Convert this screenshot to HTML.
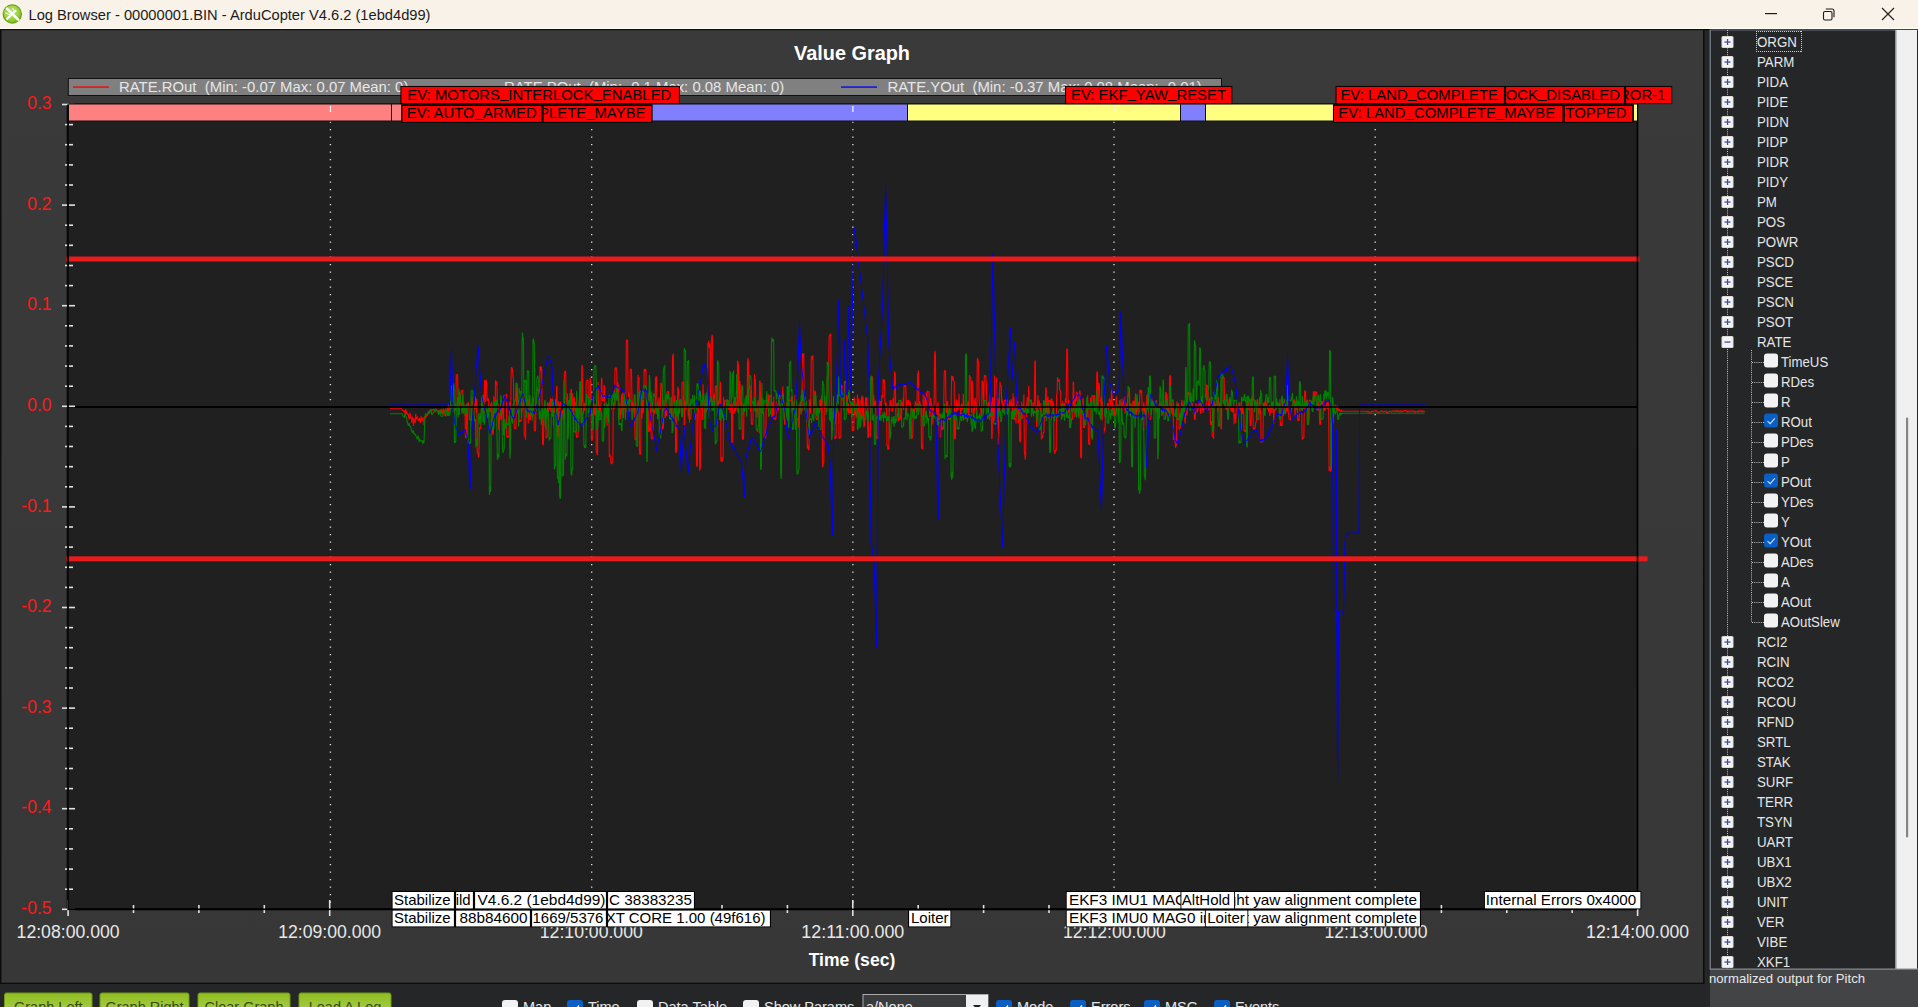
<!DOCTYPE html><html><head><meta charset="utf-8"><style>html,body{margin:0;padding:0;width:1918px;height:1007px;overflow:hidden;background:#252628}svg text{font-family:"Liberation Sans", sans-serif;white-space:pre}</style></head><body><svg width="1918" height="1007" viewBox="0 0 1918 1007" style="position:absolute;left:0;top:0;font-family:'Liberation Sans', sans-serif"><defs><linearGradient id="gbg" x1="0" y1="0" x2="0" y2="1"><stop offset="0" stop-color="#3a3a3a"/><stop offset="1" stop-color="#373737"/></linearGradient><linearGradient id="btn" x1="0" y1="0" x2="0" y2="1"><stop offset="0" stop-color="#8fbd1f"/><stop offset="1" stop-color="#b5d86a"/></linearGradient><clipPath id="plotclip"><rect x="69" y="105" width="1568" height="804"/></clipPath></defs><rect x="0" y="0" width="1918" height="1007" fill="#252628"/><rect x="0" y="0" width="1918" height="29" fill="#f9f2e9"/><rect x="0" y="27.8" width="1918" height="1.2" fill="#fffdf6"/><rect x="0" y="29" width="1918" height="1" fill="#1a1a1a"/><defs><radialGradient id="icg" cx="0.45" cy="0.4" r="0.6"><stop offset="0" stop-color="#c4e48a"/><stop offset="0.7" stop-color="#9ccf3c"/><stop offset="1" stop-color="#7cb81c"/></radialGradient></defs><circle cx="12.3" cy="14" r="9.7" fill="#5f9e0e"/><circle cx="12.3" cy="14" r="8.7" fill="url(#icg)"/><path d="M7 8.6 L18.2 19.6" stroke="#ffffff" stroke-width="2.6" stroke-linecap="round"/><path d="M7.2 18.8 L15.6 10.8" stroke="#fbfff4" stroke-width="2.2" stroke-linecap="round"/><path d="M5.5 13 L9.5 14.5 M13 8.5 L14.5 12" stroke="#eef8dc" stroke-width="1.3" stroke-linecap="round"/><text x="28.5" y="20" font-size="14.7" fill="#1c1c1c" text-anchor="start" font-weight="400" textLength="402" lengthAdjust="spacingAndGlyphs">Log Browser - 00000001.BIN - ArduCopter V4.6.2 (1ebd4d99)</text><rect x="1765" y="13" width="12" height="1.2" fill="#1c1c1c"/><rect x="1823.5" y="11.5" width="8.5" height="8.5" rx="1.5" fill="none" stroke="#1c1c1c" stroke-width="1.1"/><path d="M1825.8 9 H1832 a2 2 0 0 1 2 2 V17.2" fill="none" stroke="#1c1c1c" stroke-width="1.1"/><path d="M1882 8 L1894 20 M1894 8 L1882 20" stroke="#1c1c1c" stroke-width="1.1"/><rect x="0" y="29" width="1710" height="1.2" fill="#000"/><rect x="0" y="29" width="1704.7" height="955" fill="#0c0c0c"/><rect x="1.5" y="30.2" width="1701.5" height="952.5" fill="url(#gbg)"/><rect x="68" y="104.5" width="1569" height="804.8" fill="#202020"/><text x="852" y="60" font-size="20" fill="#ffffff" text-anchor="middle" font-weight="700" textLength="116" lengthAdjust="spacingAndGlyphs">Value Graph</text><line x1="330.45" y1="121.6" x2="330.45" y2="909.3" stroke="#e8e8e8" stroke-width="1.3" stroke-dasharray="1.1 6.4"/><line x1="591.7" y1="121.6" x2="591.7" y2="909.3" stroke="#e8e8e8" stroke-width="1.3" stroke-dasharray="1.1 6.4"/><line x1="852.9" y1="121.6" x2="852.9" y2="909.3" stroke="#e8e8e8" stroke-width="1.3" stroke-dasharray="1.1 6.4"/><line x1="1114.0" y1="121.6" x2="1114.0" y2="909.3" stroke="#e8e8e8" stroke-width="1.3" stroke-dasharray="1.1 6.4"/><line x1="1375.2" y1="121.6" x2="1375.2" y2="909.3" stroke="#e8e8e8" stroke-width="1.3" stroke-dasharray="1.1 6.4"/><rect x="68" y="406.2" width="1569" height="1.6" fill="#000"/><g clip-path="url(#plotclip)" fill="none" stroke-width="1.1" stroke-linejoin="bevel"><path d="M390.0 408.8L390.4 408.8L390.9 408.8L391.3 408.8L391.7 408.8L392.2 408.8L392.6 408.8L393.1 408.8L393.5 408.8L393.9 408.8L394.4 408.8L394.8 408.8L395.2 408.8L395.7 408.8L396.1 408.8L396.5 408.8L397.0 408.8L397.4 408.8L397.8 408.8L398.3 408.8L398.7 408.8L399.2 408.8L399.6 408.8L400.0 408.8L400.5 408.8L400.9 408.8L401.3 408.8L401.8 408.8L402.2 409.5L402.6 410.1L403.1 410.6L403.5 411.0L404.0 410.6L404.4 412.3L404.8 410.4L405.3 415.7L405.7 409.3L406.1 413.9L406.6 410.7L407.0 413.8L407.4 414.5L407.9 414.4L408.3 413.8L408.7 418.3L409.2 417.7L409.6 419.1L410.1 412.7L410.5 417.8L410.9 417.9L411.4 416.7L411.8 422.9L412.2 416.6L412.7 419.3L413.1 419.4L413.5 425.9L414.0 418.0L414.4 422.2L414.9 422.3L415.3 422.4L415.7 413.9L416.2 419.3L416.6 418.2L417.0 418.0L417.5 416.5L417.9 419.4L418.3 420.6L418.8 420.8L419.2 418.5L419.6 418.6L420.1 421.2L420.5 423.0L421.0 416.4L421.4 417.6L421.8 419.4L422.3 420.3L422.7 417.5L423.1 420.9L423.6 420.2L424.0 425.1L424.4 416.9L424.9 417.0L425.3 418.4L425.8 416.0L426.2 417.4L426.6 414.2L427.1 415.2L427.5 415.6L427.9 414.5L428.4 411.5L428.8 412.4L429.2 410.5L429.7 412.5L430.1 410.4L430.5 410.8L431.0 409.1L431.4 411.9L431.9 410.2L432.3 410.0L432.7 409.5L433.2 410.0L433.6 409.4L434.0 409.3L434.5 411.5L434.9 412.2L435.3 410.0L435.8 410.2L436.2 410.0L436.7 410.4L437.1 410.5L437.5 411.6L438.0 412.6L438.4 411.0L438.8 411.1L439.3 412.9L439.7 411.6L440.1 413.3L440.6 409.5L441.0 413.3L441.4 411.8L441.9 408.9L442.3 413.4L442.8 414.1L443.2 412.2L443.6 408.7L444.1 410.0L444.5 410.9L444.9 416.0L445.4 416.0L445.8 415.0L446.2 411.3L446.7 411.9L447.1 408.8L447.6 407.6L448.0 412.6L448.4 403.7L448.9 410.8L449.3 406.9L449.7 408.0L450.2 410.7L450.6 404.5L451.0 408.8L451.5 405.5L451.9 407.4L452.3 405.0L452.8 408.9L453.2 403.4L453.7 411.5L454.1 408.7L454.5 417.6L455.0 404.0L455.4 410.6L455.8 407.4L456.3 375.0L456.7 374.8L457.1 374.2L457.6 375.0L458.0 395.9L458.5 404.1L458.9 404.4L459.3 408.0L459.8 404.5L460.2 406.7L460.6 396.7L461.1 391.9L461.5 391.0L461.9 390.1L462.4 390.7L462.8 390.2L463.2 413.9L463.7 401.6L464.1 410.1L464.6 405.8L465.0 406.8L465.4 437.9L465.9 437.0L466.3 438.2L466.7 406.6L467.2 403.5L467.6 407.7L468.0 401.8L468.5 403.6L468.9 407.0L469.4 420.2L469.8 419.0L470.2 419.6L470.7 418.8L471.1 420.8L471.5 418.4L472.0 396.6L472.4 404.1L472.8 403.6L473.3 401.3L473.7 414.2L474.1 403.8L474.6 407.1L475.0 408.8L475.5 396.7L475.9 401.9L476.3 412.8L476.8 398.9L477.2 451.9L477.6 453.1L478.1 453.5L478.5 457.5L478.9 456.5L479.4 429.3L479.8 427.2L480.3 429.3L480.7 425.3L481.1 425.1L481.6 400.1L482.0 409.2L482.4 410.1L482.9 403.7L483.3 394.6L483.7 414.7L484.2 401.3L484.6 380.1L485.0 385.1L485.5 402.2L485.9 379.7L486.4 381.7L486.8 384.5L487.2 401.0L487.7 398.2L488.1 398.9L488.5 398.4L489.0 409.9L489.4 407.0L489.8 411.2L490.3 412.1L490.7 403.5L491.2 409.8L491.6 401.9L492.0 409.4L492.5 431.6L492.9 434.6L493.3 432.3L493.8 396.3L494.2 403.1L494.6 412.0L495.1 414.1L495.5 380.2L495.9 384.8L496.4 382.7L496.8 381.4L497.3 400.9L497.7 405.4L498.1 404.1L498.6 429.7L499.0 425.7L499.4 420.0L499.9 419.8L500.3 418.8L500.7 403.8L501.2 407.5L501.6 416.7L502.1 403.8L502.5 412.9L502.9 406.9L503.4 435.3L503.8 395.6L504.2 395.4L504.7 396.1L505.1 395.1L505.5 395.4L506.0 395.0L506.4 393.8L506.8 437.2L507.3 437.4L507.7 436.6L508.2 436.5L508.6 436.2L509.0 437.2L509.5 402.1L509.9 409.9L510.3 404.6L510.8 404.7L511.2 370.4L511.6 367.1L512.1 368.7L512.5 368.9L513.0 377.4L513.4 377.9L513.8 407.1L514.3 428.5L514.7 428.1L515.1 428.5L515.6 429.2L516.0 427.3L516.4 385.1L516.9 388.2L517.3 399.9L517.7 412.7L518.2 408.0L518.6 400.7L519.1 420.2L519.5 421.5L519.9 421.7L520.4 420.2L520.8 421.6L521.2 420.8L521.7 410.2L522.1 410.7L522.5 403.0L523.0 408.1L523.4 391.7L523.9 395.5L524.3 436.0L524.7 436.1L525.2 436.7L525.6 439.8L526.0 384.9L526.5 387.0L526.9 401.0L527.3 406.0L527.8 398.5L528.2 423.8L528.6 402.8L529.1 399.6L529.5 419.6L530.0 419.9L530.4 419.9L530.8 409.8L531.3 412.5L531.7 416.1L532.1 400.9L532.6 396.3L533.0 409.4L533.4 397.5L533.9 413.3L534.3 430.0L534.8 430.5L535.2 431.3L535.6 429.2L536.1 392.1L536.5 408.1L536.9 386.7L537.4 390.5L537.8 390.5L538.2 389.8L538.7 389.5L539.1 403.0L539.5 408.3L540.0 367.0L540.4 366.7L540.9 370.7L541.3 366.3L541.7 370.4L542.2 417.4L542.6 443.9L543.0 445.3L543.5 442.6L543.9 413.8L544.3 404.4L544.8 410.0L545.2 411.9L545.7 404.9L546.1 438.2L546.5 437.2L547.0 437.2L547.4 436.7L547.8 436.3L548.3 413.5L548.7 402.9L549.1 409.4L549.6 401.5L550.0 409.5L550.4 398.2L550.9 412.0L551.3 399.1L551.8 400.2L552.2 400.0L552.6 414.1L553.1 396.6L553.5 404.8L553.9 406.7L554.4 412.6L554.8 409.7L555.2 408.5L555.7 399.0L556.1 415.8L556.6 385.9L557.0 387.3L557.4 433.5L557.9 437.0L558.3 435.3L558.7 401.0L559.2 408.7L559.6 409.0L560.0 406.2L560.5 401.7L560.9 405.7L561.3 412.9L561.8 409.9L562.2 413.1L562.7 410.1L563.1 420.5L563.5 412.8L564.0 417.5L564.4 373.3L564.8 371.8L565.3 370.8L565.7 372.4L566.1 399.7L566.6 397.7L567.0 404.1L567.5 402.4L567.9 404.0L568.3 406.7L568.8 413.2L569.2 400.7L569.6 400.1L570.1 400.7L570.5 400.4L570.9 389.4L571.4 389.4L571.8 413.5L572.2 406.7L572.7 393.0L573.1 414.6L573.6 418.7L574.0 410.4L574.4 396.9L574.9 409.0L575.3 401.9L575.7 411.4L576.2 434.7L576.6 437.0L577.0 437.8L577.5 436.6L577.9 437.2L578.4 416.6L578.8 418.3L579.2 399.8L579.7 397.3L580.1 394.8L580.5 406.8L581.0 415.6L581.4 424.7L581.8 365.0L582.3 366.5L582.7 401.7L583.1 403.7L583.6 413.8L584.0 405.4L584.5 402.7L584.9 410.8L585.3 403.8L585.8 407.8L586.2 382.2L586.6 381.7L587.1 380.0L587.5 380.5L587.9 380.1L588.4 404.1L588.8 401.0L589.3 402.1L589.7 401.6L590.1 377.5L590.6 381.6L591.0 382.6L591.4 439.8L591.9 440.8L592.3 439.8L592.7 439.0L593.2 417.8L593.6 406.0L594.0 414.9L594.5 408.6L594.9 404.0L595.4 415.8L595.8 404.5L596.2 450.0L596.7 451.4L597.1 454.9L597.5 454.8L598.0 381.9L598.4 402.3L598.8 408.5L599.3 404.8L599.7 416.1L600.2 407.0L600.6 410.9L601.0 402.3L601.5 377.5L601.9 379.4L602.3 400.4L602.8 400.5L603.2 400.7L603.6 400.6L604.1 386.4L604.5 385.2L604.9 409.3L605.4 408.9L605.8 412.3L606.3 408.2L606.7 410.8L607.1 425.7L607.6 404.0L608.0 410.2L608.4 405.4L608.9 403.6L609.3 457.2L609.7 454.0L610.2 456.7L610.6 456.6L611.1 464.3L611.5 461.4L611.9 463.9L612.4 460.8L612.8 462.3L613.2 408.4L613.7 402.3L614.1 409.3L614.5 402.9L615.0 368.5L615.4 370.3L615.8 367.3L616.3 368.7L616.7 369.0L617.2 400.2L617.6 381.9L618.0 384.2L618.5 386.2L618.9 408.2L619.3 403.2L619.8 419.3L620.2 418.8L620.6 412.8L621.1 401.8L621.5 394.4L622.0 415.3L622.4 409.1L622.8 392.4L623.3 410.9L623.7 418.0L624.1 400.7L624.6 408.6L625.0 391.7L625.4 404.1L625.9 412.3L626.3 342.4L626.7 339.5L627.2 340.9L627.6 339.7L628.1 392.6L628.5 394.6L628.9 397.2L629.4 393.4L629.8 411.4L630.2 369.6L630.7 369.2L631.1 368.8L631.5 371.0L632.0 398.9L632.4 402.7L632.9 412.9L633.3 409.7L633.7 402.2L634.2 405.7L634.6 410.0L635.0 439.5L635.5 438.7L635.9 439.9L636.3 439.8L636.8 438.1L637.2 402.4L637.6 393.5L638.1 375.0L638.5 381.1L639.0 377.3L639.4 450.1L639.8 454.0L640.3 454.6L640.7 451.9L641.1 410.6L641.6 394.6L642.0 418.4L642.4 399.7L642.9 405.0L643.3 413.2L643.8 398.8L644.2 369.3L644.6 369.2L645.1 371.8L645.5 369.0L645.9 369.9L646.4 402.9L646.8 408.9L647.2 410.0L647.7 412.8L648.1 393.2L648.5 431.9L649.0 430.8L649.4 427.2L649.9 428.2L650.3 430.6L650.7 399.7L651.2 437.7L651.6 438.5L652.0 439.1L652.5 438.5L652.9 438.9L653.3 409.7L653.8 410.2L654.2 411.3L654.7 414.2L655.1 407.1L655.5 378.2L656.0 377.1L656.4 376.3L656.8 398.4L657.3 404.6L657.7 418.0L658.1 411.0L658.6 406.0L659.0 397.5L659.4 404.3L659.9 403.4L660.3 409.3L660.8 382.7L661.2 384.0L661.6 383.4L662.1 387.3L662.5 429.1L662.9 429.0L663.4 427.3L663.8 399.7L664.2 404.0L664.7 407.1L665.1 417.9L665.6 411.0L666.0 412.8L666.4 416.1L666.9 406.1L667.3 391.5L667.7 391.9L668.2 391.7L668.6 391.3L669.0 399.0L669.5 398.0L669.9 399.4L670.3 406.2L670.8 413.4L671.2 408.9L671.7 410.8L672.1 415.9L672.5 355.4L673.0 356.5L673.4 353.6L673.8 403.8L674.3 402.1L674.7 408.5L675.1 395.4L675.6 452.7L676.0 452.6L676.5 450.5L676.9 402.1L677.3 408.1L677.8 386.5L678.2 388.6L678.6 388.9L679.1 405.8L679.5 413.8L679.9 403.1L680.4 399.3L680.8 401.2L681.2 404.7L681.7 417.2L682.1 383.2L682.6 381.9L683.0 382.3L683.4 381.9L683.9 382.8L684.3 434.3L684.7 400.5L685.2 405.5L685.6 401.9L686.0 410.3L686.5 400.0L686.9 404.0L687.4 379.9L687.8 384.1L688.2 416.5L688.7 404.9L689.1 419.0L689.5 418.4L690.0 419.4L690.4 418.5L690.8 419.3L691.3 407.0L691.7 409.1L692.1 408.7L692.6 407.3L693.0 406.2L693.5 407.6L693.9 408.4L694.3 408.4L694.8 403.6L695.2 405.2L695.6 411.3L696.1 414.0L696.5 463.9L696.9 466.7L697.4 465.7L697.8 405.6L698.3 412.4L698.7 407.0L699.1 420.8L699.6 470.5L700.0 469.2L700.4 467.0L700.9 408.2L701.3 407.2L701.7 399.9L702.2 409.0L702.6 419.9L703.0 384.2L703.5 400.3L703.9 400.3L704.4 400.0L704.8 418.7L705.2 417.2L705.7 395.6L706.1 410.3L706.5 412.1L707.0 402.7L707.4 401.6L707.8 343.1L708.3 345.2L708.7 340.8L709.2 347.9L709.6 347.1L710.0 343.5L710.5 401.2L710.9 389.7L711.3 341.5L711.8 337.2L712.2 334.9L712.6 339.4L713.1 407.5L713.5 410.4L713.9 396.6L714.4 394.3L714.8 409.1L715.3 387.0L715.7 386.8L716.1 385.1L716.6 386.6L717.0 408.2L717.4 402.6L717.9 404.0L718.3 405.3L718.7 400.8L719.2 401.6L719.6 399.4L720.1 395.0L720.5 381.7L720.9 461.4L721.4 459.3L721.8 457.1L722.2 461.9L722.7 458.6L723.1 458.1L723.5 396.9L724.0 407.3L724.4 406.8L724.8 402.4L725.3 400.0L725.7 400.4L726.2 400.5L726.6 400.4L727.0 407.0L727.5 401.3L727.9 407.8L728.3 409.6L728.8 403.3L729.2 409.4L729.6 404.2L730.1 412.7L730.5 403.8L731.0 409.5L731.4 399.8L731.8 443.2L732.3 442.4L732.7 404.3L733.1 405.2L733.6 401.0L734.0 402.1L734.4 413.6L734.9 409.7L735.3 404.7L735.7 411.1L736.2 408.5L736.6 402.4L737.1 404.2L737.5 361.2L737.9 361.0L738.4 365.5L738.8 406.1L739.2 399.6L739.7 380.9L740.1 384.9L740.5 406.7L741.0 406.4L741.4 402.1L741.9 403.4L742.3 437.1L742.7 439.7L743.2 439.1L743.6 436.9L744.0 405.0L744.5 404.5L744.9 407.9L745.3 406.8L745.8 401.4L746.2 409.2L746.6 398.7L747.1 404.6L747.5 362.9L748.0 358.1L748.4 362.1L748.8 385.4L749.3 387.4L749.7 388.4L750.1 385.4L750.6 411.7L751.0 404.5L751.4 423.8L751.9 424.2L752.3 424.1L752.8 424.4L753.2 408.5L753.6 403.2L754.1 399.7L754.5 374.3L754.9 380.6L755.4 379.6L755.8 405.4L756.2 411.4L756.7 409.0L757.1 417.7L757.5 406.2L758.0 400.4L758.4 403.5L758.9 404.9L759.3 433.4L759.7 380.8L760.2 382.2L760.6 400.6L761.0 413.5L761.5 396.9L761.9 398.1L762.3 409.8L762.8 412.2L763.2 413.2L763.7 411.3L764.1 437.3L764.5 437.2L765.0 438.1L765.4 437.8L765.8 437.4L766.3 396.4L766.7 404.0L767.1 408.8L767.6 405.1L768.0 393.9L768.4 400.7L768.9 416.6L769.3 395.6L769.8 396.3L770.2 396.0L770.6 395.7L771.1 395.1L771.5 401.3L771.9 417.1L772.4 410.2L772.8 402.3L773.2 418.5L773.7 396.6L774.1 419.3L774.6 418.4L775.0 419.6L775.4 419.1L775.9 419.3L776.3 401.0L776.7 413.6L777.2 401.9L777.6 406.6L778.0 406.9L778.5 410.6L778.9 400.4L779.3 395.5L779.8 395.7L780.2 395.1L780.7 395.8L781.1 399.1L781.5 394.7L782.0 396.0L782.4 399.3L782.8 386.4L783.3 409.9L783.7 402.0L784.1 410.9L784.6 424.7L785.0 423.2L785.5 423.4L785.9 407.7L786.3 410.9L786.8 402.6L787.2 410.1L787.6 420.8L788.1 402.1L788.5 412.0L788.9 400.7L789.4 400.1L789.8 400.2L790.2 400.4L790.7 400.5L791.1 400.2L791.6 396.1L792.0 412.8L792.4 396.2L792.9 409.1L793.3 407.1L793.7 410.4L794.2 401.5L794.6 414.0L795.0 394.8L795.5 429.7L795.9 418.6L796.4 419.1L796.8 419.3L797.2 419.2L797.7 418.9L798.1 418.6L798.5 427.7L799.0 404.6L799.4 412.7L799.8 404.8L800.3 401.9L800.7 406.6L801.1 414.7L801.6 399.7L802.0 411.7L802.5 353.2L802.9 358.1L803.3 357.0L803.8 353.2L804.2 406.1L804.6 405.2L805.1 407.2L805.5 409.4L805.9 407.0L806.4 409.6L806.8 406.5L807.3 448.2L807.7 444.9L808.1 448.5L808.6 449.9L809.0 450.0L809.4 399.6L809.9 404.1L810.3 409.3L810.7 413.7L811.2 360.9L811.6 356.0L812.0 359.8L812.5 357.2L812.9 355.3L813.4 403.2L813.8 405.7L814.2 414.1L814.7 390.7L815.1 392.1L815.5 391.7L816.0 418.6L816.4 418.8L816.8 419.9L817.3 418.6L817.7 419.4L818.2 407.6L818.6 410.0L819.0 409.0L819.5 413.3L819.9 400.1L820.3 409.3L820.8 398.9L821.2 411.6L821.6 395.6L822.1 400.3L822.5 463.6L822.9 467.1L823.4 462.7L823.8 463.2L824.3 400.3L824.7 396.7L825.1 408.6L825.6 406.1L826.0 408.5L826.4 406.0L826.9 412.2L827.3 377.6L827.7 377.7L828.2 375.6L828.6 375.0L829.1 337.9L829.5 335.2L829.9 336.3L830.4 333.7L830.8 334.7L831.2 389.9L831.7 431.0L832.1 429.2L832.5 426.2L833.0 430.7L833.4 406.9L833.8 437.5L834.3 436.2L834.7 438.8L835.2 436.6L835.6 438.5L836.0 438.0L836.5 404.1L836.9 406.5L837.3 408.8L837.8 410.4L838.2 413.3L838.6 412.2L839.1 438.2L839.5 438.5L840.0 437.0L840.4 438.2L840.8 437.0L841.3 384.8L841.7 387.0L842.1 386.1L842.6 387.4L843.0 385.8L843.4 406.5L843.9 410.2L844.3 381.5L844.7 382.7L845.2 382.4L845.6 382.0L846.1 380.8L846.5 399.7L846.9 411.0L847.4 397.6L847.8 407.3L848.2 414.6L848.7 403.5L849.1 411.9L849.5 412.4L850.0 411.8L850.4 413.4L850.9 404.3L851.3 401.9L851.7 403.0L852.2 431.2L852.6 427.8L853.0 426.9L853.5 430.9L853.9 430.0L854.3 397.1L854.8 399.9L855.2 414.9L855.6 408.2L856.1 418.2L856.5 413.1L857.0 416.6L857.4 394.5L857.8 399.9L858.3 414.3L858.7 398.4L859.1 405.3L859.6 419.5L860.0 419.4L860.4 418.5L860.9 401.3L861.3 399.5L861.8 395.6L862.2 416.3L862.6 409.1L863.1 396.7L863.5 411.7L863.9 427.4L864.4 425.2L864.8 426.1L865.2 404.4L865.7 397.4L866.1 404.4L866.5 408.0L867.0 396.9L867.4 411.0L867.9 437.6L868.3 437.5L868.7 433.2L869.2 397.6L869.6 402.7L870.0 437.9L870.5 434.3L870.9 397.9L871.3 378.4L871.8 378.3L872.2 376.5L872.7 377.9L873.1 407.8L873.5 394.7L874.0 399.1L874.4 406.8L874.8 402.7L875.3 402.5L875.7 400.7L876.1 437.9L876.6 437.3L877.0 439.2L877.4 436.1L877.9 438.9L878.3 407.9L878.8 399.7L879.2 406.8L879.6 416.0L880.1 413.8L880.5 401.0L880.9 403.2L881.4 410.0L881.8 396.2L882.2 395.1L882.7 397.8L883.1 379.0L883.6 382.0L884.0 383.2L884.4 379.6L884.9 403.4L885.3 402.4L885.7 408.6L886.2 402.2L886.6 411.1L887.0 445.9L887.5 445.4L887.9 449.9L888.3 448.2L888.8 449.1L889.2 405.9L889.7 411.0L890.1 400.2L890.5 406.7L891.0 400.0L891.4 406.7L891.8 405.1L892.3 411.9L892.7 408.3L893.1 398.0L893.6 405.9L894.0 407.3L894.5 371.6L894.9 372.8L895.3 373.3L895.8 417.5L896.2 403.1L896.6 407.8L897.1 405.1L897.5 403.1L897.9 408.6L898.4 421.6L898.8 402.6L899.2 419.4L899.7 418.9L900.1 419.0L900.6 418.6L901.0 400.9L901.4 417.0L901.9 402.3L902.3 407.0L902.7 407.2L903.2 397.6L903.6 410.1L904.0 385.9L904.5 385.5L904.9 386.4L905.4 385.4L905.8 386.2L906.2 405.4L906.7 414.1L907.1 403.2L907.5 400.2L908.0 404.5L908.4 399.7L908.8 405.3L909.3 405.0L909.7 405.8L910.1 400.7L910.6 407.3L911.0 408.1L911.5 438.3L911.9 438.9L912.3 437.6L912.8 436.3L913.2 408.8L913.6 410.2L914.1 414.2L914.5 414.2L914.9 404.7L915.4 401.3L915.8 408.5L916.3 408.0L916.7 411.8L917.1 399.1L917.6 373.5L918.0 374.2L918.4 370.5L918.9 412.3L919.3 402.0L919.7 401.1L920.2 404.4L920.6 405.4L921.0 405.1L921.5 448.7L921.9 444.8L922.4 447.2L922.8 449.4L923.2 393.1L923.7 420.6L924.1 411.5L924.5 409.3L925.0 394.6L925.4 404.9L925.8 402.2L926.3 392.4L926.7 408.2L927.2 391.1L927.6 391.0L928.0 391.8L928.5 391.7L928.9 391.6L929.3 405.2L929.8 416.9L930.2 415.1L930.6 397.7L931.1 402.6L931.5 402.6L931.9 410.2L932.4 405.4L932.8 424.5L933.3 406.6L933.7 408.5L934.1 403.5L934.6 354.2L935.0 350.8L935.4 355.7L935.9 402.6L936.3 405.8L936.7 412.5L937.2 415.2L937.6 408.3L938.1 401.7L938.5 412.1L938.9 420.1L939.4 437.1L939.8 436.6L940.2 437.1L940.7 436.9L941.1 413.5L941.5 430.1L942.0 428.9L942.4 427.8L942.8 426.7L943.3 429.7L943.7 407.3L944.2 374.2L944.6 370.3L945.0 372.7L945.5 370.3L945.9 396.6L946.3 411.6L946.8 412.7L947.2 403.2L947.6 401.2L948.1 419.6L948.5 411.9L949.0 419.5L949.4 419.1L949.8 419.9L950.3 418.5L950.7 419.5L951.1 405.8L951.6 375.5L952.0 380.4L952.4 380.1L952.9 376.0L953.3 378.2L953.7 381.3L954.2 381.3L954.6 438.7L955.1 438.9L955.5 436.6L955.9 410.5L956.4 399.4L956.8 402.1L957.2 411.3L957.7 402.8L958.1 409.4L958.5 409.2L959.0 393.7L959.4 407.4L959.9 407.0L960.3 405.2L960.7 415.3L961.2 411.0L961.6 403.6L962.0 405.7L962.5 408.5L962.9 409.9L963.3 393.8L963.8 404.5L964.2 407.1L964.6 418.4L965.1 418.7L965.5 418.5L966.0 404.4L966.4 407.9L966.8 413.0L967.3 411.4L967.7 405.1L968.1 401.2L968.6 414.9L969.0 411.5L969.4 375.1L969.9 377.4L970.3 377.6L970.8 377.0L971.2 406.4L971.6 412.9L972.1 380.7L972.5 382.8L972.9 405.5L973.4 416.6L973.8 408.5L974.2 414.0L974.7 399.2L975.1 398.1L975.5 401.6L976.0 407.8L976.4 410.1L976.9 406.2L977.3 358.6L977.7 358.7L978.2 361.9L978.6 361.5L979.0 398.3L979.5 406.7L979.9 406.2L980.3 408.7L980.8 410.6L981.2 417.1L981.7 411.1L982.1 380.7L982.5 381.8L983.0 382.6L983.4 400.3L983.8 405.9L984.3 375.2L984.7 376.3L985.1 377.1L985.6 375.1L986.0 378.7L986.4 383.4L986.9 405.6L987.3 403.2L987.8 409.3L988.2 416.9L988.6 402.3L989.1 401.9L989.5 406.7L989.9 396.9L990.4 393.4L990.8 416.8L991.2 401.4L991.7 439.1L992.1 437.6L992.6 397.0L993.0 414.7L993.4 405.0L993.9 420.9L994.3 418.3L994.7 375.6L995.2 381.4L995.6 381.2L996.0 381.6L996.5 377.5L996.9 396.6L997.3 411.0L997.8 442.9L998.2 445.0L998.7 398.6L999.1 406.3L999.5 401.2L1000.0 381.9L1000.4 386.0L1000.8 386.0L1001.3 386.3L1001.7 403.4L1002.1 399.1L1002.6 404.3L1003.0 412.7L1003.5 403.9L1003.9 411.6L1004.3 400.5L1004.8 400.7L1005.2 400.7L1005.6 400.1L1006.1 399.7L1006.5 404.6L1006.9 399.3L1007.4 410.0L1007.8 403.8L1008.2 407.2L1008.7 414.2L1009.1 410.6L1009.6 400.4L1010.0 401.5L1010.4 407.9L1010.9 406.9L1011.3 399.0L1011.7 408.4L1012.2 403.4L1012.6 415.6L1013.0 393.2L1013.5 407.2L1013.9 397.2L1014.4 419.9L1014.8 418.4L1015.2 418.8L1015.7 418.4L1016.1 423.5L1016.5 396.5L1017.0 405.5L1017.4 406.1L1017.8 401.0L1018.3 422.9L1018.7 408.7L1019.1 405.0L1019.6 440.6L1020.0 441.5L1020.5 442.2L1020.9 407.1L1021.3 419.1L1021.8 401.8L1022.2 418.7L1022.6 405.8L1023.1 405.8L1023.5 410.5L1023.9 394.4L1024.4 453.9L1024.8 453.8L1025.3 459.8L1025.7 454.7L1026.1 421.4L1026.6 405.9L1027.0 401.2L1027.4 397.3L1027.9 407.5L1028.3 407.8L1028.7 385.7L1029.2 400.5L1029.6 400.4L1030.0 400.7L1030.5 400.5L1030.9 401.4L1031.4 399.7L1031.8 413.5L1032.2 406.3L1032.7 406.0L1033.1 402.3L1033.5 405.2L1034.0 407.5L1034.4 401.6L1034.8 362.5L1035.3 360.4L1035.7 408.3L1036.2 405.4L1036.6 426.8L1037.0 425.7L1037.5 404.9L1037.9 395.3L1038.3 407.1L1038.8 403.5L1039.2 400.3L1039.6 408.6L1040.1 406.6L1040.5 411.3L1040.9 403.1L1041.4 439.4L1041.8 436.8L1042.3 436.0L1042.7 438.1L1043.1 433.4L1043.6 432.3L1044.0 433.1L1044.4 402.3L1044.9 401.9L1045.3 409.9L1045.7 387.4L1046.2 388.5L1046.6 419.1L1047.1 415.7L1047.5 398.9L1047.9 396.4L1048.4 407.6L1048.8 418.4L1049.2 400.3L1049.7 400.5L1050.1 400.3L1050.5 400.2L1051.0 407.1L1051.4 399.1L1051.8 398.5L1052.3 407.3L1052.7 401.0L1053.2 417.7L1053.6 402.4L1054.0 451.0L1054.5 451.8L1054.9 454.0L1055.3 450.5L1055.8 449.8L1056.2 451.0L1056.6 394.6L1057.1 394.5L1057.5 377.1L1058.0 381.9L1058.4 380.2L1058.8 380.2L1059.3 379.0L1059.7 390.4L1060.1 390.4L1060.6 391.3L1061.0 408.3L1061.4 403.3L1061.9 407.1L1062.3 416.6L1062.7 400.8L1063.2 409.0L1063.6 411.4L1064.1 403.3L1064.5 407.7L1064.9 406.5L1065.4 399.6L1065.8 398.1L1066.2 403.2L1066.7 350.0L1067.1 348.7L1067.5 350.0L1068.0 401.1L1068.4 412.4L1068.9 400.0L1069.3 409.2L1069.7 425.7L1070.2 424.8L1070.6 424.3L1071.0 423.6L1071.5 419.3L1071.9 418.8L1072.3 418.5L1072.8 419.5L1073.2 382.1L1073.6 382.2L1074.1 408.0L1074.5 399.8L1075.0 417.0L1075.4 397.9L1075.8 400.6L1076.3 400.5L1076.7 391.6L1077.1 393.3L1077.6 392.9L1078.0 405.9L1078.4 402.9L1078.9 416.2L1079.3 397.4L1079.8 390.4L1080.2 393.1L1080.6 456.0L1081.1 458.1L1081.5 457.4L1081.9 407.8L1082.4 407.5L1082.8 399.8L1083.2 398.0L1083.7 428.1L1084.1 427.4L1084.5 427.7L1085.0 419.3L1085.4 419.8L1085.9 419.4L1086.3 419.6L1086.7 419.3L1087.2 404.4L1087.6 395.3L1088.0 408.1L1088.5 444.1L1088.9 443.4L1089.3 444.8L1089.8 443.7L1090.2 405.9L1090.7 397.3L1091.1 405.9L1091.5 404.2L1092.0 396.0L1092.4 395.3L1092.8 395.8L1093.3 396.2L1093.7 396.3L1094.1 403.7L1094.6 395.1L1095.0 407.8L1095.4 410.3L1095.9 404.5L1096.3 405.7L1096.8 373.2L1097.2 371.4L1097.6 373.1L1098.1 408.4L1098.5 382.9L1098.9 383.3L1099.4 386.2L1099.8 397.5L1100.2 400.9L1100.7 399.6L1101.1 406.6L1101.6 396.2L1102.0 410.4L1102.4 400.9L1102.9 419.6L1103.3 419.3L1103.7 433.4L1104.2 430.7L1104.6 428.0L1105.0 430.2L1105.5 406.4L1105.9 413.9L1106.3 411.5L1106.8 405.9L1107.2 406.5L1107.7 403.1L1108.1 407.5L1108.5 409.1L1109.0 402.4L1109.4 398.5L1109.8 400.7L1110.3 400.7L1110.7 407.0L1111.1 404.0L1111.6 387.5L1112.0 390.6L1112.5 412.4L1112.9 402.6L1113.3 415.8L1113.8 410.7L1114.2 405.2L1114.6 414.9L1115.1 414.9L1115.5 414.6L1115.9 408.2L1116.4 396.3L1116.8 406.2L1117.2 406.6L1117.7 404.6L1118.1 407.8L1118.6 413.6L1119.0 411.0L1119.4 404.4L1119.9 400.1L1120.3 403.8L1120.7 404.3L1121.2 406.7L1121.6 406.5L1122.0 408.8L1122.5 404.0L1122.9 402.1L1123.4 397.7L1123.8 405.6L1124.2 403.5L1124.7 396.2L1125.1 413.6L1125.5 408.8L1126.0 402.9L1126.4 405.3L1126.8 412.3L1127.3 410.6L1127.7 395.8L1128.1 395.9L1128.6 395.9L1129.0 387.9L1129.5 389.5L1129.9 408.2L1130.3 409.8L1130.8 405.9L1131.2 403.6L1131.6 409.3L1132.1 413.4L1132.5 409.5L1132.9 401.3L1133.4 400.9L1133.8 418.3L1134.3 408.6L1134.7 400.3L1135.1 400.1L1135.6 393.4L1136.0 401.8L1136.4 417.6L1136.9 403.2L1137.3 407.6L1137.7 405.4L1138.2 408.9L1138.6 402.0L1139.0 413.2L1139.5 402.0L1139.9 389.7L1140.4 391.7L1140.8 392.8L1141.2 390.2L1141.7 391.6L1142.1 411.1L1142.5 410.9L1143.0 409.6L1143.4 407.8L1143.8 402.4L1144.3 411.2L1144.7 407.5L1145.2 429.9L1145.6 426.4L1146.0 407.6L1146.5 402.1L1146.9 394.7L1147.3 396.2L1147.8 407.4L1148.2 406.5L1148.6 412.0L1149.1 418.5L1149.5 419.2L1149.9 418.6L1150.4 419.5L1150.8 419.1L1151.3 411.8L1151.7 409.3L1152.1 398.2L1152.6 403.6L1153.0 404.9L1153.4 407.2L1153.9 403.4L1154.3 407.3L1154.7 406.2L1155.2 412.1L1155.6 405.9L1156.1 406.7L1156.5 400.0L1156.9 412.3L1157.4 408.3L1157.8 414.1L1158.2 407.6L1158.7 406.5L1159.1 405.0L1159.5 405.1L1160.0 405.1L1160.4 405.0L1160.8 405.1L1161.3 401.9L1161.7 415.9L1162.2 412.9L1162.6 404.6L1163.0 409.4L1163.5 410.4L1163.9 411.5L1164.3 406.7L1164.8 405.4L1165.2 407.4L1165.6 392.1L1166.1 392.4L1166.5 415.4L1167.0 393.8L1167.4 408.9L1167.8 406.5L1168.3 414.4L1168.7 413.2L1169.1 407.4L1169.6 377.1L1170.0 375.9L1170.4 375.2L1170.9 409.1L1171.3 401.2L1171.7 413.4L1172.2 407.3L1172.6 415.1L1173.1 399.3L1173.5 439.9L1173.9 438.4L1174.4 436.4L1174.8 439.2L1175.2 443.3L1175.7 447.9L1176.1 443.2L1176.5 445.9L1177.0 401.5L1177.4 406.0L1177.9 406.1L1178.3 405.8L1178.7 403.1L1179.2 429.7L1179.6 428.3L1180.0 427.8L1180.5 427.9L1180.9 422.0L1181.3 409.8L1181.8 399.9L1182.2 404.1L1182.6 412.7L1183.1 411.3L1183.5 409.8L1184.0 409.7L1184.4 409.9L1184.8 420.7L1185.3 423.7L1185.7 406.6L1186.1 413.5L1186.6 411.1L1187.0 415.4L1187.4 404.1L1187.9 391.9L1188.3 393.9L1188.8 394.6L1189.2 392.3L1189.6 393.1L1190.1 406.4L1190.5 408.2L1190.9 400.4L1191.4 404.6L1191.8 407.5L1192.2 402.6L1192.7 407.8L1193.1 410.0L1193.5 407.6L1194.0 410.2L1194.4 418.9L1194.9 418.8L1195.3 420.0L1195.7 403.5L1196.2 406.3L1196.6 404.3L1197.0 412.4L1197.5 411.8L1197.9 410.5L1198.3 405.3L1198.8 401.9L1199.2 404.6L1199.7 404.4L1200.1 406.0L1200.5 413.9L1201.0 402.6L1201.4 404.5L1201.8 399.3L1202.3 410.0L1202.7 401.7L1203.1 412.9L1203.6 406.8L1204.0 409.9L1204.4 409.8L1204.9 409.7L1205.3 409.6L1205.8 409.9L1206.2 405.2L1206.6 384.6L1207.1 385.8L1207.5 385.9L1207.9 387.5L1208.4 410.2L1208.8 408.4L1209.2 408.4L1209.7 397.5L1210.1 408.2L1210.6 425.2L1211.0 421.7L1211.4 422.1L1211.9 421.6L1212.3 436.1L1212.7 436.6L1213.2 436.4L1213.6 438.9L1214.0 401.3L1214.5 405.4L1214.9 402.7L1215.3 407.4L1215.8 405.5L1216.2 405.7L1216.7 399.9L1217.1 404.2L1217.5 402.8L1218.0 412.3L1218.4 396.9L1218.8 408.3L1219.3 402.4L1219.7 405.0L1220.1 406.7L1220.6 405.1L1221.0 427.7L1221.5 429.4L1221.9 377.3L1222.3 378.7L1222.8 376.8L1223.2 376.6L1223.6 378.1L1224.1 377.3L1224.5 400.8L1224.9 406.2L1225.4 400.0L1225.8 408.4L1226.2 409.8L1226.7 405.9L1227.1 407.8L1227.6 410.5L1228.0 398.7L1228.4 409.6L1228.9 403.7L1229.3 406.6L1229.7 406.2L1230.2 405.9L1230.6 404.4L1231.0 411.8L1231.5 407.7L1231.9 408.1L1232.4 411.1L1232.8 412.3L1233.2 407.1L1233.7 404.1L1234.1 424.2L1234.5 414.0L1235.0 414.3L1235.4 414.4L1235.8 423.2L1236.3 407.5L1236.7 403.7L1237.1 408.4L1237.6 405.4L1238.0 402.8L1238.5 407.0L1238.9 403.6L1239.3 408.7L1239.8 402.1L1240.2 409.9L1240.6 410.3L1241.1 407.2L1241.5 409.2L1241.9 405.9L1242.4 413.9L1242.8 406.5L1243.3 412.0L1243.7 411.8L1244.1 431.1L1244.6 430.1L1245.0 431.9L1245.4 431.4L1245.9 431.8L1246.3 413.4L1246.7 401.1L1247.2 408.2L1247.6 395.8L1248.0 396.7L1248.5 397.4L1248.9 410.3L1249.4 407.9L1249.8 406.1L1250.2 426.0L1250.7 424.7L1251.1 423.5L1251.5 405.6L1252.0 402.7L1252.4 395.2L1252.8 409.3L1253.3 429.1L1253.7 428.7L1254.2 429.4L1254.6 428.2L1255.0 428.8L1255.5 424.9L1255.9 422.1L1256.3 421.6L1256.8 401.9L1257.2 400.8L1257.6 399.1L1258.1 409.5L1258.5 414.1L1258.9 412.3L1259.4 408.1L1259.8 402.6L1260.3 411.6L1260.7 412.8L1261.1 442.8L1261.6 441.7L1262.0 440.7L1262.4 440.8L1262.9 442.0L1263.3 411.1L1263.7 403.1L1264.2 403.1L1264.6 407.8L1265.1 401.0L1265.5 403.1L1265.9 399.7L1266.4 406.8L1266.8 403.5L1267.2 408.8L1267.7 406.7L1268.1 409.7L1268.5 409.7L1269.0 412.5L1269.4 404.9L1269.8 416.0L1270.3 412.1L1270.7 405.9L1271.2 409.7L1271.6 406.9L1272.0 412.9L1272.5 401.5L1272.9 406.8L1273.3 407.6L1273.8 424.1L1274.2 409.9L1274.6 409.9L1275.1 409.7L1275.5 410.0L1276.0 409.7L1276.4 401.1L1276.8 403.0L1277.3 401.6L1277.7 407.2L1278.1 407.9L1278.6 404.4L1279.0 406.9L1279.4 408.8L1279.9 399.4L1280.3 426.0L1280.7 422.4L1281.2 425.2L1281.6 425.9L1282.1 425.5L1282.5 402.0L1282.9 405.0L1283.4 411.9L1283.8 401.0L1284.2 406.2L1284.7 400.1L1285.1 406.8L1285.5 414.1L1286.0 411.2L1286.4 410.8L1286.9 406.1L1287.3 411.4L1287.7 399.3L1288.2 412.6L1288.6 413.5L1289.0 418.5L1289.5 419.6L1289.9 419.5L1290.3 419.9L1290.8 419.8L1291.2 409.1L1291.6 408.3L1292.1 405.2L1292.5 406.1L1293.0 404.0L1293.4 402.7L1293.8 402.8L1294.3 399.2L1294.7 407.7L1295.1 416.5L1295.6 403.8L1296.0 409.9L1296.4 403.4L1296.9 406.7L1297.3 409.3L1297.8 421.1L1298.2 419.6L1298.6 418.5L1299.1 420.9L1299.5 404.8L1299.9 401.8L1300.4 407.8L1300.8 407.2L1301.2 412.5L1301.7 406.5L1302.1 439.3L1302.5 438.9L1303.0 438.4L1303.4 436.8L1303.9 438.0L1304.3 403.3L1304.7 390.8L1305.2 391.1L1305.6 391.4L1306.0 408.4L1306.5 402.3L1306.9 405.6L1307.3 399.9L1307.8 410.8L1308.2 425.2L1308.7 423.3L1309.1 400.6L1309.5 400.0L1310.0 400.3L1310.4 400.5L1310.8 400.8L1311.3 408.0L1311.7 405.1L1312.1 407.6L1312.6 409.6L1313.0 411.7L1313.4 391.2L1313.9 392.8L1314.3 392.5L1314.8 401.9L1315.2 391.1L1315.6 392.6L1316.1 393.0L1316.5 392.0L1316.9 392.7L1317.4 406.2L1317.8 410.6L1318.2 409.5L1318.7 402.1L1319.1 402.5L1319.6 423.2L1320.0 424.2L1320.4 424.8L1320.9 403.9L1321.3 401.8L1321.7 401.6L1322.2 405.7L1322.6 401.1L1323.0 405.7L1323.5 405.2L1323.9 399.5L1324.3 410.5L1324.8 406.2L1325.2 410.7L1325.7 405.7L1326.1 405.8L1326.5 404.7L1327.0 402.2L1327.4 409.1L1327.8 407.6L1328.3 400.9L1328.7 411.7L1329.1 470.9L1329.6 469.0L1330.0 466.8L1330.5 471.5L1330.9 470.4L1331.3 424.4L1331.8 422.7L1332.2 422.8L1332.6 423.7L1333.1 422.7L1333.5 411.4L1333.9 406.5L1334.4 406.3L1334.8 408.4L1335.2 405.3L1335.7 405.1L1336.1 409.1L1336.6 408.8L1337.0 410.6L1337.4 405.4L1337.9 409.1L1338.3 410.5L1338.7 411.0L1339.2 409.0L1339.6 410.5L1340.0 410.8L1340.5 411.4L1340.9 411.0L1341.4 410.0L1341.8 411.1L1342.2 411.0L1342.7 411.1L1343.1 411.3L1343.5 411.3L1344.0 411.3L1344.4 411.3L1344.8 411.3L1345.3 411.3L1345.7 411.3L1346.1 411.3L1346.6 411.3L1347.0 411.3L1347.5 411.3L1347.9 411.3L1348.3 411.3L1348.8 411.3L1349.2 411.3L1349.6 411.3L1350.1 411.3L1350.5 411.3L1350.9 411.3L1351.4 411.3L1351.8 411.3L1352.3 411.3L1352.7 411.3L1353.1 411.3L1353.6 411.3L1354.0 411.3L1354.4 411.3L1354.9 411.3L1355.3 411.3L1355.7 411.3L1356.2 411.3L1356.6 411.3L1357.0 411.3L1357.5 411.3L1357.9 411.3L1358.4 411.3L1358.8 411.3L1359.2 411.3L1359.7 411.3L1360.1 411.3L1360.5 411.3L1361.0 411.3L1361.4 411.3L1361.8 411.3L1362.3 411.3L1362.7 411.3L1363.2 411.3L1363.6 411.3L1364.0 411.3L1364.5 411.3L1364.9 411.3L1365.3 411.2L1365.8 411.4L1366.2 411.5L1366.6 411.3L1367.1 411.0L1367.5 411.7L1367.9 411.7L1368.4 411.2L1368.8 411.3L1369.3 413.0L1369.7 413.0L1370.1 412.7L1370.6 412.8L1371.0 412.8L1371.4 411.1L1371.9 411.3L1372.3 411.9L1372.7 411.4L1373.2 411.2L1373.6 411.5L1374.1 411.1L1374.5 411.0L1374.9 410.8L1375.4 411.3L1375.8 411.1L1376.2 410.9L1376.7 411.0L1377.1 411.5L1377.5 411.2L1378.0 412.7L1378.4 412.4L1378.8 412.6L1379.3 412.4L1379.7 412.1L1380.2 411.2L1380.6 411.4L1381.0 411.6L1381.5 410.9L1381.9 411.4L1382.3 410.9L1382.8 411.4L1383.2 411.8L1383.6 412.1L1384.1 411.4L1384.5 411.8L1385.0 411.2L1385.4 411.2L1385.8 411.2L1386.3 411.0L1386.7 413.1L1387.1 412.9L1387.6 413.0L1388.0 411.9L1388.4 411.4L1388.9 411.9L1389.3 411.4L1389.7 411.3L1390.2 411.4L1390.6 411.6L1391.1 411.7L1391.5 412.0L1391.9 411.1L1392.4 411.1L1392.8 411.1L1393.2 410.9L1393.7 411.5L1394.1 410.8L1394.5 411.3L1395.0 411.4L1395.4 411.0L1395.9 411.5L1396.3 410.9L1396.7 411.8L1397.2 410.8L1397.6 410.6L1398.0 411.1L1398.5 411.1L1398.9 411.8L1399.3 411.9L1399.8 411.1L1400.2 411.2L1400.6 410.5L1401.1 412.1L1401.5 412.1L1402.0 411.5L1402.4 410.9L1402.8 411.8L1403.3 410.8L1403.7 410.9L1404.1 410.6L1404.6 410.8L1405.0 411.0L1405.4 410.6L1405.9 411.1L1406.3 410.5L1406.8 411.0L1407.2 412.3L1407.6 411.3L1408.1 412.0L1408.5 410.7L1408.9 411.1L1409.4 411.5L1409.8 412.1L1410.2 411.3L1410.7 411.0L1411.1 411.2L1411.5 411.1L1412.0 411.4L1412.4 410.7L1412.9 411.4L1413.3 411.3L1413.7 411.1L1414.2 411.2L1414.6 412.4L1415.0 412.4L1415.5 411.0L1415.9 411.6L1416.3 411.6L1416.8 411.4L1417.2 411.6L1417.7 411.8L1418.1 410.8L1418.5 410.8L1419.0 412.1L1419.4 411.3L1419.8 411.7L1420.3 411.1L1420.7 410.9L1421.1 410.8L1421.6 410.8L1422.0 412.0L1422.4 411.6L1422.9 410.9L1423.3 411.3L1423.8 411.5L1424.2 410.9L1424.6 412.1" stroke="#ff0000"/><path d="M390.0 413.8L390.4 413.8L390.9 413.8L391.3 413.8L391.7 413.8L392.2 413.8L392.6 413.8L393.1 413.8L393.5 413.8L393.9 413.8L394.4 413.8L394.8 413.8L395.2 413.8L395.7 413.8L396.1 413.8L396.5 413.8L397.0 413.8L397.4 413.8L397.8 413.8L398.3 413.8L398.7 413.8L399.2 413.8L399.6 413.8L400.0 413.8L400.5 413.8L400.9 413.8L401.3 413.8L401.8 413.8L402.2 413.9L402.6 415.1L403.1 416.2L403.5 415.9L404.0 417.7L404.4 417.5L404.8 414.2L405.3 415.8L405.7 416.0L406.1 416.9L406.6 417.3L407.0 421.2L407.4 422.6L407.9 423.7L408.3 425.5L408.7 425.5L409.2 423.0L409.6 425.9L410.1 426.1L410.5 426.9L410.9 427.1L411.4 430.6L411.8 430.2L412.2 432.9L412.7 432.5L413.1 430.5L413.5 431.6L414.0 434.3L414.4 434.2L414.9 433.8L415.3 434.6L415.7 435.5L416.2 436.0L416.6 438.2L417.0 438.6L417.5 439.0L417.9 435.8L418.3 436.5L418.8 439.9L419.2 442.2L419.6 438.6L420.1 440.0L420.5 440.6L421.0 440.6L421.4 441.6L421.8 441.0L422.3 440.6L422.7 443.8L423.1 441.0L423.6 440.7L424.0 443.2L424.4 431.1L424.9 417.0L425.3 414.2L425.8 413.5L426.2 414.7L426.6 414.1L427.1 414.0L427.5 413.9L427.9 413.4L428.4 411.8L428.8 413.6L429.2 413.1L429.7 413.8L430.1 410.1L430.5 410.1L431.0 410.1L431.4 412.1L431.9 414.9L432.3 414.4L432.7 413.5L433.2 412.9L433.6 412.2L434.0 411.7L434.5 410.3L434.9 410.8L435.3 409.1L435.8 409.4L436.2 409.3L436.7 409.6L437.1 411.5L437.5 411.4L438.0 411.7L438.4 414.5L438.8 414.1L439.3 410.0L439.7 413.6L440.1 410.5L440.6 412.2L441.0 416.5L441.4 415.8L441.9 416.5L442.3 416.1L442.8 416.2L443.2 412.9L443.6 410.3L444.1 411.2L444.5 413.1L444.9 412.2L445.4 410.6L445.8 408.6L446.2 410.6L446.7 412.9L447.1 416.3L447.6 412.6L448.0 411.9L448.4 415.9L448.9 412.0L449.3 411.6L449.7 415.6L450.2 411.0L450.6 409.6L451.0 385.5L451.5 386.3L451.9 386.9L452.3 387.6L452.8 385.9L453.2 412.3L453.7 383.5L454.1 388.4L454.5 442.9L455.0 441.2L455.4 443.0L455.8 440.7L456.3 411.5L456.7 404.5L457.1 403.6L457.6 397.0L458.0 417.6L458.5 409.2L458.9 388.4L459.3 415.1L459.8 391.8L460.2 398.6L460.6 401.6L461.1 402.3L461.5 403.4L461.9 413.8L462.4 397.9L462.8 394.4L463.2 412.2L463.7 404.8L464.1 408.7L464.6 404.9L465.0 415.3L465.4 415.9L465.9 406.8L466.3 404.0L466.7 413.2L467.2 404.6L467.6 419.0L468.0 442.7L468.5 438.5L468.9 443.7L469.4 442.3L469.8 442.9L470.2 443.5L470.7 441.3L471.1 391.4L471.5 390.4L472.0 390.6L472.4 390.3L472.8 391.3L473.3 414.5L473.7 407.0L474.1 415.8L474.6 421.3L475.0 419.0L475.5 420.0L475.9 447.4L476.3 445.8L476.8 439.2L477.2 439.2L477.6 444.9L478.1 422.2L478.5 418.9L478.9 412.8L479.4 416.7L479.8 424.5L480.3 423.0L480.7 413.2L481.1 418.1L481.6 396.2L482.0 396.1L482.4 395.5L482.9 422.2L483.3 402.8L483.7 419.5L484.2 424.8L484.6 421.9L485.0 411.1L485.5 416.1L485.9 411.9L486.4 406.2L486.8 409.9L487.2 411.1L487.7 418.2L488.1 413.1L488.5 405.0L489.0 411.9L489.4 495.0L489.8 491.1L490.3 486.9L490.7 491.8L491.2 415.4L491.6 403.0L492.0 416.2L492.5 429.8L492.9 429.7L493.3 428.6L493.8 429.0L494.2 419.6L494.6 401.8L495.1 413.5L495.5 406.7L495.9 408.8L496.4 399.4L496.8 419.7L497.3 458.7L497.7 459.8L498.1 453.7L498.6 455.9L499.0 457.4L499.4 414.6L499.9 414.0L500.3 414.9L500.7 395.4L501.2 396.3L501.6 418.3L502.1 420.5L502.5 449.8L502.9 453.0L503.4 451.0L503.8 450.3L504.2 448.3L504.7 418.6L505.1 422.8L505.5 426.1L506.0 428.8L506.4 423.1L506.8 423.2L507.3 424.7L507.7 424.3L508.2 423.5L508.6 424.9L509.0 415.9L509.5 416.4L509.9 458.6L510.3 453.7L510.8 422.3L511.2 421.1L511.6 408.1L512.1 416.0L512.5 423.8L513.0 404.3L513.4 419.5L513.8 410.6L514.3 400.1L514.7 400.3L515.1 400.5L515.6 400.5L516.0 382.5L516.4 383.9L516.9 386.4L517.3 383.2L517.7 413.8L518.2 399.8L518.6 426.5L519.1 387.8L519.5 392.5L519.9 390.9L520.4 392.4L520.8 391.2L521.2 414.6L521.7 416.7L522.1 340.2L522.5 332.5L523.0 340.9L523.4 337.6L523.9 408.8L524.3 381.9L524.7 380.1L525.2 382.4L525.6 380.1L526.0 380.3L526.5 417.8L526.9 395.7L527.3 370.5L527.8 372.4L528.2 370.7L528.6 370.9L529.1 412.9L529.5 412.8L530.0 395.2L530.4 410.7L530.8 414.7L531.3 407.0L531.7 403.9L532.1 420.6L532.6 412.4L533.0 340.5L533.4 338.5L533.9 341.0L534.3 343.7L534.8 392.9L535.2 399.6L535.6 410.8L536.1 410.8L536.5 405.0L536.9 377.8L537.4 376.9L537.8 375.8L538.2 378.1L538.7 378.7L539.1 413.2L539.5 419.5L540.0 410.7L540.4 413.1L540.9 419.3L541.3 424.6L541.7 419.9L542.2 407.3L542.6 412.8L543.0 417.7L543.5 412.5L543.9 426.2L544.3 411.2L544.8 400.3L545.2 400.5L545.7 429.2L546.1 420.1L546.5 409.4L547.0 418.7L547.4 402.1L547.8 411.2L548.3 411.5L548.7 416.2L549.1 440.4L549.6 437.8L550.0 439.7L550.4 437.0L550.9 438.2L551.3 415.0L551.8 413.1L552.2 398.9L552.6 416.7L553.1 401.7L553.5 425.5L553.9 411.1L554.4 469.1L554.8 467.0L555.2 464.4L555.7 466.0L556.1 408.4L556.6 409.2L557.0 402.0L557.4 476.9L557.9 479.1L558.3 478.4L558.7 483.2L559.2 411.1L559.6 495.2L560.0 498.7L560.5 498.1L560.9 415.9L561.3 412.2L561.8 413.7L562.2 476.5L562.7 474.0L563.1 474.7L563.5 475.5L564.0 380.5L564.4 392.3L564.8 404.3L565.3 459.6L565.7 455.4L566.1 453.6L566.6 456.5L567.0 453.9L567.5 393.6L567.9 439.1L568.3 436.4L568.8 400.0L569.2 404.3L569.6 402.7L570.1 393.1L570.5 400.8L570.9 470.7L571.4 475.5L571.8 474.8L572.2 468.2L572.7 469.2L573.1 409.5L573.6 407.3L574.0 431.8L574.4 431.1L574.9 432.3L575.3 432.4L575.7 431.4L576.2 431.3L576.6 390.7L577.0 422.1L577.5 405.8L577.9 417.2L578.4 406.8L578.8 431.7L579.2 418.0L579.7 382.0L580.1 382.7L580.5 381.2L581.0 416.7L581.4 422.6L581.8 410.2L582.3 425.8L582.7 412.4L583.1 420.8L583.6 422.3L584.0 445.5L584.5 448.0L584.9 445.3L585.3 445.3L585.8 448.1L586.2 413.5L586.6 393.7L587.1 397.1L587.5 397.4L587.9 397.2L588.4 397.4L588.8 416.8L589.3 400.1L589.7 400.3L590.1 400.2L590.6 400.7L591.0 405.0L591.4 400.8L591.9 411.5L592.3 417.3L592.7 429.3L593.2 427.4L593.6 401.3L594.0 369.5L594.5 366.9L594.9 365.4L595.4 365.5L595.8 365.5L596.2 379.9L596.7 429.9L597.1 424.2L597.5 428.4L598.0 424.7L598.4 409.6L598.8 420.0L599.3 419.5L599.7 419.7L600.2 418.6L600.6 419.9L601.0 411.3L601.5 411.8L601.9 415.4L602.3 441.3L602.8 441.0L603.2 441.3L603.6 440.4L604.1 403.5L604.5 413.0L604.9 427.8L605.4 417.2L605.8 410.2L606.3 402.6L606.7 413.6L607.1 417.9L607.6 411.9L608.0 405.7L608.4 422.7L608.9 395.8L609.3 395.3L609.7 395.7L610.2 396.0L610.6 395.4L611.1 396.3L611.5 409.4L611.9 405.0L612.4 403.3L612.8 394.2L613.2 398.6L613.7 394.5L614.1 391.4L614.5 396.0L615.0 406.3L615.4 393.4L615.8 399.3L616.3 388.0L616.7 400.6L617.2 395.9L617.6 393.8L618.0 391.0L618.5 416.9L618.9 425.0L619.3 423.4L619.8 424.9L620.2 422.9L620.6 424.7L621.1 423.4L621.5 430.6L622.0 430.9L622.4 409.5L622.8 412.1L623.3 400.1L623.7 400.7L624.1 393.0L624.6 403.6L625.0 394.0L625.4 420.1L625.9 406.9L626.3 399.1L626.7 404.5L627.2 408.2L627.6 404.9L628.1 399.6L628.5 416.4L628.9 400.4L629.4 400.1L629.8 400.7L630.2 400.7L630.7 400.1L631.1 400.3L631.5 402.7L632.0 419.4L632.4 419.2L632.9 412.1L633.3 407.3L633.7 410.7L634.2 394.4L634.6 395.5L635.0 394.5L635.5 407.0L635.9 408.9L636.3 444.9L636.8 445.7L637.2 446.7L637.6 445.0L638.1 398.4L638.5 412.9L639.0 391.6L639.4 398.9L639.8 408.7L640.3 391.0L640.7 395.4L641.1 391.8L641.6 401.5L642.0 400.1L642.4 389.6L642.9 391.9L643.3 398.1L643.8 385.6L644.2 385.1L644.6 385.8L645.1 386.7L645.5 387.4L645.9 385.7L646.4 388.0L646.8 461.8L647.2 461.2L647.7 401.3L648.1 401.7L648.5 402.8L649.0 399.2L649.4 375.1L649.9 379.8L650.3 402.8L650.7 394.0L651.2 391.7L651.6 396.5L652.0 411.7L652.5 401.8L652.9 412.1L653.3 394.9L653.8 393.2L654.2 396.3L654.7 396.3L655.1 395.7L655.5 396.3L656.0 413.1L656.4 407.2L656.8 414.2L657.3 401.9L657.7 419.2L658.1 415.4L658.6 413.5L659.0 406.5L659.4 436.6L659.9 437.1L660.3 436.6L660.8 438.3L661.2 424.6L661.6 423.0L662.1 422.7L662.5 400.8L662.9 388.2L663.4 368.9L663.8 368.9L664.2 367.2L664.7 365.4L665.1 405.9L665.6 395.3L666.0 403.3L666.4 397.1L666.9 393.4L667.3 398.6L667.7 398.5L668.2 395.9L668.6 393.8L669.0 400.1L669.5 418.6L669.9 418.9L670.3 418.8L670.8 419.3L671.2 396.7L671.7 400.6L672.1 432.9L672.5 432.2L673.0 429.4L673.4 415.1L673.8 410.2L674.3 401.5L674.7 413.3L675.1 408.3L675.6 420.2L676.0 414.4L676.5 400.1L676.9 415.9L677.3 412.2L677.8 414.0L678.2 421.0L678.6 408.7L679.1 400.3L679.5 400.6L679.9 400.5L680.4 400.5L680.8 400.4L681.2 407.0L681.7 416.4L682.1 406.9L682.6 416.7L683.0 404.4L683.4 399.3L683.9 395.7L684.3 348.0L684.7 351.1L685.2 350.4L685.6 350.0L686.0 407.3L686.5 404.2L686.9 405.2L687.4 361.1L687.8 363.5L688.2 361.9L688.7 360.2L689.1 406.3L689.5 422.8L690.0 404.5L690.4 410.3L690.8 399.3L691.3 400.0L691.7 403.0L692.1 405.2L692.6 394.9L693.0 401.1L693.5 401.3L693.9 408.4L694.3 394.9L694.8 419.4L695.2 419.0L695.6 405.1L696.1 407.6L696.5 410.3L696.9 383.6L697.4 386.7L697.8 383.3L698.3 387.1L698.7 394.9L699.1 400.6L699.6 391.9L700.0 390.5L700.4 391.7L700.9 405.3L701.3 408.5L701.7 405.7L702.2 402.4L702.6 396.4L703.0 399.5L703.5 404.4L703.9 393.9L704.4 427.4L704.8 428.2L705.2 427.2L705.7 428.7L706.1 392.6L706.5 400.2L707.0 407.7L707.4 409.6L707.8 399.1L708.3 406.0L708.7 409.7L709.2 419.1L709.6 401.1L710.0 401.8L710.5 397.0L710.9 398.7L711.3 396.2L711.8 407.4L712.2 411.0L712.6 400.6L713.1 403.8L713.5 396.4L713.9 399.0L714.4 403.4L714.8 416.4L715.3 444.4L715.7 441.1L716.1 443.4L716.6 440.9L717.0 440.9L717.4 362.4L717.9 360.4L718.3 363.9L718.7 362.9L719.2 401.6L719.6 419.9L720.1 408.9L720.5 408.0L720.9 420.9L721.4 405.7L721.8 410.6L722.2 414.7L722.7 418.3L723.1 408.9L723.5 419.6L724.0 418.4L724.4 419.9L724.8 419.6L725.3 419.5L725.7 419.6L726.2 419.4L726.6 406.4L727.0 399.1L727.5 402.0L727.9 402.9L728.3 400.0L728.8 407.3L729.2 406.0L729.6 404.3L730.1 371.1L730.5 373.5L731.0 394.5L731.4 401.2L731.8 396.5L732.3 396.5L732.7 372.4L733.1 373.5L733.6 370.6L734.0 405.7L734.4 404.1L734.9 396.9L735.3 407.0L735.7 398.4L736.2 397.5L736.6 374.2L737.1 376.7L737.5 398.0L737.9 412.6L738.4 405.3L738.8 404.9L739.2 429.4L739.7 427.8L740.1 428.8L740.5 427.9L741.0 429.4L741.4 395.6L741.9 384.8L742.3 386.4L742.7 387.1L743.2 414.9L743.6 404.5L744.0 407.7L744.5 411.6L744.9 400.3L745.3 397.8L745.8 398.1L746.2 395.1L746.6 416.5L747.1 400.7L747.5 395.0L748.0 387.4L748.4 393.8L748.8 409.2L749.3 375.0L749.7 376.1L750.1 376.2L750.6 375.8L751.0 378.4L751.4 390.6L751.9 405.6L752.3 401.5L752.8 403.1L753.2 401.3L753.6 402.1L754.1 406.3L754.5 397.1L754.9 411.5L755.4 399.7L755.8 404.1L756.2 429.0L756.7 430.0L757.1 429.3L757.5 431.8L758.0 428.3L758.4 425.4L758.9 425.1L759.3 396.4L759.7 395.6L760.2 407.8L760.6 469.4L761.0 469.6L761.5 465.7L761.9 383.1L762.3 414.0L762.8 398.5L763.2 400.3L763.7 410.4L764.1 400.7L764.5 400.7L765.0 400.7L765.4 400.7L765.8 400.8L766.3 404.0L766.7 391.3L767.1 403.8L767.6 403.5L768.0 401.4L768.4 407.6L768.9 416.6L769.3 415.2L769.8 414.3L770.2 414.5L770.6 413.7L771.1 395.7L771.5 341.9L771.9 337.6L772.4 340.3L772.8 341.5L773.2 339.0L773.7 341.1L774.1 391.2L774.6 390.8L775.0 390.9L775.4 390.7L775.9 391.0L776.3 399.2L776.7 392.8L777.2 396.5L777.6 408.1L778.0 405.8L778.5 394.2L778.9 399.9L779.3 401.1L779.8 405.9L780.2 403.5L780.7 472.4L781.1 479.0L781.5 472.9L782.0 397.3L782.4 394.9L782.8 404.9L783.3 393.2L783.7 407.8L784.1 419.7L784.6 419.3L785.0 419.9L785.5 419.7L785.9 408.0L786.3 416.4L786.8 417.7L787.2 386.5L787.6 386.5L788.1 386.8L788.5 427.6L788.9 423.7L789.4 364.9L789.8 362.3L790.2 362.9L790.7 360.8L791.1 390.6L791.6 391.4L792.0 389.1L792.4 429.1L792.9 429.5L793.3 428.5L793.7 429.6L794.2 413.8L794.6 412.8L795.0 400.3L795.5 410.9L795.9 405.4L796.4 399.5L796.8 468.0L797.2 474.3L797.7 473.9L798.1 473.8L798.5 469.5L799.0 468.8L799.4 409.4L799.8 414.0L800.3 408.5L800.7 407.5L801.1 395.3L801.6 400.7L802.0 389.2L802.5 400.5L802.9 400.1L803.3 400.5L803.8 390.0L804.2 410.2L804.6 405.8L805.1 405.8L805.5 396.5L805.9 413.4L806.4 401.1L806.8 414.5L807.3 423.9L807.7 420.0L808.1 424.4L808.6 434.6L809.0 435.0L809.4 420.6L809.9 418.9L810.3 418.5L810.7 419.5L811.2 418.9L811.6 422.9L812.0 418.8L812.5 413.9L812.9 418.1L813.4 418.8L813.8 420.8L814.2 395.3L814.7 395.1L815.1 396.2L815.5 395.8L816.0 396.2L816.4 413.6L816.8 416.0L817.3 406.3L817.7 412.5L818.2 407.2L818.6 411.1L819.0 429.5L819.5 428.6L819.9 429.9L820.3 428.6L820.8 429.4L821.2 428.5L821.6 396.5L822.1 403.0L822.5 380.6L822.9 381.9L823.4 383.7L823.8 385.4L824.3 400.1L824.7 395.6L825.1 405.0L825.6 402.1L826.0 415.0L826.4 397.6L826.9 394.4L827.3 362.0L827.7 362.8L828.2 364.2L828.6 362.7L829.1 404.3L829.5 420.2L829.9 406.9L830.4 411.9L830.8 422.0L831.2 410.1L831.7 440.1L832.1 437.9L832.5 414.3L833.0 411.1L833.4 396.1L833.8 435.7L834.3 424.5L834.7 422.9L835.2 423.1L835.6 423.0L836.0 405.7L836.5 412.4L836.9 395.1L837.3 394.7L837.8 402.4L838.2 404.4L838.6 376.4L839.1 395.4L839.5 396.1L840.0 395.7L840.4 396.2L840.8 395.4L841.3 398.9L841.7 395.1L842.1 394.2L842.6 392.2L843.0 399.3L843.4 401.5L843.9 381.8L844.3 418.5L844.7 420.0L845.2 419.4L845.6 418.6L846.1 418.9L846.5 401.7L846.9 405.2L847.4 398.9L847.8 397.8L848.2 392.0L848.7 398.8L849.1 390.0L849.5 398.6L850.0 402.7L850.4 402.1L850.9 401.7L851.3 407.1L851.7 417.6L852.2 415.8L852.6 401.8L853.0 406.7L853.5 401.0L853.9 407.1L854.3 408.1L854.8 409.0L855.2 410.2L855.6 412.7L856.1 403.2L856.5 409.1L857.0 406.3L857.4 429.2L857.8 429.8L858.3 427.7L858.7 412.1L859.1 414.5L859.6 411.1L860.0 427.9L860.4 426.0L860.9 426.1L861.3 414.2L861.8 419.6L862.2 416.5L862.6 416.0L863.1 416.9L863.5 422.3L863.9 419.8L864.4 419.4L864.8 419.8L865.2 419.6L865.7 419.2L866.1 414.0L866.5 410.6L867.0 412.1L867.4 419.2L867.9 417.8L868.3 420.8L868.7 411.8L869.2 413.0L869.6 412.4L870.0 422.5L870.5 378.3L870.9 376.4L871.3 377.0L871.8 375.7L872.2 419.8L872.7 419.6L873.1 415.6L873.5 420.6L874.0 414.0L874.4 443.8L874.8 444.9L875.3 443.3L875.7 444.6L876.1 419.6L876.6 416.6L877.0 418.0L877.4 418.6L877.9 415.5L878.3 419.3L878.8 414.8L879.2 420.4L879.6 417.9L880.1 415.8L880.5 415.5L880.9 421.0L881.4 416.7L881.8 418.4L882.2 413.3L882.7 417.4L883.1 414.9L883.6 422.1L884.0 411.6L884.4 417.4L884.9 412.9L885.3 417.8L885.7 417.6L886.2 415.6L886.6 421.1L887.0 416.8L887.5 420.9L887.9 416.4L888.3 420.4L888.8 416.3L889.2 419.1L889.7 436.0L890.1 439.5L890.5 436.1L891.0 425.6L891.4 420.0L891.8 416.6L892.3 421.1L892.7 419.3L893.1 423.8L893.6 416.3L894.0 426.6L894.5 421.2L894.9 416.3L895.3 422.8L895.8 421.8L896.2 419.1L896.6 421.2L897.1 416.3L897.5 413.5L897.9 415.6L898.4 417.1L898.8 400.4L899.2 400.7L899.7 400.5L900.1 400.2L900.6 400.5L901.0 400.3L901.4 413.3L901.9 428.1L902.3 425.9L902.7 427.3L903.2 425.8L903.6 425.6L904.0 418.2L904.5 418.3L904.9 417.7L905.4 419.4L905.8 407.1L906.2 414.6L906.7 413.1L907.1 420.1L907.5 415.2L908.0 413.4L908.4 415.2L908.8 416.1L909.3 417.8L909.7 439.3L910.1 437.5L910.6 416.5L911.0 411.4L911.5 408.6L911.9 410.1L912.3 408.5L912.8 416.8L913.2 418.1L913.6 412.6L914.1 411.3L914.5 417.2L914.9 419.5L915.4 415.7L915.8 419.0L916.3 416.0L916.7 418.1L917.1 403.0L917.6 403.3L918.0 405.1L918.4 415.2L918.9 405.1L919.3 405.1L919.7 405.1L920.2 405.1L920.6 405.2L921.0 405.1L921.5 415.4L921.9 417.0L922.4 415.9L922.8 417.5L923.2 426.2L923.7 426.1L924.1 425.8L924.5 425.8L925.0 416.9L925.4 411.3L925.8 417.2L926.3 410.5L926.7 423.4L927.2 415.6L927.6 417.3L928.0 420.0L928.5 418.3L928.9 436.4L929.3 437.8L929.8 436.0L930.2 440.0L930.6 439.9L931.1 438.7L931.5 418.3L931.9 414.3L932.4 418.1L932.8 416.1L933.3 418.8L933.7 412.2L934.1 417.0L934.6 416.2L935.0 417.0L935.4 419.0L935.9 417.5L936.3 421.9L936.7 417.8L937.2 416.8L937.6 425.2L938.1 421.3L938.5 423.7L938.9 425.4L939.4 414.0L939.8 414.1L940.2 414.7L940.7 414.8L941.1 418.5L941.5 415.3L942.0 416.4L942.4 418.0L942.8 412.4L943.3 414.6L943.7 418.6L944.2 414.4L944.6 404.1L945.0 459.1L945.5 456.4L945.9 455.2L946.3 457.0L946.8 455.8L947.2 457.1L947.6 412.9L948.1 409.8L948.5 411.9L949.0 417.2L949.4 405.5L949.8 408.4L950.3 412.0L950.7 416.8L951.1 475.2L951.6 479.8L952.0 477.5L952.4 471.6L952.9 477.8L953.3 414.8L953.7 415.4L954.2 413.3L954.6 419.0L955.1 419.6L955.5 420.1L955.9 420.1L956.4 416.3L956.8 417.6L957.2 428.9L957.7 427.2L958.1 429.7L958.5 428.6L959.0 428.7L959.4 423.2L959.9 421.0L960.3 415.1L960.7 418.6L961.2 418.6L961.6 421.2L962.0 413.0L962.5 414.8L962.9 414.6L963.3 420.7L963.8 419.2L964.2 405.8L964.6 407.3L965.1 415.3L965.5 354.7L966.0 354.9L966.4 353.5L966.8 416.8L967.3 422.2L967.7 418.6L968.1 417.3L968.6 417.4L969.0 416.6L969.4 416.8L969.9 414.1L970.3 416.0L970.8 415.4L971.2 425.2L971.6 414.1L972.1 432.1L972.5 429.3L972.9 429.8L973.4 414.7L973.8 413.6L974.2 417.4L974.7 427.6L975.1 427.3L975.5 429.2L976.0 420.3L976.4 415.4L976.9 410.1L977.3 418.7L977.7 416.4L978.2 419.7L978.6 415.8L979.0 422.3L979.5 413.6L979.9 417.4L980.3 415.6L980.8 420.1L981.2 431.4L981.7 430.8L982.1 430.5L982.5 430.2L983.0 407.5L983.4 413.9L983.8 409.6L984.3 400.1L984.7 400.6L985.1 400.2L985.6 400.3L986.0 400.7L986.4 415.0L986.9 413.6L987.3 414.7L987.8 419.0L988.2 411.8L988.6 407.7L989.1 413.3L989.5 420.2L989.9 413.6L990.4 412.2L990.8 415.9L991.2 414.0L991.7 413.6L992.1 413.9L992.6 414.5L993.0 411.7L993.4 411.0L993.9 423.6L994.3 423.2L994.7 423.2L995.2 424.8L995.6 423.3L996.0 423.6L996.5 423.8L996.9 422.2L997.3 413.9L997.8 409.9L998.2 414.9L998.7 416.2L999.1 416.3L999.5 407.3L1000.0 413.4L1000.4 411.3L1000.8 421.9L1001.3 421.5L1001.7 418.7L1002.1 409.8L1002.6 408.9L1003.0 409.9L1003.5 413.0L1003.9 408.6L1004.3 411.5L1004.8 414.7L1005.2 412.3L1005.6 414.2L1006.1 408.2L1006.5 413.6L1006.9 411.7L1007.4 414.6L1007.8 410.8L1008.2 407.2L1008.7 415.0L1009.1 465.1L1009.6 467.4L1010.0 463.0L1010.4 465.6L1010.9 466.8L1011.3 410.9L1011.7 419.0L1012.2 411.6L1012.6 419.4L1013.0 408.9L1013.5 419.3L1013.9 415.9L1014.4 410.0L1014.8 410.2L1015.2 416.8L1015.7 407.1L1016.1 410.5L1016.5 409.4L1017.0 411.7L1017.4 411.4L1017.8 413.8L1018.3 413.1L1018.7 412.7L1019.1 419.4L1019.6 418.8L1020.0 419.4L1020.5 420.0L1020.9 419.1L1021.3 408.4L1021.8 413.7L1022.2 407.3L1022.6 414.3L1023.1 410.9L1023.5 411.3L1023.9 409.9L1024.4 410.9L1024.8 411.7L1025.3 412.5L1025.7 408.3L1026.1 406.3L1026.6 413.5L1027.0 413.2L1027.4 409.0L1027.9 410.6L1028.3 412.2L1028.7 413.3L1029.2 400.1L1029.6 400.6L1030.0 400.6L1030.5 400.0L1030.9 400.5L1031.4 416.8L1031.8 408.3L1032.2 413.6L1032.7 411.6L1033.1 407.6L1033.5 416.3L1034.0 412.7L1034.4 411.9L1034.8 411.1L1035.3 411.8L1035.7 413.3L1036.2 411.6L1036.6 410.6L1037.0 420.7L1037.5 411.0L1037.9 411.7L1038.3 410.1L1038.8 410.2L1039.2 428.2L1039.6 430.0L1040.1 428.7L1040.5 429.7L1040.9 410.4L1041.4 417.1L1041.8 414.1L1042.3 414.5L1042.7 417.1L1043.1 417.8L1043.6 400.0L1044.0 400.7L1044.4 401.4L1044.9 415.5L1045.3 417.6L1045.7 409.7L1046.2 421.1L1046.6 416.2L1047.1 414.5L1047.5 401.0L1047.9 404.0L1048.4 402.6L1048.8 402.6L1049.2 418.8L1049.7 450.8L1050.1 453.0L1050.5 451.0L1051.0 419.0L1051.4 420.0L1051.8 413.1L1052.3 412.3L1052.7 410.7L1053.2 414.3L1053.6 409.2L1054.0 414.5L1054.5 421.0L1054.9 414.3L1055.3 415.7L1055.8 414.6L1056.2 417.0L1056.6 415.1L1057.1 414.3L1057.5 417.6L1058.0 416.8L1058.4 415.0L1058.8 411.9L1059.3 409.8L1059.7 409.6L1060.1 409.6L1060.6 409.8L1061.0 409.8L1061.4 420.0L1061.9 417.6L1062.3 404.3L1062.7 405.1L1063.2 405.6L1063.6 416.1L1064.1 416.6L1064.5 420.8L1064.9 407.7L1065.4 409.1L1065.8 408.0L1066.2 408.5L1066.7 418.0L1067.1 413.5L1067.5 411.4L1068.0 418.5L1068.4 415.7L1068.9 416.0L1069.3 415.2L1069.7 427.9L1070.2 427.2L1070.6 427.9L1071.0 411.6L1071.5 406.2L1071.9 409.6L1072.3 411.6L1072.8 411.8L1073.2 411.2L1073.6 407.4L1074.1 408.8L1074.5 409.6L1075.0 410.9L1075.4 413.4L1075.8 411.4L1076.3 403.7L1076.7 417.8L1077.1 408.7L1077.6 412.2L1078.0 400.1L1078.4 405.3L1078.9 418.3L1079.3 400.5L1079.8 400.3L1080.2 400.1L1080.6 400.2L1081.1 413.8L1081.5 409.5L1081.9 409.8L1082.4 409.7L1082.8 414.9L1083.2 411.9L1083.7 413.7L1084.1 423.4L1084.5 423.9L1085.0 424.4L1085.4 424.8L1085.9 423.3L1086.3 405.3L1086.7 397.5L1087.2 399.2L1087.6 400.5L1088.0 409.0L1088.5 403.8L1088.9 409.2L1089.3 405.6L1089.8 408.1L1090.2 404.8L1090.7 402.0L1091.1 407.6L1091.5 436.2L1092.0 438.0L1092.4 439.5L1092.8 406.6L1093.3 400.0L1093.7 397.5L1094.1 404.6L1094.6 411.3L1095.0 405.6L1095.4 411.8L1095.9 404.5L1096.3 414.2L1096.8 390.4L1097.2 390.7L1097.6 403.5L1098.1 410.8L1098.5 413.2L1098.9 414.8L1099.4 414.0L1099.8 411.4L1100.2 418.6L1100.7 407.0L1101.1 420.4L1101.6 412.4L1102.0 375.4L1102.4 378.4L1102.9 375.8L1103.3 378.2L1103.7 378.3L1104.2 377.3L1104.6 416.1L1105.0 415.5L1105.5 418.1L1105.9 408.3L1106.3 409.2L1106.8 408.7L1107.2 422.9L1107.7 423.4L1108.1 423.1L1108.5 423.1L1109.0 408.7L1109.4 415.2L1109.8 413.2L1110.3 416.4L1110.7 419.8L1111.1 408.6L1111.6 415.6L1112.0 408.9L1112.5 410.1L1112.9 414.5L1113.3 416.0L1113.8 415.9L1114.2 416.1L1114.6 427.2L1115.1 427.8L1115.5 428.1L1115.9 415.4L1116.4 411.0L1116.8 405.9L1117.2 409.4L1117.7 409.9L1118.1 416.4L1118.6 422.6L1119.0 404.3L1119.4 462.8L1119.9 462.3L1120.3 461.4L1120.7 460.2L1121.2 398.8L1121.6 421.6L1122.0 409.0L1122.5 424.7L1122.9 422.1L1123.4 423.7L1123.8 423.1L1124.2 436.7L1124.7 436.7L1125.1 436.4L1125.5 438.7L1126.0 436.5L1126.4 416.9L1126.8 411.1L1127.3 407.6L1127.7 415.5L1128.1 386.0L1128.6 387.4L1129.0 387.1L1129.5 389.9L1129.9 416.2L1130.3 407.5L1130.8 417.0L1131.2 415.4L1131.6 465.0L1132.1 466.7L1132.5 467.3L1132.9 413.1L1133.4 403.8L1133.8 406.4L1134.3 415.4L1134.7 412.9L1135.1 427.8L1135.6 398.6L1136.0 406.2L1136.4 410.1L1136.9 394.3L1137.3 395.4L1137.7 411.8L1138.2 411.8L1138.6 490.2L1139.0 486.0L1139.5 493.6L1139.9 491.7L1140.4 488.2L1140.8 429.2L1141.2 419.3L1141.7 418.6L1142.1 419.4L1142.5 419.8L1143.0 409.8L1143.4 430.9L1143.8 428.1L1144.3 476.5L1144.7 474.3L1145.2 480.2L1145.6 475.4L1146.0 412.5L1146.5 410.8L1146.9 407.4L1147.3 408.3L1147.8 408.9L1148.2 386.9L1148.6 408.5L1149.1 411.5L1149.5 376.1L1149.9 377.4L1150.4 375.4L1150.8 415.0L1151.3 400.4L1151.7 410.6L1152.1 406.1L1152.6 403.6L1153.0 400.1L1153.4 408.7L1153.9 401.2L1154.3 438.3L1154.7 437.2L1155.2 438.3L1155.6 437.9L1156.1 400.6L1156.5 409.6L1156.9 409.4L1157.4 412.8L1157.8 459.3L1158.2 454.6L1158.7 405.7L1159.1 409.1L1159.5 418.4L1160.0 386.4L1160.4 387.9L1160.8 389.9L1161.3 405.2L1161.7 410.4L1162.2 410.6L1162.6 414.1L1163.0 379.6L1163.5 382.6L1163.9 413.0L1164.3 419.5L1164.8 419.1L1165.2 418.9L1165.6 419.1L1166.1 408.7L1166.5 400.9L1167.0 400.8L1167.4 398.6L1167.8 421.3L1168.3 416.4L1168.7 420.9L1169.1 410.1L1169.6 419.2L1170.0 414.5L1170.4 385.5L1170.9 400.7L1171.3 400.1L1171.7 400.3L1172.2 400.4L1172.6 400.3L1173.1 400.3L1173.5 408.0L1173.9 414.1L1174.4 414.9L1174.8 413.8L1175.2 416.6L1175.7 409.3L1176.1 416.8L1176.5 404.3L1177.0 420.0L1177.4 419.2L1177.9 418.9L1178.3 419.0L1178.7 419.9L1179.2 419.1L1179.6 414.7L1180.0 412.5L1180.5 425.0L1180.9 416.8L1181.3 410.3L1181.8 409.7L1182.2 420.7L1182.6 405.3L1183.1 415.7L1183.5 406.6L1184.0 400.3L1184.4 411.0L1184.8 410.2L1185.3 396.6L1185.7 367.0L1186.1 369.4L1186.6 406.2L1187.0 395.3L1187.4 408.6L1187.9 390.2L1188.3 324.6L1188.8 325.0L1189.2 325.7L1189.6 322.7L1190.1 410.2L1190.5 410.7L1190.9 392.8L1191.4 400.0L1191.8 400.1L1192.2 400.6L1192.7 400.2L1193.1 388.5L1193.5 402.3L1194.0 399.1L1194.4 340.4L1194.9 343.0L1195.3 344.6L1195.7 346.6L1196.2 395.2L1196.6 400.3L1197.0 382.0L1197.5 383.1L1197.9 380.6L1198.3 383.1L1198.8 383.0L1199.2 385.8L1199.7 347.6L1200.1 348.2L1200.5 348.8L1201.0 401.5L1201.4 406.7L1201.8 396.0L1202.3 400.5L1202.7 403.8L1203.1 367.6L1203.6 368.9L1204.0 365.0L1204.4 369.4L1204.9 369.7L1205.3 398.1L1205.8 394.3L1206.2 398.3L1206.6 400.0L1207.1 400.4L1207.5 400.5L1207.9 392.4L1208.4 388.1L1208.8 386.6L1209.2 363.5L1209.7 361.4L1210.1 362.0L1210.6 364.0L1211.0 401.4L1211.4 396.3L1211.9 409.4L1212.3 397.1L1212.7 431.4L1213.2 430.6L1213.6 430.5L1214.0 391.7L1214.5 396.2L1214.9 399.2L1215.3 394.6L1215.8 397.8L1216.2 406.1L1216.7 380.1L1217.1 381.5L1217.5 380.3L1218.0 414.0L1218.4 426.3L1218.8 424.3L1219.3 426.5L1219.7 426.0L1220.1 405.8L1220.6 407.0L1221.0 373.5L1221.5 376.0L1221.9 372.4L1222.3 372.6L1222.8 375.8L1223.2 403.0L1223.6 404.1L1224.1 401.0L1224.5 399.5L1224.9 405.9L1225.4 405.5L1225.8 401.6L1226.2 394.3L1226.7 401.2L1227.1 394.1L1227.6 419.5L1228.0 419.5L1228.4 418.7L1228.9 402.8L1229.3 408.1L1229.7 396.7L1230.2 405.9L1230.6 399.4L1231.0 407.9L1231.5 389.7L1231.9 391.8L1232.4 392.0L1232.8 398.3L1233.2 403.1L1233.7 405.9L1234.1 400.7L1234.5 400.3L1235.0 400.4L1235.4 400.5L1235.8 400.3L1236.3 400.4L1236.7 404.2L1237.1 402.8L1237.6 400.0L1238.0 407.8L1238.5 408.4L1238.9 443.9L1239.3 440.4L1239.8 441.9L1240.2 442.9L1240.6 441.7L1241.1 443.1L1241.5 397.6L1241.9 396.9L1242.4 401.4L1242.8 398.9L1243.3 399.3L1243.7 400.8L1244.1 395.3L1244.6 394.0L1245.0 400.1L1245.4 401.2L1245.9 402.3L1246.3 396.7L1246.7 445.3L1247.2 447.4L1247.6 404.9L1248.0 401.3L1248.5 395.8L1248.9 400.8L1249.4 398.6L1249.8 400.3L1250.2 407.2L1250.7 401.3L1251.1 398.4L1251.5 405.9L1252.0 408.5L1252.4 378.0L1252.8 377.2L1253.3 376.5L1253.7 401.2L1254.2 398.7L1254.6 412.3L1255.0 407.7L1255.5 400.1L1255.9 402.0L1256.3 402.7L1256.8 409.2L1257.2 419.3L1257.6 419.2L1258.1 419.1L1258.5 419.8L1258.9 419.8L1259.4 401.4L1259.8 396.7L1260.3 404.0L1260.7 389.7L1261.1 393.5L1261.6 393.5L1262.0 405.0L1262.4 405.1L1262.9 405.1L1263.3 405.0L1263.7 405.1L1264.2 405.1L1264.6 414.4L1265.1 416.0L1265.5 398.2L1265.9 395.2L1266.4 394.6L1266.8 394.5L1267.2 402.3L1267.7 403.4L1268.1 397.1L1268.5 402.5L1269.0 402.2L1269.4 378.6L1269.8 377.1L1270.3 378.0L1270.7 377.9L1271.2 408.3L1271.6 402.3L1272.0 404.7L1272.5 408.4L1272.9 402.0L1273.3 407.4L1273.8 403.9L1274.2 375.9L1274.6 376.3L1275.1 377.6L1275.5 376.0L1276.0 409.7L1276.4 397.7L1276.8 401.3L1277.3 405.7L1277.7 406.2L1278.1 402.8L1278.6 406.4L1279.0 402.6L1279.4 418.9L1279.9 419.0L1280.3 418.8L1280.7 418.6L1281.2 400.3L1281.6 398.2L1282.1 395.6L1282.5 404.0L1282.9 397.7L1283.4 415.7L1283.8 414.5L1284.2 412.7L1284.7 413.6L1285.1 399.0L1285.5 406.3L1286.0 407.3L1286.4 400.2L1286.9 402.0L1287.3 384.8L1287.7 402.0L1288.2 393.1L1288.6 395.7L1289.0 400.3L1289.5 400.3L1289.9 400.3L1290.3 400.4L1290.8 400.3L1291.2 400.8L1291.6 398.2L1292.1 395.5L1292.5 392.8L1293.0 407.1L1293.4 400.4L1293.8 403.9L1294.3 402.8L1294.7 407.7L1295.1 408.5L1295.6 401.2L1296.0 405.0L1296.4 396.2L1296.9 403.4L1297.3 410.8L1297.8 400.5L1298.2 404.2L1298.6 406.0L1299.1 400.0L1299.5 381.5L1299.9 381.7L1300.4 383.1L1300.8 409.1L1301.2 405.0L1301.7 405.9L1302.1 411.7L1302.5 396.1L1303.0 410.4L1303.4 408.0L1303.9 406.8L1304.3 402.4L1304.7 406.3L1305.2 400.4L1305.6 408.4L1306.0 400.3L1306.5 402.3L1306.9 404.9L1307.3 423.4L1307.8 424.9L1308.2 424.6L1308.7 422.8L1309.1 403.6L1309.5 403.9L1310.0 404.4L1310.4 400.6L1310.8 401.4L1311.3 403.3L1311.7 400.8L1312.1 411.2L1312.6 411.1L1313.0 397.5L1313.4 395.7L1313.9 406.4L1314.3 395.9L1314.8 396.2L1315.2 396.0L1315.6 395.0L1316.1 396.4L1316.5 409.7L1316.9 408.8L1317.4 405.6L1317.8 398.9L1318.2 397.5L1318.7 395.2L1319.1 402.1L1319.6 400.6L1320.0 400.5L1320.4 394.1L1320.9 418.8L1321.3 419.6L1321.7 418.6L1322.2 419.4L1322.6 418.5L1323.0 419.4L1323.5 404.2L1323.9 393.5L1324.3 399.5L1324.8 390.3L1325.2 393.1L1325.7 396.6L1326.1 390.5L1326.5 400.9L1327.0 395.6L1327.4 393.2L1327.8 392.0L1328.3 395.4L1328.7 394.6L1329.1 399.3L1329.6 350.0L1330.0 352.8L1330.5 350.6L1330.9 462.9L1331.3 469.9L1331.8 462.6L1332.2 407.6L1332.6 396.9L1333.1 400.8L1333.5 416.5L1333.9 411.7L1334.4 406.7L1334.8 411.9L1335.2 414.3L1335.7 412.3L1336.1 411.5L1336.6 410.7L1337.0 410.6L1337.4 413.8L1337.9 419.8L1338.3 419.2L1338.7 419.4L1339.2 413.8L1339.6 413.3L1340.0 414.1L1340.5 415.5L1340.9 412.4L1341.4 413.6L1341.8 414.0L1342.2 413.4L1342.7 413.5L1343.1 413.3L1343.5 413.3L1344.0 413.3L1344.4 413.3L1344.8 413.3L1345.3 413.3L1345.7 413.3L1346.1 413.3L1346.6 413.3L1347.0 413.3L1347.5 413.3L1347.9 413.3L1348.3 413.3L1348.8 413.3L1349.2 413.3L1349.6 413.3L1350.1 413.3L1350.5 413.3L1350.9 413.3L1351.4 413.3L1351.8 413.3L1352.3 413.3L1352.7 413.3L1353.1 413.3L1353.6 413.3L1354.0 413.3L1354.4 413.3L1354.9 413.3L1355.3 413.3L1355.7 413.3L1356.2 413.3L1356.6 413.3L1357.0 413.3L1357.5 413.3L1357.9 413.3L1358.4 413.3L1358.8 413.3L1359.2 413.3L1359.7 413.3L1360.1 413.3L1360.5 413.3L1361.0 413.3L1361.4 413.3L1361.8 413.3L1362.3 413.3L1362.7 413.3L1363.2 413.3L1363.6 413.3L1364.0 413.3L1364.5 413.3L1364.9 413.3L1365.3 413.3L1365.8 413.3L1366.2 413.3L1366.6 413.3L1367.1 413.3L1367.5 413.3L1367.9 413.3L1368.4 413.3L1368.8 413.3L1369.3 413.3L1369.7 413.3L1370.1 413.3L1370.6 413.3L1371.0 413.3L1371.4 413.3L1371.9 413.3L1372.3 413.3L1372.7 413.3L1373.2 413.3L1373.6 413.3L1374.1 413.3L1374.5 413.3L1374.9 413.3L1375.4 413.3L1375.8 413.3L1376.2 413.3L1376.7 413.3L1377.1 413.3L1377.5 413.3L1378.0 413.3L1378.4 413.3L1378.8 413.3L1379.3 413.3L1379.7 413.3L1380.2 413.3L1380.6 413.3L1381.0 413.3L1381.5 413.3L1381.9 413.3L1382.3 413.3L1382.8 413.3L1383.2 413.3L1383.6 413.3L1384.1 413.3L1384.5 413.3L1385.0 413.3L1385.4 413.3L1385.8 413.3L1386.3 413.3L1386.7 413.3L1387.1 413.3L1387.6 413.3L1388.0 413.3L1388.4 413.3L1388.9 413.3L1389.3 413.3L1389.7 413.3L1390.2 413.3L1390.6 413.3L1391.1 413.3L1391.5 413.3L1391.9 413.3L1392.4 413.3L1392.8 413.3L1393.2 413.3L1393.7 413.3L1394.1 413.3L1394.5 413.3L1395.0 413.3L1395.4 413.3L1395.9 413.3L1396.3 413.3L1396.7 413.3L1397.2 413.3L1397.6 413.3L1398.0 413.3L1398.5 413.3L1398.9 413.3L1399.3 413.3L1399.8 413.3L1400.2 413.3L1400.6 413.3L1401.1 413.3L1401.5 413.3L1402.0 413.3L1402.4 413.3L1402.8 413.3L1403.3 413.3L1403.7 413.3L1404.1 413.3L1404.6 413.3L1405.0 413.3L1405.4 413.3L1405.9 413.3L1406.3 413.3L1406.8 413.3L1407.2 413.3L1407.6 413.3L1408.1 413.3L1408.5 413.3L1408.9 413.3L1409.4 413.3L1409.8 413.3L1410.2 413.3L1410.7 413.3L1411.1 413.3L1411.5 413.3L1412.0 413.3L1412.4 413.3L1412.9 413.3L1413.3 413.3L1413.7 413.3L1414.2 413.3L1414.6 413.3L1415.0 413.3L1415.5 413.3L1415.9 413.3L1416.3 413.3L1416.8 413.3L1417.2 413.3L1417.7 413.3L1418.1 413.3L1418.5 413.3L1419.0 413.3L1419.4 413.3L1419.8 413.3L1420.3 413.3L1420.7 413.3L1421.1 413.3L1421.6 413.3L1422.0 413.3L1422.4 413.3L1422.9 413.3L1423.3 413.3L1423.8 413.3L1424.2 413.3L1424.6 413.3" stroke="#008000"/><path d="M390.0 405.0L390.0 405.0L390.4 405.0L390.9 405.0L391.3 405.0L391.7 405.0L392.2 405.0L392.6 405.0L393.1 405.0L393.5 405.0L393.9 405.0L394.4 405.0L394.8 405.0L395.2 405.0L395.7 405.0L396.1 405.0L396.5 405.0L397.0 405.0L397.4 405.0L397.8 405.0L398.3 405.0L398.7 405.0L399.2 405.0L399.6 405.0L400.0 405.0L400.5 405.0L400.9 405.0L401.3 405.0L401.8 405.0L402.2 405.0L402.6 405.0L403.1 405.0L403.5 405.0L404.0 405.0L404.4 405.0L404.8 405.0L405.3 405.0L405.7 405.0L406.1 405.0L406.6 405.0L407.0 405.0L407.4 405.0L407.9 405.0L408.3 405.0L408.7 405.0L409.2 405.0L409.6 405.0L410.1 405.0L410.5 405.0L410.9 405.0L411.4 405.0L411.8 405.0L412.2 405.0L412.7 405.0L413.1 405.0L413.5 405.0L414.0 405.0L414.4 405.0L414.9 405.0L415.3 405.0L415.7 405.0L416.2 405.0L416.6 405.0L417.0 405.0L417.5 405.0L417.9 405.0L418.3 405.0L418.8 405.0L419.2 405.0L419.6 405.0L420.1 405.0L420.5 405.0L421.0 405.0L421.4 405.0L421.8 405.0L422.3 405.0L422.7 405.0L423.1 405.0L423.6 405.0L424.0 405.0L424.4 405.0L424.9 405.0L425.3 405.0L425.8 405.0L426.2 405.0L426.6 405.0L427.1 405.0L427.5 405.0L427.9 405.0L428.4 405.0L428.8 405.0L429.2 405.0L429.7 405.0L430.1 405.0L430.5 405.0L431.0 405.0L431.4 405.0L431.9 405.0L432.3 405.0L432.7 405.0L433.2 405.0L433.6 405.0L434.0 405.0L434.5 405.0L434.9 405.0L435.3 405.0L435.8 405.0L436.2 405.0L436.7 405.0L437.1 405.0L437.5 405.0L438.0 405.0L438.4 405.0L438.8 405.0L439.3 405.0L439.7 405.0L440.1 405.0L440.6 405.0L441.0 405.0L441.4 405.0L441.9 405.0L442.3 405.0L442.8 405.0L443.2 405.0L443.6 405.0L444.1 405.0L444.5 405.0L444.9 405.0L445.4 405.0L445.8 405.0L446.2 405.0L446.7 405.0L447.1 405.0L447.6 405.0L448.0 405.0L448.0 405.0L448.4 403.9L448.9 402.9L449.3 401.8L449.7 400.7L450.0 400.0L450.2 393.6L450.6 379.0L451.0 363.5L451.5 348.5L451.5 347.0L451.9 364.3L452.3 381.9L452.8 399.9L453.0 410.0L453.2 412.6L453.7 412.9L454.1 417.7L454.5 420.5L455.0 424.8L455.0 425.0L455.4 425.5L455.8 426.7L456.3 428.9L456.7 428.8L457.1 429.3L457.6 432.3L458.0 433.3L458.5 434.7L458.6 434.0L458.9 434.3L459.3 433.0L459.8 434.5L460.2 432.9L460.6 433.2L461.1 431.8L461.5 432.1L461.9 432.8L462.4 432.8L462.8 432.1L463.2 432.9L463.7 431.5L464.1 429.5L464.6 431.7L465.0 429.1L465.0 431.0L465.4 430.8L465.9 433.2L466.3 435.4L466.7 436.7L467.2 437.3L467.6 439.1L468.0 440.0L468.0 439.9L468.5 453.9L468.9 462.2L469.4 473.0L469.8 483.6L470.0 489.0L470.2 483.4L470.7 469.7L471.1 456.8L471.5 443.5L472.0 430.6L472.0 430.0L472.4 424.1L472.8 417.4L473.3 410.9L473.7 403.8L474.0 400.0L474.1 399.0L474.6 392.6L475.0 387.7L475.5 380.9L475.9 374.7L476.3 368.5L476.8 363.6L477.2 356.9L477.6 350.1L478.0 346.0L478.1 346.3L478.5 351.3L478.9 360.5L479.4 366.8L479.8 370.4L480.3 376.9L480.7 383.2L481.1 389.5L481.4 394.0L481.6 395.1L482.0 396.9L482.4 398.8L482.9 401.0L483.3 402.8L483.7 404.9L484.2 404.9L484.6 407.7L485.0 410.0L485.0 410.7L485.5 410.7L485.9 415.6L486.4 417.6L486.8 418.7L487.2 421.0L487.7 422.5L488.1 426.0L488.5 427.5L489.0 429.2L489.4 429.8L489.8 433.0L489.8 433.8L490.3 430.6L490.7 430.4L491.2 428.0L491.6 427.1L492.0 426.8L492.5 422.4L492.9 422.1L493.3 419.9L493.8 418.5L494.2 418.0L494.6 415.5L495.0 415.0L495.1 413.8L495.5 413.7L495.9 415.6L496.4 413.2L496.8 412.2L497.3 412.8L497.7 410.5L498.1 411.2L498.6 411.5L499.0 410.2L499.4 409.3L499.9 407.0L500.0 409.0L500.3 409.1L500.7 407.0L501.2 407.0L501.6 406.3L502.1 402.7L502.5 402.8L502.9 400.3L503.4 400.9L503.8 398.8L504.2 398.7L504.7 396.2L505.0 396.0L505.1 395.6L505.5 396.5L506.0 398.5L506.4 401.3L506.8 399.1L507.3 400.8L507.7 403.1L508.2 404.0L508.6 404.7L509.0 408.6L509.5 407.7L509.9 410.8L510.0 410.0L510.3 410.1L510.8 409.9L511.2 413.7L511.6 415.7L512.1 416.3L512.5 418.0L513.0 417.2L513.4 418.0L513.5 419.5L513.8 419.0L514.3 416.9L514.7 416.8L515.1 414.4L515.6 413.5L516.0 412.9L516.4 411.4L516.9 410.2L517.3 408.5L517.7 409.1L518.2 406.6L518.6 404.9L519.1 404.5L519.5 402.1L519.9 402.3L520.4 402.1L520.8 399.4L521.2 397.3L521.7 395.9L522.1 395.7L522.5 393.7L522.8 394.0L523.0 393.6L523.4 396.4L523.9 397.4L524.3 400.1L524.7 401.4L525.2 402.6L525.6 405.8L526.0 407.2L526.5 407.7L526.9 408.9L527.0 410.0L527.3 411.0L527.8 411.4L528.2 410.1L528.6 410.2L529.1 412.3L529.5 412.6L530.0 411.1L530.4 410.9L530.8 411.8L531.3 411.2L531.7 412.0L532.1 412.7L532.6 412.9L533.0 413.2L533.4 411.4L533.9 410.8L534.3 414.0L534.6 413.0L534.8 412.8L535.2 411.5L535.6 409.2L536.1 409.0L536.5 407.0L536.9 404.2L537.4 404.2L537.8 399.8L538.2 398.3L538.7 398.9L539.1 397.9L539.5 394.9L539.7 395.0L540.0 393.8L540.4 391.9L540.9 389.6L541.3 388.5L541.7 386.3L542.2 383.5L542.6 380.6L543.0 379.4L543.5 377.2L543.9 374.1L544.3 371.9L544.8 370.9L545.2 368.3L545.7 366.6L546.1 365.6L546.5 364.0L547.0 361.1L547.4 358.9L547.8 356.4L548.0 356.0L548.3 357.1L548.7 357.6L549.1 358.0L549.6 358.3L550.0 361.0L550.4 360.1L550.9 363.3L551.3 363.9L551.8 364.8L552.0 365.0L552.2 370.6L552.6 384.7L553.0 395.0L553.1 394.8L553.5 397.8L553.9 399.3L554.4 402.7L554.8 404.9L555.2 407.1L555.7 412.3L556.1 414.4L556.6 416.0L557.0 417.3L557.4 421.8L557.9 424.5L558.0 425.0L558.3 423.8L558.7 420.5L559.2 420.8L559.6 419.5L560.0 415.8L560.5 412.9L560.9 412.3L561.3 409.0L561.8 408.2L562.2 406.7L562.7 403.8L563.0 403.0L563.1 404.1L563.5 403.7L564.0 404.4L564.4 405.0L564.8 405.3L565.3 406.4L565.7 405.0L566.1 406.6L566.6 406.1L567.0 406.3L567.5 406.4L567.9 407.4L568.3 406.9L568.8 406.4L569.2 408.9L569.6 408.9L570.0 409.0L570.1 408.9L570.5 410.7L570.9 409.0L571.4 412.3L571.8 410.9L572.2 412.5L572.7 414.4L573.1 415.5L573.6 415.7L574.0 416.0L574.4 417.5L574.9 419.5L575.0 418.0L575.3 417.8L575.7 419.3L576.2 418.9L576.6 420.8L577.0 421.4L577.5 422.1L577.9 422.3L578.4 421.9L578.8 422.6L579.2 423.2L579.7 424.9L580.1 424.9L580.5 425.2L581.0 426.4L581.0 426.0L581.4 424.3L581.8 423.5L582.3 423.7L582.7 425.3L583.1 423.1L583.6 422.0L584.0 422.5L584.5 419.1L584.9 420.2L585.3 419.9L585.8 420.2L586.2 419.1L586.6 417.8L587.1 416.9L587.5 416.2L587.9 415.1L588.4 414.9L588.8 414.5L589.3 414.0L589.7 414.0L590.0 413.0L590.1 414.1L590.6 410.0L591.0 407.7L591.4 405.1L591.9 401.7L592.3 398.3L592.7 396.1L593.0 395.0L593.2 395.9L593.6 393.8L594.0 390.8L594.5 392.0L594.9 391.5L595.4 390.2L595.8 388.7L596.2 388.1L596.7 389.0L597.1 388.3L597.5 386.8L598.0 385.6L598.0 385.0L598.4 386.1L598.8 388.2L599.3 388.5L599.7 390.8L600.2 389.6L600.6 391.4L601.0 392.4L601.5 392.8L601.9 394.3L602.3 394.7L602.8 396.8L603.0 397.0L603.2 396.4L603.6 396.2L604.1 395.9L604.5 395.2L604.9 396.9L605.4 396.4L605.8 396.8L606.3 395.6L606.7 396.8L607.1 396.0L607.6 397.5L608.0 397.6L608.4 397.3L608.9 397.1L609.3 396.2L609.7 397.6L610.0 397.0L610.2 398.1L610.6 395.8L611.1 394.5L611.5 394.0L611.9 392.6L612.4 392.0L612.8 390.5L613.2 389.0L613.7 390.2L614.1 387.1L614.5 387.3L615.0 384.7L615.0 385.0L615.4 386.7L615.8 386.2L616.3 386.5L616.7 386.7L617.2 387.2L617.6 386.8L618.0 388.2L618.5 387.7L618.9 387.7L619.3 388.3L619.8 389.7L620.2 389.2L620.6 388.3L621.1 388.9L621.5 390.3L622.0 389.2L622.4 391.1L622.8 390.7L623.3 390.8L623.7 391.6L624.1 392.2L624.6 390.8L624.7 392.0L625.0 392.6L625.4 396.1L625.9 398.4L626.3 401.5L626.7 403.8L627.2 404.7L627.6 405.7L628.0 410.0L628.1 409.9L628.5 415.1L628.9 419.4L629.4 421.2L629.8 426.8L630.0 428.0L630.2 427.1L630.7 426.3L631.1 424.2L631.5 424.8L632.0 424.7L632.4 423.7L632.9 422.0L633.3 421.2L633.7 420.9L634.2 420.6L634.6 417.9L635.0 418.0L635.5 418.0L635.9 416.0L636.3 415.4L636.8 414.4L637.2 413.2L637.6 411.6L638.0 412.0L638.1 412.5L638.5 408.6L639.0 407.8L639.4 404.9L639.8 400.3L640.3 396.7L640.7 396.9L641.1 392.1L641.6 393.5L641.7 390.0L642.0 389.1L642.4 389.3L642.9 390.3L643.3 389.7L643.8 389.6L644.2 391.5L644.6 391.9L645.1 390.9L645.5 389.0L645.9 390.3L646.0 390.0L646.4 392.6L646.8 394.8L647.2 398.6L647.7 400.2L648.1 401.5L648.5 403.9L649.0 408.6L649.4 412.3L649.9 412.5L650.3 414.8L650.7 420.0L651.0 420.0L651.2 421.0L651.6 423.4L652.0 426.7L652.5 427.8L652.9 429.9L653.3 430.2L653.8 435.3L654.2 436.2L654.7 440.6L655.1 441.7L655.5 442.1L656.0 447.1L656.4 447.9L656.8 450.0L656.8 451.2L657.3 448.6L657.7 445.3L658.1 442.1L658.6 441.2L659.0 438.8L659.4 435.4L659.9 433.7L660.3 432.0L660.8 429.1L661.2 426.8L661.6 425.0L662.1 422.3L662.5 420.0L662.5 418.3L662.9 418.0L663.4 416.8L663.8 414.9L664.2 411.1L664.7 410.5L665.1 410.8L665.3 407.0L665.6 407.5L666.0 407.4L666.4 407.9L666.9 409.9L667.3 409.7L667.7 410.3L668.2 412.3L668.6 413.2L669.0 414.0L669.5 414.7L669.9 413.8L670.3 414.6L670.8 417.2L671.2 417.4L671.7 417.8L671.9 418.0L672.1 417.1L672.5 418.1L673.0 420.9L673.4 418.9L673.8 421.8L674.3 421.9L674.7 422.1L675.1 422.4L675.6 423.5L676.0 424.7L676.5 426.6L676.9 425.4L677.3 425.2L677.8 427.7L678.2 428.2L678.6 427.7L679.1 428.0L679.4 429.0L679.5 430.1L679.9 440.5L680.4 450.9L680.8 460.4L681.2 471.5L681.3 471.0L681.7 464.7L682.1 456.8L682.6 450.4L683.0 443.4L683.4 435.1L683.9 427.3L684.0 425.0L684.3 429.7L684.7 433.3L685.2 439.7L685.6 445.1L686.0 449.7L686.5 456.6L686.9 458.9L687.4 466.7L687.8 469.6L688.0 473.0L688.2 471.2L688.7 465.2L689.1 460.9L689.5 456.8L690.0 454.5L690.4 448.7L690.8 443.2L691.3 439.7L691.7 436.5L692.1 430.6L692.6 428.4L692.6 427.0L693.0 424.6L693.5 421.5L693.9 419.5L694.3 417.5L694.8 414.0L695.2 412.2L695.6 408.0L696.1 406.0L696.5 402.5L696.9 399.3L697.0 400.0L697.4 399.9L697.8 395.1L698.3 392.0L698.7 390.6L699.1 390.0L699.6 386.0L700.0 384.5L700.0 384.0L700.4 381.9L700.9 379.7L701.3 377.5L701.7 374.9L702.2 372.7L702.6 368.7L703.0 366.3L703.5 365.7L703.8 363.0L703.9 363.9L704.4 363.9L704.8 367.4L705.2 364.9L705.7 366.9L706.1 368.3L706.5 368.1L707.0 368.1L707.0 370.0L707.4 378.0L707.8 388.2L708.3 396.7L708.7 406.2L709.2 414.5L709.4 420.0L709.6 420.0L710.0 423.0L710.5 423.3L710.9 426.1L711.3 427.6L711.8 428.6L712.2 429.6L712.3 430.0L712.6 430.8L713.1 428.7L713.5 428.6L713.9 425.6L714.4 426.1L714.8 426.3L715.3 426.6L715.7 426.1L716.0 425.0L716.1 423.6L716.6 421.7L717.0 418.7L717.4 417.4L717.9 415.1L718.3 411.5L718.7 410.4L719.2 407.0L719.6 404.4L719.8 404.0L720.1 403.7L720.5 405.0L720.9 407.9L721.4 407.8L721.8 408.2L722.2 409.3L722.7 409.8L723.1 409.6L723.5 413.7L724.0 414.9L724.4 413.4L724.5 414.0L724.8 415.0L725.3 419.5L725.7 421.1L726.2 423.2L726.6 426.3L727.0 426.8L727.5 431.4L727.9 432.5L728.3 434.4L728.8 436.5L729.0 439.0L729.2 438.0L729.6 440.3L730.1 441.2L730.5 442.2L731.0 443.3L731.4 446.2L731.8 442.8L732.3 446.2L732.7 448.2L733.1 446.7L733.6 447.2L734.0 448.6L734.4 448.4L734.9 449.5L735.3 451.3L735.7 452.0L736.2 453.3L736.6 454.0L737.1 454.7L737.5 456.5L737.7 456.0L737.9 455.2L738.4 458.0L738.8 457.5L739.2 457.3L739.7 457.5L740.1 460.7L740.5 459.7L741.0 460.1L741.4 460.1L741.5 461.0L741.9 467.1L742.3 470.8L742.7 477.0L743.2 481.8L743.6 489.4L744.0 494.8L744.3 498.0L744.5 494.5L744.9 483.6L745.3 471.6L745.8 459.2L746.0 456.0L746.2 456.7L746.6 454.7L747.1 452.3L747.5 451.7L748.0 449.7L748.4 449.7L748.8 446.7L749.3 445.7L749.7 446.0L750.1 443.7L750.6 440.3L751.0 441.0L751.4 438.6L751.9 437.2L751.9 437.0L752.3 438.4L752.8 437.8L753.2 439.8L753.6 440.7L754.1 440.2L754.5 441.8L754.9 442.8L755.4 442.4L755.8 444.1L756.2 445.3L756.7 444.4L757.1 446.1L757.5 446.4L758.0 446.5L758.4 447.9L758.9 450.1L759.3 450.3L759.7 450.6L760.2 451.1L760.4 452.0L760.6 451.9L761.0 449.7L761.5 449.3L761.9 447.8L762.3 446.9L762.8 443.7L763.2 441.6L763.7 440.7L764.1 439.5L764.5 438.2L765.0 436.6L765.4 436.2L765.8 433.5L766.3 434.6L766.7 430.8L767.1 429.5L767.6 425.6L768.0 426.0L768.0 427.2L768.4 425.0L768.9 425.2L769.3 424.0L769.8 423.0L770.2 422.2L770.6 422.3L771.1 422.5L771.5 420.7L771.9 418.0L772.4 419.5L772.8 417.3L773.2 416.0L773.7 416.0L774.1 417.8L774.6 415.7L775.0 416.0L775.4 416.3L775.5 415.0L775.9 412.3L776.3 410.3L776.7 407.6L777.2 403.6L777.6 400.3L778.0 396.9L778.5 395.0L778.9 392.5L779.2 390.0L779.3 391.8L779.8 390.8L780.2 393.6L780.7 393.8L781.1 396.2L781.5 398.2L782.0 398.5L782.4 402.9L782.8 402.1L783.3 403.6L783.7 405.7L784.1 406.2L784.6 408.6L785.0 410.0L785.0 410.8L785.5 414.5L785.9 420.4L786.3 424.9L786.8 429.9L787.2 434.1L787.6 440.0L787.7 440.0L788.1 438.0L788.5 435.2L788.9 434.5L789.4 433.4L789.8 431.0L790.2 429.0L790.7 427.4L791.1 427.4L791.6 423.7L792.0 422.3L792.4 421.4L792.9 421.0L793.3 416.6L793.7 415.2L794.2 413.2L794.6 411.8L795.0 410.0L795.0 410.6L795.5 403.7L795.9 398.5L796.4 392.5L796.8 385.6L797.2 377.9L797.7 373.9L798.0 369.0L798.1 364.8L798.5 353.6L799.0 338.0L799.4 324.2L799.5 321.0L799.8 329.3L800.3 341.3L800.7 354.1L801.0 360.0L801.1 361.0L801.6 366.3L802.0 369.8L802.5 375.7L802.9 377.2L803.3 382.6L803.8 388.8L804.2 391.1L804.6 396.2L805.1 399.7L805.5 403.7L805.9 408.3L806.4 414.2L806.8 417.2L807.3 421.4L807.5 424.0L807.7 426.4L808.1 428.5L808.6 431.6L809.0 434.5L809.4 437.0L809.4 439.0L809.9 435.1L810.3 434.6L810.7 432.2L811.2 432.5L811.6 430.4L812.0 432.3L812.5 430.5L812.9 429.0L813.4 429.2L813.8 427.6L814.2 427.5L814.7 425.7L815.1 422.7L815.5 424.8L816.0 422.6L816.0 423.0L816.4 423.3L816.8 424.4L817.3 425.0L817.7 428.5L818.2 427.2L818.6 428.4L819.0 427.8L819.5 430.5L819.9 431.0L820.3 431.7L820.8 432.4L821.2 434.5L821.6 435.0L822.1 436.5L822.5 437.3L822.9 436.7L823.4 438.8L823.6 439.0L823.8 438.4L824.3 440.0L824.7 440.4L825.1 440.8L825.6 442.2L826.0 442.1L826.4 444.3L826.9 444.3L827.3 445.7L827.7 443.0L828.0 445.0L828.2 445.5L828.6 449.9L829.1 452.9L829.5 458.8L829.9 460.0L830.0 460.0L830.4 471.6L830.8 486.4L831.2 500.5L831.7 515.9L832.1 529.5L832.3 536.0L832.5 520.4L833.0 489.9L833.4 460.8L833.8 430.0L834.0 420.0L834.3 417.3L834.7 411.5L835.2 407.5L835.6 404.7L836.0 400.0L836.0 400.2L836.5 384.2L836.9 369.3L837.3 355.1L837.8 341.3L838.2 324.5L838.6 310.2L839.0 300.0L839.1 305.2L839.5 332.1L840.0 359.3L840.4 388.4L840.5 395.0L840.8 394.7L841.3 397.6L841.7 396.2L842.1 395.0L842.6 396.0L843.0 396.0L843.0 397.4L843.4 382.3L843.9 371.3L844.3 361.0L844.7 345.4L845.0 340.0L845.2 345.2L845.6 356.5L846.1 367.7L846.5 380.6L846.9 394.3L847.0 395.0L847.4 381.0L847.8 358.8L848.2 341.1L848.7 320.1L849.0 305.0L849.1 309.7L849.5 329.0L850.0 347.7L850.4 366.9L850.9 385.7L851.0 392.0L851.3 374.0L851.7 345.6L852.2 321.3L852.5 300.0L852.6 293.8L853.0 274.6L853.5 253.0L853.9 232.4L854.0 228.0L854.3 230.2L854.8 232.9L855.2 235.8L855.6 235.9L856.0 240.0L856.1 241.2L856.5 243.6L857.0 249.2L857.4 251.4L857.8 254.8L858.3 259.8L858.7 263.0L859.1 266.9L859.6 271.3L860.0 273.4L860.4 278.8L860.9 281.0L861.3 284.7L861.8 289.3L862.2 291.6L862.6 296.1L863.1 300.0L863.5 303.0L863.9 307.2L864.4 310.8L864.8 313.9L865.2 318.6L865.7 322.7L866.1 327.3L866.5 330.2L867.0 333.2L867.4 336.3L867.7 339.0L867.9 344.0L868.3 359.4L868.7 371.5L869.0 380.0L869.2 392.3L869.6 428.5L870.0 463.6L870.5 499.0L870.9 534.7L871.0 543.0L871.3 544.9L871.8 545.0L872.2 549.4L872.7 552.3L873.1 555.1L873.5 554.9L874.0 557.7L874.0 560.0L874.4 573.3L874.8 589.0L875.3 602.6L875.7 619.6L876.1 633.3L876.5 647.0L876.6 637.2L877.0 579.0L877.4 521.3L877.9 461.3L878.3 404.3L878.5 380.0L878.8 376.0L879.2 367.8L879.6 359.3L880.1 350.5L880.5 343.1L880.9 336.0L881.4 328.3L881.8 319.3L882.2 313.3L882.6 306.0L882.7 303.7L883.1 284.3L883.6 268.1L884.0 250.3L884.4 231.7L884.9 214.8L885.3 197.6L885.6 185.0L885.7 191.5L886.2 211.5L886.6 230.8L887.0 250.0L887.0 253.4L887.5 273.0L887.9 296.9L888.3 321.5L888.8 343.3L888.8 344.0L889.2 349.7L889.7 354.4L890.1 360.4L890.5 365.9L891.0 370.7L891.4 374.8L891.8 379.7L892.3 385.2L892.5 388.0L892.7 388.6L893.1 389.6L893.6 386.9L894.0 387.7L894.5 388.4L894.9 387.1L895.3 385.8L895.8 386.4L896.2 388.2L896.6 388.5L897.1 386.4L897.5 386.0L897.9 384.6L898.4 385.6L898.8 385.9L899.2 384.5L899.7 385.8L900.0 385.0L900.1 384.5L900.6 384.6L901.0 384.4L901.4 385.1L901.9 385.7L902.3 384.7L902.7 383.2L903.2 384.5L903.6 383.1L904.0 384.7L904.5 385.0L904.9 383.7L905.4 383.0L905.8 383.3L906.2 383.7L906.7 383.7L907.1 384.6L907.5 384.1L908.0 382.7L908.4 382.9L908.8 383.0L909.3 383.5L909.7 382.5L910.0 383.0L910.1 382.0L910.6 383.9L911.0 384.2L911.5 384.2L911.9 385.2L912.3 383.4L912.8 384.6L913.2 384.1L913.6 385.3L914.1 385.9L914.5 387.4L914.9 386.1L915.4 385.8L915.8 388.9L916.3 387.3L916.7 388.9L917.1 389.8L917.6 389.5L918.0 389.7L918.4 388.6L918.9 390.6L919.3 390.7L919.7 391.7L920.2 391.0L920.6 391.9L921.0 393.1L921.5 391.1L921.9 392.6L922.4 392.4L922.8 394.2L923.2 391.8L923.7 394.5L924.1 394.6L924.5 394.5L925.0 395.6L925.0 395.0L925.4 394.9L925.8 397.0L926.3 397.2L926.7 399.2L927.2 400.3L927.6 401.9L928.0 402.7L928.5 405.9L928.9 407.3L929.3 408.8L929.8 409.3L930.0 410.0L930.2 411.0L930.6 410.3L931.1 411.1L931.5 410.6L931.9 411.6L932.4 410.9L932.8 412.2L933.3 411.0L933.7 413.7L934.1 412.1L934.6 413.5L935.0 415.1L935.4 414.1L935.9 415.5L936.0 415.0L936.3 430.5L936.7 454.7L937.2 477.0L937.6 499.9L938.0 520.0L938.1 518.7L938.5 496.2L938.9 474.9L939.4 451.5L939.8 431.4L940.0 420.0L940.2 421.1L940.7 419.3L941.1 419.6L941.5 418.9L942.0 419.1L942.4 419.5L942.8 420.0L943.3 419.1L943.7 418.7L944.2 420.9L944.6 420.0L945.0 420.0L945.0 419.9L945.5 419.4L945.9 420.1L946.3 419.0L946.8 419.2L947.2 417.5L947.6 418.3L948.1 417.2L948.5 416.9L949.0 417.6L949.4 415.5L949.8 416.8L950.3 416.2L950.7 417.1L951.1 413.6L951.6 414.3L952.0 415.0L952.4 415.4L952.9 414.1L953.3 414.6L953.7 413.0L954.2 414.5L954.6 412.1L955.0 413.0L955.1 412.5L955.5 413.2L955.9 412.9L956.4 414.6L956.8 413.1L957.2 414.0L957.7 413.5L958.1 414.7L958.5 412.5L959.0 413.2L959.4 415.2L959.9 414.4L960.3 415.2L960.7 414.9L961.2 414.7L961.6 415.9L962.0 414.2L962.5 414.8L962.9 413.8L963.3 414.9L963.8 414.6L964.2 413.3L964.6 417.6L965.1 415.3L965.5 416.5L966.0 415.9L966.4 414.3L966.8 416.8L967.3 415.8L967.7 417.9L968.0 416.0L968.1 416.4L968.6 416.6L969.0 416.4L969.4 417.4L969.9 417.1L970.3 416.1L970.8 415.5L971.2 416.6L971.6 418.4L972.1 418.3L972.5 416.9L972.9 417.0L973.4 419.1L973.8 418.7L974.2 418.3L974.7 418.4L975.1 420.6L975.5 419.3L976.0 420.1L976.4 420.3L976.9 419.2L977.3 420.7L977.7 420.9L978.2 418.9L978.6 420.1L979.0 418.9L979.5 421.8L979.9 419.8L980.0 421.0L980.3 421.8L980.8 420.8L981.2 420.9L981.7 421.2L982.1 419.2L982.5 417.1L983.0 417.5L983.4 417.7L983.8 416.6L984.3 419.0L984.7 417.2L985.1 416.0L985.6 417.1L986.0 416.2L986.4 414.9L986.9 415.9L987.3 413.7L987.8 413.4L988.2 414.5L988.6 413.9L989.1 413.7L989.5 411.9L989.9 412.3L990.0 412.0L990.4 392.7L990.8 370.5L991.2 345.8L991.7 322.5L992.1 300.8L992.6 277.5L993.0 253.0L993.0 253.0L993.4 274.2L993.9 296.8L994.3 315.6L994.7 337.3L995.2 359.7L995.6 381.8L996.0 400.0L996.0 400.2L996.5 410.6L996.9 421.7L997.3 430.5L997.8 439.5L998.2 449.3L998.7 460.2L999.1 470.1L999.5 480.4L1000.0 489.1L1000.4 498.9L1000.8 509.6L1001.3 518.0L1001.7 528.3L1002.1 538.2L1002.5 547.0L1002.6 544.5L1003.0 527.2L1003.5 510.9L1003.9 492.1L1004.3 477.1L1004.8 458.6L1005.2 441.4L1005.6 423.7L1006.0 410.0L1006.1 408.3L1006.5 400.7L1006.9 393.3L1007.4 384.5L1007.8 376.9L1008.2 368.7L1008.7 360.7L1009.1 351.5L1009.6 346.2L1010.0 335.4L1010.4 329.8L1010.5 327.0L1010.9 340.5L1011.3 356.6L1011.7 371.3L1012.0 380.0L1012.2 377.3L1012.6 369.9L1013.0 364.0L1013.5 358.6L1013.9 352.0L1014.4 345.0L1014.6 342.0L1014.8 347.2L1015.2 357.6L1015.7 370.6L1016.1 381.4L1016.5 392.0L1017.0 404.5L1017.0 405.0L1017.4 404.9L1017.8 405.1L1018.3 405.0L1018.7 408.9L1019.1 409.1L1019.6 408.6L1020.0 408.8L1020.5 408.4L1020.9 409.1L1021.3 411.6L1021.8 410.3L1022.2 412.0L1022.6 413.1L1023.1 414.2L1023.5 412.8L1023.9 413.5L1024.4 413.6L1024.8 413.7L1025.0 415.0L1025.3 416.0L1025.7 417.1L1026.1 418.1L1026.6 417.5L1027.0 419.6L1027.4 420.4L1027.9 420.5L1028.3 420.0L1028.7 423.2L1029.2 423.2L1029.6 424.3L1030.0 425.8L1030.5 425.5L1030.9 427.0L1031.0 428.0L1031.4 427.9L1031.8 426.7L1032.2 427.8L1032.7 427.9L1033.1 429.9L1033.5 429.5L1034.0 430.9L1034.4 429.9L1034.8 431.1L1035.3 430.8L1035.7 431.4L1036.2 431.4L1036.6 431.6L1037.0 433.0L1037.5 431.6L1037.5 432.0L1037.9 431.3L1038.3 430.7L1038.8 428.8L1039.2 427.0L1039.6 426.4L1040.1 425.4L1040.5 422.9L1040.9 422.9L1041.4 422.6L1041.8 420.7L1042.3 418.0L1042.7 417.3L1043.1 416.6L1043.6 415.5L1043.8 415.0L1044.0 416.0L1044.4 415.4L1044.9 415.1L1045.3 415.8L1045.7 414.4L1046.2 413.7L1046.6 414.2L1047.1 416.5L1047.5 415.3L1047.9 415.3L1048.4 415.9L1048.8 416.7L1049.2 413.8L1049.7 414.6L1050.1 416.1L1050.5 415.0L1051.0 415.7L1051.4 414.2L1051.8 414.8L1052.3 414.2L1052.7 414.5L1053.2 416.6L1053.6 415.0L1054.0 414.8L1054.5 414.8L1054.9 415.4L1055.0 415.0L1055.3 415.2L1055.8 415.6L1056.2 414.1L1056.6 416.4L1057.1 415.3L1057.5 413.4L1058.0 413.7L1058.4 414.8L1058.8 414.1L1059.3 413.5L1059.7 413.3L1060.1 413.7L1060.6 412.5L1061.0 412.5L1061.4 412.7L1061.9 412.8L1062.3 412.5L1062.7 413.1L1063.2 413.5L1063.6 412.0L1064.1 412.8L1064.5 412.4L1064.9 411.2L1065.0 412.0L1065.4 411.6L1065.8 409.2L1066.2 408.8L1066.7 408.4L1067.1 409.3L1067.5 408.0L1068.0 409.3L1068.4 404.5L1068.9 404.8L1069.3 403.5L1069.7 405.0L1070.2 405.1L1070.6 405.2L1071.0 402.5L1071.5 402.1L1071.9 400.9L1072.3 400.5L1072.8 400.6L1073.2 399.6L1073.6 399.9L1074.1 398.3L1074.5 398.2L1075.0 395.9L1075.4 396.1L1075.6 396.0L1075.8 395.6L1076.3 395.2L1076.7 395.0L1077.1 396.4L1077.6 396.2L1078.0 396.1L1078.4 394.2L1078.9 395.3L1079.3 395.1L1079.8 394.8L1080.0 395.0L1080.2 399.1L1080.6 398.4L1081.1 400.0L1081.5 401.6L1081.9 404.1L1082.4 406.3L1082.8 409.8L1083.2 409.1L1083.7 410.9L1084.1 413.9L1084.5 414.1L1085.0 418.4L1085.0 418.0L1085.4 418.8L1085.9 419.4L1086.3 418.9L1086.7 418.7L1087.2 418.7L1087.6 417.2L1088.0 420.0L1088.0 418.1L1088.5 419.6L1088.9 421.9L1089.3 421.2L1089.8 422.6L1090.2 424.3L1090.7 424.9L1091.1 425.6L1091.5 424.4L1092.0 427.9L1092.4 425.9L1092.8 428.4L1093.3 427.9L1093.5 429.0L1093.7 429.9L1094.1 429.1L1094.6 429.0L1095.0 429.8L1095.4 429.5L1095.9 430.9L1096.3 429.7L1096.8 429.5L1097.2 430.4L1097.6 428.0L1097.8 430.0L1098.1 435.3L1098.5 445.0L1098.9 453.8L1099.4 463.8L1099.8 473.3L1100.2 482.8L1100.7 493.1L1101.1 501.9L1101.5 510.0L1101.6 507.4L1102.0 490.0L1102.4 469.8L1102.9 450.4L1103.3 430.2L1103.7 410.6L1104.0 400.0L1104.2 397.8L1104.6 387.0L1105.0 378.6L1105.5 370.0L1105.9 360.2L1106.3 350.2L1106.6 346.0L1106.8 349.3L1107.2 353.3L1107.7 357.0L1108.1 364.0L1108.5 369.4L1109.0 373.5L1109.4 379.3L1109.8 383.0L1109.8 382.6L1110.3 384.0L1110.7 386.2L1111.1 387.8L1111.6 389.2L1112.0 388.9L1112.5 391.8L1112.9 393.2L1113.3 394.4L1113.8 395.5L1114.0 396.0L1114.2 395.4L1114.6 395.5L1115.1 396.4L1115.5 394.3L1115.9 394.6L1116.4 391.6L1116.8 391.3L1117.2 392.9L1117.7 391.1L1118.1 390.0L1118.6 390.5L1119.0 389.5L1119.0 390.0L1119.4 374.6L1119.9 357.6L1120.3 339.6L1120.7 323.1L1121.0 312.0L1121.2 317.2L1121.6 329.2L1122.0 344.0L1122.5 355.7L1122.9 369.1L1123.4 380.7L1123.8 393.9L1124.0 400.0L1124.2 400.4L1124.7 401.7L1125.1 405.6L1125.5 406.4L1126.0 407.5L1126.4 407.6L1126.8 409.5L1127.0 410.0L1127.3 411.2L1127.7 409.0L1128.1 411.0L1128.6 411.4L1129.0 412.2L1129.5 413.6L1129.9 411.4L1130.3 413.2L1130.8 411.9L1131.2 412.0L1131.6 414.0L1131.7 414.0L1132.1 415.4L1132.5 412.9L1132.9 414.9L1133.4 414.8L1133.8 414.5L1134.3 416.0L1134.7 416.5L1135.1 415.2L1135.6 415.5L1136.0 414.7L1136.4 415.3L1136.9 417.1L1137.3 415.0L1137.7 415.8L1138.2 415.3L1138.6 416.0L1139.0 416.0L1139.0 415.7L1139.5 414.8L1139.9 413.9L1140.4 416.5L1140.8 416.0L1141.2 415.1L1141.7 414.9L1142.1 416.2L1142.5 415.9L1143.0 415.6L1143.4 414.6L1143.8 416.5L1144.3 414.5L1144.7 415.3L1145.0 415.0L1145.2 419.3L1145.6 432.8L1146.0 448.1L1146.5 463.7L1146.6 468.0L1146.9 461.9L1147.3 454.5L1147.8 444.9L1148.2 436.2L1148.6 427.0L1149.1 418.0L1149.5 409.4L1149.9 399.9L1150.3 394.0L1150.4 394.2L1150.8 394.2L1151.3 396.2L1151.7 396.7L1152.1 398.7L1152.6 399.1L1153.0 399.5L1153.4 400.6L1153.9 399.4L1154.3 402.4L1154.7 402.3L1155.2 404.4L1155.6 405.5L1155.7 405.0L1156.1 403.5L1156.5 405.9L1156.9 407.0L1157.4 405.5L1157.8 405.5L1158.2 407.8L1158.7 407.4L1159.1 407.1L1159.5 408.0L1160.0 406.0L1160.4 408.1L1160.8 406.5L1161.3 407.4L1161.7 409.5L1162.2 408.2L1162.6 411.3L1163.0 409.3L1163.5 408.6L1163.9 410.1L1164.3 409.1L1164.8 411.6L1165.2 410.0L1165.6 410.6L1166.1 410.1L1166.5 411.2L1166.7 411.0L1167.0 411.5L1167.4 412.9L1167.8 414.6L1168.3 413.3L1168.7 415.6L1169.1 416.8L1169.6 419.0L1170.0 420.2L1170.4 420.7L1170.9 421.8L1171.3 421.4L1171.7 425.1L1172.0 425.0L1172.2 427.5L1172.6 427.6L1173.1 428.9L1173.5 431.4L1173.9 432.1L1174.4 435.7L1174.8 438.6L1175.2 440.9L1175.4 440.0L1175.7 440.5L1176.1 440.5L1176.5 442.5L1177.0 442.4L1177.4 444.3L1177.6 444.0L1177.9 443.5L1178.3 441.1L1178.7 439.9L1179.2 439.0L1179.6 434.7L1180.0 435.3L1180.5 432.9L1180.9 430.5L1181.3 428.9L1181.8 426.7L1182.0 427.0L1182.2 426.5L1182.6 424.2L1183.1 421.6L1183.5 418.5L1184.0 417.9L1184.4 415.7L1184.8 412.4L1185.3 413.4L1185.7 410.9L1186.1 409.1L1186.3 408.0L1186.6 408.1L1187.0 405.6L1187.4 406.0L1187.9 403.2L1188.3 403.1L1188.8 402.8L1189.2 401.9L1189.6 402.0L1189.6 403.8L1190.1 403.5L1190.5 403.2L1190.9 405.5L1191.4 406.0L1191.8 407.3L1192.2 407.2L1192.7 409.0L1193.1 408.8L1193.5 408.1L1194.0 410.0L1194.4 412.6L1194.9 411.9L1195.0 412.0L1195.3 411.1L1195.7 410.4L1196.2 407.2L1196.6 407.7L1197.0 405.1L1197.5 405.4L1197.9 404.3L1198.3 401.8L1198.8 399.8L1199.2 400.0L1199.5 399.0L1199.7 399.4L1200.1 401.2L1200.5 401.8L1201.0 401.8L1201.4 402.3L1201.8 403.2L1202.3 403.8L1202.7 405.7L1203.1 406.1L1203.6 407.5L1204.0 406.5L1204.4 407.5L1204.9 408.9L1205.3 409.9L1205.8 411.1L1206.0 410.0L1206.2 409.7L1206.6 410.1L1207.1 409.7L1207.5 410.0L1207.9 406.8L1208.4 406.3L1208.8 408.3L1209.2 406.5L1209.7 406.8L1210.1 406.4L1210.6 406.4L1211.0 405.4L1211.4 406.0L1211.9 404.1L1212.0 405.0L1212.3 404.8L1212.7 400.6L1213.2 399.0L1213.6 398.3L1214.0 395.3L1214.5 392.9L1214.9 393.7L1215.3 389.4L1215.8 388.8L1216.2 386.2L1216.7 383.7L1217.1 382.2L1217.5 378.7L1218.0 376.4L1218.0 377.0L1218.4 376.2L1218.8 377.2L1219.3 375.5L1219.7 375.0L1220.1 374.8L1220.6 375.4L1221.0 372.4L1221.5 372.3L1221.9 372.8L1222.3 374.2L1222.4 372.0L1222.8 371.3L1223.2 371.0L1223.6 371.5L1224.1 372.1L1224.5 369.0L1224.9 369.8L1225.4 368.7L1225.6 369.0L1225.8 369.8L1226.2 368.5L1226.7 371.1L1227.1 366.9L1227.6 367.5L1228.0 367.7L1228.4 368.1L1228.9 367.7L1229.3 366.5L1229.7 366.0L1230.2 365.9L1230.6 365.3L1231.0 366.0L1231.0 366.2L1231.5 367.9L1231.9 369.4L1232.4 371.6L1232.8 373.2L1233.2 373.1L1233.7 375.6L1234.1 377.0L1234.5 379.3L1235.0 382.4L1235.4 381.5L1235.5 383.0L1235.8 388.2L1236.3 389.7L1236.7 395.3L1237.1 397.4L1237.6 403.1L1238.0 406.5L1238.5 411.8L1238.8 414.0L1238.9 416.0L1239.3 419.1L1239.8 421.1L1240.2 423.6L1240.6 427.8L1241.0 431.0L1241.1 430.9L1241.5 432.1L1241.9 435.2L1242.4 437.0L1242.8 438.0L1243.3 440.3L1243.7 443.1L1244.1 444.1L1244.2 444.0L1244.6 444.4L1245.0 442.6L1245.4 442.6L1245.9 440.6L1246.3 440.0L1246.7 441.0L1247.2 440.4L1247.6 439.3L1248.0 438.1L1248.5 437.9L1248.6 438.0L1248.9 436.4L1249.4 436.3L1249.8 436.3L1250.2 436.7L1250.7 435.4L1251.1 435.2L1251.5 434.2L1252.0 433.5L1252.4 433.9L1252.8 433.5L1253.3 430.8L1253.7 431.1L1254.2 432.0L1254.6 430.3L1255.0 429.4L1255.5 431.9L1255.9 429.8L1256.2 429.0L1256.3 429.0L1256.8 431.2L1257.2 432.4L1257.6 433.2L1258.1 433.2L1258.5 435.3L1258.9 436.5L1259.4 437.5L1259.8 439.2L1260.3 440.0L1260.6 441.0L1260.7 441.1L1261.1 441.2L1261.6 441.4L1262.0 438.9L1262.4 441.4L1262.9 439.2L1263.3 439.5L1263.7 439.6L1264.2 439.8L1264.6 439.0L1265.1 438.0L1265.5 439.2L1265.9 437.6L1266.0 438.0L1266.4 437.9L1266.8 437.3L1267.2 435.4L1267.7 437.0L1268.1 433.5L1268.5 434.8L1269.0 430.5L1269.4 430.9L1269.8 431.4L1270.3 429.3L1270.7 429.3L1271.2 427.6L1271.6 427.9L1272.0 427.3L1272.5 424.9L1272.6 425.0L1272.9 424.1L1273.3 422.5L1273.8 422.0L1274.2 420.3L1274.6 422.0L1275.1 420.2L1275.5 417.5L1276.0 416.9L1276.4 416.1L1276.8 414.4L1277.0 414.0L1277.3 413.0L1277.7 413.4L1278.1 414.4L1278.6 415.0L1279.0 414.2L1279.4 414.2L1279.9 414.9L1280.3 415.9L1280.7 414.1L1281.2 415.8L1281.4 415.0L1281.6 415.6L1282.1 413.8L1282.5 411.1L1282.9 409.6L1283.4 407.5L1283.8 407.7L1284.2 403.8L1284.7 404.9L1285.1 403.0L1285.5 401.9L1286.0 400.3L1286.0 400.0L1286.4 387.9L1286.9 374.1L1287.3 361.1L1287.5 353.0L1287.7 362.3L1288.2 375.5L1288.6 392.2L1289.0 405.0L1289.0 406.2L1289.5 407.5L1289.9 408.0L1290.3 413.2L1290.8 412.3L1291.2 414.0L1291.6 417.4L1292.1 419.5L1292.3 420.0L1292.5 420.1L1293.0 418.2L1293.4 418.9L1293.8 418.0L1294.3 417.3L1294.7 416.4L1295.1 417.3L1295.6 415.2L1296.0 416.1L1296.4 416.4L1296.9 413.1L1297.3 414.4L1297.8 413.6L1298.2 413.5L1298.6 413.6L1298.9 413.0L1299.1 412.9L1299.5 412.3L1299.9 411.3L1300.4 413.2L1300.8 412.5L1301.2 413.1L1301.7 410.7L1302.1 412.5L1302.5 411.0L1303.0 412.3L1303.4 413.3L1303.9 409.1L1304.3 412.2L1304.7 411.6L1305.2 411.2L1305.4 411.0L1305.6 409.0L1306.0 410.4L1306.5 408.4L1306.9 408.1L1307.3 406.7L1307.8 406.7L1308.2 406.7L1308.7 404.8L1309.1 404.3L1309.5 404.7L1309.8 403.0L1310.0 401.5L1310.4 404.1L1310.8 405.6L1311.3 404.8L1311.7 404.3L1312.1 405.7L1312.6 405.3L1313.0 405.1L1313.4 404.6L1313.9 406.4L1314.3 406.0L1314.8 406.7L1315.0 407.0L1315.2 406.8L1315.6 406.0L1316.1 407.1L1316.5 406.9L1316.9 408.7L1317.4 407.2L1317.8 406.4L1318.2 407.3L1318.7 407.2L1319.1 408.5L1319.6 406.3L1320.0 408.1L1320.4 408.0L1320.7 408.0L1320.9 407.9L1321.3 407.9L1321.7 405.1L1322.2 407.1L1322.6 406.0L1323.0 404.2L1323.5 404.8L1323.9 403.3L1324.3 402.0L1324.8 401.7L1325.2 404.9L1325.7 400.9L1326.1 400.1L1326.5 399.9L1327.0 399.2L1327.3 399.0L1327.4 398.7L1327.8 400.2L1328.3 401.7L1328.7 401.8L1329.1 402.3L1329.6 402.2L1330.0 403.4L1330.5 403.2L1330.9 404.6L1331.0 405.0L1331.3 408.2L1331.8 412.6L1332.2 417.0L1332.5 420.0L1332.6 445.2L1333.1 528.5L1333.5 611.0L1333.5 611.0L1333.9 611.0L1334.4 611.0L1334.8 611.0L1335.2 611.0L1335.5 611.0L1335.7 563.4L1336.1 450.7L1336.2 430.0L1336.6 537.4L1336.8 611.0L1337.0 652.0L1337.4 745.2L1337.6 782.0L1337.9 736.9L1338.3 662.3L1338.6 611.0L1338.7 611.0L1339.2 611.0L1339.6 611.0L1340.0 611.0L1340.5 611.0L1340.9 611.0L1341.4 611.0L1341.8 611.0L1342.2 611.0L1342.5 611.0L1342.7 612.0L1343.1 614.6L1343.5 617.0L1343.5 615.4L1344.0 593.0L1344.4 570.6L1344.8 548.2L1345.0 540.0L1345.3 539.2L1345.7 538.0L1346.1 536.8L1346.6 535.6L1347.0 534.3L1347.5 533.1L1347.5 533.0L1347.9 533.0L1348.3 533.0L1348.8 533.0L1349.2 533.0L1349.6 533.0L1350.1 533.0L1350.5 533.0L1350.9 533.0L1351.4 533.0L1351.8 533.0L1352.3 533.0L1352.7 533.0L1353.1 533.0L1353.6 533.0L1354.0 533.0L1354.4 533.0L1354.9 533.0L1355.3 533.0L1355.7 533.0L1356.2 533.0L1356.6 533.0L1357.0 533.0L1357.5 533.0L1357.9 533.0L1358.4 533.0L1358.8 533.0L1359.0 533.0L1359.2 484.4L1359.6 405.0L1359.7 405.0L1360.1 405.0L1360.5 405.0L1361.0 405.0L1361.4 405.0L1361.8 405.0L1362.3 405.0L1362.7 405.0L1363.2 405.0L1363.6 405.0L1364.0 405.0L1364.5 405.0L1364.9 405.0L1365.3 405.0L1365.8 405.0L1366.2 405.0L1366.6 405.0L1367.1 405.0L1367.5 405.0L1367.9 405.0L1368.4 405.0L1368.8 405.0L1369.3 405.0L1369.7 405.0L1370.1 405.0L1370.6 405.0L1371.0 405.0L1371.4 405.0L1371.9 405.0L1372.3 405.0L1372.7 405.0L1373.2 405.0L1373.6 405.0L1374.1 405.0L1374.5 405.0L1374.9 405.0L1375.4 405.0L1375.8 405.0L1376.2 405.0L1376.7 405.0L1377.1 405.0L1377.5 405.0L1378.0 405.0L1378.4 405.0L1378.8 405.0L1379.3 405.0L1379.7 405.0L1380.2 405.0L1380.6 405.0L1381.0 405.0L1381.5 405.0L1381.9 405.0L1382.3 405.0L1382.8 405.0L1383.2 405.0L1383.6 405.0L1384.1 405.0L1384.5 405.0L1385.0 405.0L1385.4 405.0L1385.8 405.0L1386.3 405.0L1386.7 405.0L1387.1 405.0L1387.6 405.0L1388.0 405.0L1388.4 405.0L1388.9 405.0L1389.3 405.0L1389.7 405.0L1390.2 405.0L1390.6 405.0L1391.1 405.0L1391.5 405.0L1391.9 405.0L1392.4 405.0L1392.8 405.0L1393.2 405.0L1393.7 405.0L1394.1 405.0L1394.5 405.0L1395.0 405.0L1395.4 405.0L1395.9 405.0L1396.3 405.0L1396.7 405.0L1397.2 405.0L1397.6 405.0L1398.0 405.0L1398.5 405.0L1398.9 405.0L1399.3 405.0L1399.8 405.0L1400.2 405.0L1400.6 405.0L1401.1 405.0L1401.5 405.0L1402.0 405.0L1402.4 405.0L1402.8 405.0L1403.3 405.0L1403.7 405.0L1404.1 405.0L1404.6 405.0L1405.0 405.0L1405.4 405.0L1405.9 405.0L1406.3 405.0L1406.8 405.0L1407.2 405.0L1407.6 405.0L1408.1 405.0L1408.5 405.0L1408.9 405.0L1409.4 405.0L1409.8 405.0L1410.2 405.0L1410.7 405.0L1411.1 405.0L1411.5 405.0L1412.0 405.0L1412.4 405.0L1412.9 405.0L1413.3 405.0L1413.7 405.0L1414.2 405.0L1414.6 405.0L1415.0 405.0L1415.5 405.0L1415.9 405.0L1416.3 405.0L1416.8 405.0L1417.2 405.0L1417.7 405.0L1418.1 405.0L1418.5 405.0L1419.0 405.0L1419.4 405.0L1419.8 405.0L1420.3 405.0L1420.7 405.0L1421.1 405.0L1421.6 405.0L1422.0 405.0L1422.4 405.0L1422.9 405.0L1423.3 405.0L1423.8 405.0L1424.2 405.0L1424.6 405.0L1425.0 405.0" stroke="#0000ff" stroke-width="1.0"/></g><rect x="68" y="406.2" width="1569" height="1.6" fill="#000"/><rect x="66" y="256.5" width="1573.5" height="5" fill="#e81c1c"/><rect x="66" y="556.3" width="1581.5" height="5" fill="#e81c1c"/><rect x="67.5" y="104.5" width="1570" height="804.8" fill="none" stroke="#000" stroke-width="1.6"/><rect x="62" y="103.7" width="13" height="1.6" fill="#e0e0e0"/><rect x="65" y="123.8" width="8" height="1.6" fill="#e0e0e0"/><rect x="65" y="143.9" width="8" height="1.6" fill="#e0e0e0"/><rect x="65" y="164.1" width="8" height="1.6" fill="#e0e0e0"/><rect x="65" y="184.2" width="8" height="1.6" fill="#e0e0e0"/><rect x="62" y="204.3" width="13" height="1.6" fill="#e0e0e0"/><rect x="65" y="224.4" width="8" height="1.6" fill="#e0e0e0"/><rect x="65" y="244.5" width="8" height="1.6" fill="#e0e0e0"/><rect x="65" y="264.7" width="8" height="1.6" fill="#e0e0e0"/><rect x="65" y="284.8" width="8" height="1.6" fill="#e0e0e0"/><rect x="62" y="304.9" width="13" height="1.6" fill="#e0e0e0"/><rect x="65" y="325.0" width="8" height="1.6" fill="#e0e0e0"/><rect x="65" y="345.1" width="8" height="1.6" fill="#e0e0e0"/><rect x="65" y="365.3" width="8" height="1.6" fill="#e0e0e0"/><rect x="65" y="385.4" width="8" height="1.6" fill="#e0e0e0"/><rect x="62" y="405.5" width="13" height="1.6" fill="#e0e0e0"/><rect x="65" y="425.6" width="8" height="1.6" fill="#e0e0e0"/><rect x="65" y="445.7" width="8" height="1.6" fill="#e0e0e0"/><rect x="65" y="465.9" width="8" height="1.6" fill="#e0e0e0"/><rect x="65" y="486.0" width="8" height="1.6" fill="#e0e0e0"/><rect x="62" y="506.1" width="13" height="1.6" fill="#e0e0e0"/><rect x="65" y="526.2" width="8" height="1.6" fill="#e0e0e0"/><rect x="65" y="546.3" width="8" height="1.6" fill="#e0e0e0"/><rect x="65" y="566.5" width="8" height="1.6" fill="#e0e0e0"/><rect x="65" y="586.6" width="8" height="1.6" fill="#e0e0e0"/><rect x="62" y="606.7" width="13" height="1.6" fill="#e0e0e0"/><rect x="65" y="626.8" width="8" height="1.6" fill="#e0e0e0"/><rect x="65" y="646.9" width="8" height="1.6" fill="#e0e0e0"/><rect x="65" y="667.1" width="8" height="1.6" fill="#e0e0e0"/><rect x="65" y="687.2" width="8" height="1.6" fill="#e0e0e0"/><rect x="62" y="707.3" width="13" height="1.6" fill="#e0e0e0"/><rect x="65" y="727.4" width="8" height="1.6" fill="#e0e0e0"/><rect x="65" y="747.5" width="8" height="1.6" fill="#e0e0e0"/><rect x="65" y="767.7" width="8" height="1.6" fill="#e0e0e0"/><rect x="65" y="787.8" width="8" height="1.6" fill="#e0e0e0"/><rect x="62" y="807.9" width="13" height="1.6" fill="#e0e0e0"/><rect x="65" y="828.0" width="8" height="1.6" fill="#e0e0e0"/><rect x="65" y="848.1" width="8" height="1.6" fill="#e0e0e0"/><rect x="65" y="868.3" width="8" height="1.6" fill="#e0e0e0"/><rect x="65" y="888.4" width="8" height="1.6" fill="#e0e0e0"/><rect x="62" y="908.5" width="13" height="1.6" fill="#e0e0e0"/><rect x="67.3" y="104.5" width="1.7" height="805.8" fill="#0a0a0a"/><rect x="68" y="908.5" width="1569" height="1.6" fill="#000"/><text x="51.5" y="109.1" font-size="17.5" fill="#ff1a1a" text-anchor="end" font-weight="400">0.3</text><text x="51.5" y="209.7" font-size="17.5" fill="#ff1a1a" text-anchor="end" font-weight="400">0.2</text><text x="51.5" y="310.3" font-size="17.5" fill="#ff1a1a" text-anchor="end" font-weight="400">0.1</text><text x="51.5" y="410.9" font-size="17.5" fill="#ff1a1a" text-anchor="end" font-weight="400">0.0</text><text x="51.5" y="511.5" font-size="17.5" fill="#ff1a1a" text-anchor="end" font-weight="400">-0.1</text><text x="51.5" y="612.1" font-size="17.5" fill="#ff1a1a" text-anchor="end" font-weight="400">-0.2</text><text x="51.5" y="712.7" font-size="17.5" fill="#ff1a1a" text-anchor="end" font-weight="400">-0.3</text><text x="51.5" y="813.3" font-size="17.5" fill="#ff1a1a" text-anchor="end" font-weight="400">-0.4</text><text x="51.5" y="913.9" font-size="17.5" fill="#ff1a1a" text-anchor="end" font-weight="400">-0.5</text><rect x="67.3" y="900" width="1.6" height="16" fill="#e0e0e0"/><rect x="132.7" y="905" width="1.6" height="8" fill="#e0e0e0"/><rect x="198.1" y="905" width="1.6" height="8" fill="#e0e0e0"/><rect x="263.5" y="905" width="1.6" height="8" fill="#e0e0e0"/><rect x="328.9" y="900" width="1.6" height="16" fill="#e0e0e0"/><rect x="394.3" y="905" width="1.6" height="8" fill="#e0e0e0"/><rect x="459.7" y="905" width="1.6" height="8" fill="#e0e0e0"/><rect x="525.1" y="905" width="1.6" height="8" fill="#e0e0e0"/><rect x="590.5" y="900" width="1.6" height="16" fill="#e0e0e0"/><rect x="655.9" y="905" width="1.6" height="8" fill="#e0e0e0"/><rect x="721.2" y="905" width="1.6" height="8" fill="#e0e0e0"/><rect x="786.6" y="905" width="1.6" height="8" fill="#e0e0e0"/><rect x="852.0" y="900" width="1.6" height="16" fill="#e0e0e0"/><rect x="917.4" y="905" width="1.6" height="8" fill="#e0e0e0"/><rect x="982.8" y="905" width="1.6" height="8" fill="#e0e0e0"/><rect x="1048.2" y="905" width="1.6" height="8" fill="#e0e0e0"/><rect x="1113.6" y="900" width="1.6" height="16" fill="#e0e0e0"/><rect x="1179.0" y="905" width="1.6" height="8" fill="#e0e0e0"/><rect x="1244.4" y="905" width="1.6" height="8" fill="#e0e0e0"/><rect x="1309.8" y="905" width="1.6" height="8" fill="#e0e0e0"/><rect x="1375.2" y="900" width="1.6" height="16" fill="#e0e0e0"/><rect x="1440.6" y="905" width="1.6" height="8" fill="#e0e0e0"/><rect x="1506.0" y="905" width="1.6" height="8" fill="#e0e0e0"/><rect x="1571.4" y="905" width="1.6" height="8" fill="#e0e0e0"/><rect x="1636.8" y="900" width="1.6" height="16" fill="#e0e0e0"/><rect x="68" y="908.5" width="1569" height="1.6" fill="#000"/><rect x="67.3" y="104.5" width="1.7" height="805.5999999999999" fill="#0a0a0a"/><text x="68.1" y="937.5" font-size="17.5" fill="#e8e8e8" text-anchor="middle" font-weight="400" textLength="103" lengthAdjust="spacingAndGlyphs">12:08:00.000</text><text x="329.7" y="937.5" font-size="17.5" fill="#e8e8e8" text-anchor="middle" font-weight="400" textLength="103" lengthAdjust="spacingAndGlyphs">12:09:00.000</text><text x="591.3" y="937.5" font-size="17.5" fill="#e8e8e8" text-anchor="middle" font-weight="400" textLength="103" lengthAdjust="spacingAndGlyphs">12:10:00.000</text><text x="852.8" y="937.5" font-size="17.5" fill="#e8e8e8" text-anchor="middle" font-weight="400" textLength="103" lengthAdjust="spacingAndGlyphs">12:11:00.000</text><text x="1114.4" y="937.5" font-size="17.5" fill="#e8e8e8" text-anchor="middle" font-weight="400" textLength="103" lengthAdjust="spacingAndGlyphs">12:12:00.000</text><text x="1376.0" y="937.5" font-size="17.5" fill="#e8e8e8" text-anchor="middle" font-weight="400" textLength="103" lengthAdjust="spacingAndGlyphs">12:13:00.000</text><text x="1637.6" y="937.5" font-size="17.5" fill="#e8e8e8" text-anchor="middle" font-weight="400" textLength="103" lengthAdjust="spacingAndGlyphs">12:14:00.000</text><text x="852" y="966.3" font-size="17.5" fill="#ffffff" text-anchor="middle" font-weight="700" textLength="86.6" lengthAdjust="spacingAndGlyphs">Time (sec)</text><rect x="68.3" y="78.5" width="1153.2" height="17" fill="#808080" stroke="#111" stroke-width="1"/><rect x="73" y="86.2" width="36" height="1.8" fill="#e02020"/><text x="119" y="92.3" font-size="14.9" fill="#e6e6e6" text-anchor="start" font-weight="400">RATE.ROut  (Min: -0.07 Max: 0.07 Mean: 0)</text><rect x="457" y="86.2" width="36" height="1.8" fill="#108010"/><text x="504" y="92.3" font-size="14.9" fill="#e6e6e6" text-anchor="start" font-weight="400">RATE.POut  (Min: -0.1 Max: 0.08 Mean: 0)</text><rect x="841" y="86.2" width="36" height="1.8" fill="#2020e0"/><text x="887.5" y="92.3" font-size="14.9" fill="#e6e6e6" text-anchor="start" font-weight="400">RATE.YOut  (Min: -0.37 Max: 0.08 Mean: -0.01)</text><rect x="69" y="103.3" width="1568" height="18.2" fill="#111"/><rect x="69" y="104.5" width="322" height="16" fill="#ff8080"/><rect x="392" y="104.5" width="9" height="16" fill="#ff8080"/><rect x="652.5" y="104.5" width="254.5" height="16" fill="#8080ff"/><rect x="908" y="104.5" width="272" height="16" fill="#ffff80"/><rect x="1181" y="104.5" width="24" height="16" fill="#8080ff"/><rect x="1206" y="104.5" width="127" height="16" fill="#ffff80"/><rect x="1634" y="104.5" width="3" height="16" fill="#ffff80"/><rect x="329.80" y="106" width="1.3" height="6" fill="#f0f0f0"/><rect x="591.05" y="106" width="1.3" height="6" fill="#f0f0f0"/><rect x="852.25" y="106" width="1.3" height="6" fill="#f0f0f0"/><rect x="1113.35" y="106" width="1.3" height="6" fill="#f0f0f0"/><rect x="1374.55" y="106" width="1.3" height="6" fill="#f0f0f0"/><svg x="400.3" y="85.8" width="279.7" height="18.400000000000006" overflow="hidden"><rect x="0.5" y="0.5" width="278.7" height="17.400000000000006" fill="#ff0000" stroke="#000" stroke-width="1.2"/><text x="7" y="13.8" font-size="14.9" fill="#000" text-anchor="start" font-weight="400">EV: MOTORS<tspan dy="-1.8">_</tspan><tspan dy="1.8">INTERLOCK</tspan><tspan dy="-1.8">_</tspan><tspan dy="1.8">ENABLED</tspan></text></svg><svg x="1065" y="85.8" width="167.5" height="18.400000000000006" overflow="hidden"><rect x="0.5" y="0.5" width="166.5" height="17.400000000000006" fill="#ff0000" stroke="#000" stroke-width="1.2"/><text x="6" y="13.8" font-size="14.9" fill="#000" text-anchor="start" font-weight="400">EV: EKF<tspan dy="-1.8">_</tspan><tspan dy="1.8">YAW</tspan><tspan dy="-1.8">_</tspan><tspan dy="1.8">RESET</tspan></text></svg><svg x="1335.4" y="85.8" width="169.5999999999999" height="18.400000000000006" overflow="hidden"><rect x="0.5" y="0.5" width="168.5999999999999" height="17.400000000000006" fill="#ff0000" stroke="#000" stroke-width="1.2"/><text x="5" y="13.8" font-size="14.9" fill="#000" text-anchor="start" font-weight="400">EV: LAND<tspan dy="-1.8">_</tspan><tspan dy="1.8">COMPLETE</tspan></text></svg><svg x="1505" y="85.8" width="120" height="18.400000000000006" overflow="hidden"><rect x="0.5" y="0.5" width="119" height="17.400000000000006" fill="#ff0000" stroke="#000" stroke-width="1.2"/><text x="115" y="13.8" font-size="14.9" fill="#000" text-anchor="end" font-weight="400">EV: MOTORS<tspan dy="-1.8">_</tspan><tspan dy="1.8">INTERLOCK</tspan><tspan dy="-1.8">_</tspan><tspan dy="1.8">DISABLED</tspan></text></svg><svg x="1625" y="85.8" width="47.40000000000009" height="18.400000000000006" overflow="hidden"><rect x="0.5" y="0.5" width="46.40000000000009" height="17.400000000000006" fill="#ff0000" stroke="#000" stroke-width="1.2"/><text x="40.40000000000009" y="13.8" font-size="14.9" fill="#000" text-anchor="end" font-weight="400">EV: ERROR-1</text></svg><svg x="401.3" y="104.8" width="141.2" height="18.200000000000003" overflow="hidden"><rect x="0.5" y="0.5" width="140.2" height="17.200000000000003" fill="#ff0000" stroke="#000" stroke-width="1.2"/><text x="5.5" y="13.7" font-size="14.9" fill="#000" text-anchor="start" font-weight="400">EV: AUTO<tspan dy="-1.8">_</tspan><tspan dy="1.8">ARMED</tspan></text></svg><svg x="542.5" y="104.8" width="110.0" height="18.200000000000003" overflow="hidden"><rect x="0.5" y="0.5" width="109.0" height="17.200000000000003" fill="#ff0000" stroke="#000" stroke-width="1.2"/><text x="103.0" y="13.7" font-size="14.9" fill="#000" text-anchor="end" font-weight="400">EV: NOT<tspan dy="-1.8">_</tspan><tspan dy="1.8">LAND</tspan><tspan dy="-1.8">_</tspan><tspan dy="1.8">COMPLETE</tspan><tspan dy="-1.8">_</tspan><tspan dy="1.8">MAYBE</tspan></text></svg><svg x="1332.8" y="104.8" width="230.79999999999995" height="18.200000000000003" overflow="hidden"><rect x="0.5" y="0.5" width="229.79999999999995" height="17.200000000000003" fill="#ff0000" stroke="#000" stroke-width="1.2"/><text x="5.5" y="13.7" font-size="14.9" fill="#000" text-anchor="start" font-weight="400">EV: LAND<tspan dy="-1.8">_</tspan><tspan dy="1.8">COMPLETE</tspan><tspan dy="-1.8">_</tspan><tspan dy="1.8">MAYBE</tspan></text></svg><svg x="1563.6" y="104.8" width="69.80000000000018" height="18.200000000000003" overflow="hidden"><rect x="0.5" y="0.5" width="68.80000000000018" height="17.200000000000003" fill="#ff0000" stroke="#000" stroke-width="1.2"/><text x="62.80000000000018" y="13.7" font-size="14.9" fill="#000" text-anchor="end" font-weight="400">EV: MOTORS<tspan dy="-1.8">_</tspan><tspan dy="1.8">STOPPED</tspan></text></svg><svg x="391.5" y="890.9" width="63.5" height="18.600000000000023" overflow="hidden"><rect x="0.5" y="0.5" width="62.5" height="17.600000000000023" fill="#ffffff" stroke="#000" stroke-width="1.2"/><text x="2.5" y="13.9" font-size="15" fill="#000" text-anchor="start" font-weight="400">Stabilize</text></svg><svg x="455" y="890.9" width="19" height="18.600000000000023" overflow="hidden"><rect x="0.5" y="0.5" width="18" height="17.600000000000023" fill="#ffffff" stroke="#000" stroke-width="1.2"/><text x="15.7" y="13.9" font-size="15" fill="#000" text-anchor="end" font-weight="400">Build</text></svg><svg x="474" y="890.9" width="133" height="18.600000000000023" overflow="hidden"><rect x="0.5" y="0.5" width="132" height="17.600000000000023" fill="#ffffff" stroke="#000" stroke-width="1.2"/><text x="3.5" y="13.9" font-size="15" fill="#000" text-anchor="start" font-weight="400" textLength="128" lengthAdjust="spacingAndGlyphs">V4.6.2 (1ebd4d99)</text></svg><svg x="607" y="890.9" width="88" height="18.600000000000023" overflow="hidden"><rect x="0.5" y="0.5" width="87" height="17.600000000000023" fill="#ffffff" stroke="#000" stroke-width="1.2"/><text x="2" y="13.9" font-size="15" fill="#000" text-anchor="start" font-weight="400" textLength="83" lengthAdjust="spacingAndGlyphs">C 38383235</text></svg><svg x="391.5" y="909.5" width="63.5" height="18.0" overflow="hidden"><rect x="0.5" y="0.5" width="62.5" height="17.0" fill="#ffffff" stroke="#000" stroke-width="1.2"/><text x="2.5" y="13.9" font-size="15" fill="#000" text-anchor="start" font-weight="400">Stabilize</text></svg><svg x="455" y="909.5" width="76" height="18.0" overflow="hidden"><rect x="0.5" y="0.5" width="75" height="17.0" fill="#ffffff" stroke="#000" stroke-width="1.2"/><text x="4.6" y="13.9" font-size="15" fill="#000" text-anchor="start" font-weight="400" textLength="68" lengthAdjust="spacingAndGlyphs">88b84600</text></svg><svg x="531" y="909.5" width="76" height="18.0" overflow="hidden"><rect x="0.5" y="0.5" width="75" height="17.0" fill="#ffffff" stroke="#000" stroke-width="1.2"/><text x="1.5" y="13.9" font-size="15" fill="#000" text-anchor="start" font-weight="400">1669/5376</text></svg><svg x="607" y="909.5" width="164" height="18.0" overflow="hidden"><rect x="0.5" y="0.5" width="163" height="17.0" fill="#ffffff" stroke="#000" stroke-width="1.2"/><text x="158.5" y="13.9" font-size="15" fill="#000" text-anchor="end" font-weight="400">NEXT CORE 1.00 (49f616)</text></svg><svg x="908" y="909.5" width="43.5" height="18.0" overflow="hidden"><rect x="0.5" y="0.5" width="42.5" height="17.0" fill="#ffffff" stroke="#000" stroke-width="1.2"/><text x="3" y="13.9" font-size="15" fill="#000" text-anchor="start" font-weight="400">Loiter</text></svg><svg x="1065.6" y="890.9" width="355.4000000000001" height="18.600000000000023" overflow="hidden"><rect x="0.5" y="0.5" width="354.4000000000001" height="17.600000000000023" fill="#ffffff" stroke="#000" stroke-width="1.2"/><text x="351.4000000000001" y="13.9" font-size="15" fill="#000" text-anchor="end" font-weight="400" textLength="348" lengthAdjust="spacingAndGlyphs">EKF3 IMU1 MAG0 in-flight yaw alignment complete</text></svg><svg x="1065.6" y="909.5" width="355.4000000000001" height="18.0" overflow="hidden"><rect x="0.5" y="0.5" width="354.4000000000001" height="17.0" fill="#ffffff" stroke="#000" stroke-width="1.2"/><text x="351.4000000000001" y="13.9" font-size="15" fill="#000" text-anchor="end" font-weight="400" textLength="348" lengthAdjust="spacingAndGlyphs">EKF3 IMU0 MAG0 in-flight yaw alignment complete</text></svg><svg x="1180.3" y="890.9" width="54.90000000000009" height="18.600000000000023" overflow="hidden"><rect x="0.5" y="0.5" width="53.90000000000009" height="17.600000000000023" fill="#ffffff" stroke="#000" stroke-width="1.2"/><text x="1.5" y="13.9" font-size="15" fill="#000" text-anchor="start" font-weight="400">AltHold</text></svg><svg x="1204.7" y="909.5" width="43.799999999999955" height="18.0" overflow="hidden"><rect x="0.5" y="0.5" width="42.799999999999955" height="17.0" fill="#ffffff" stroke="#000" stroke-width="1.2"/><text x="2.5" y="13.9" font-size="15" fill="#000" text-anchor="start" font-weight="400">Loiter</text></svg><svg x="1483.8" y="890.9" width="157.70000000000005" height="18.600000000000023" overflow="hidden"><rect x="0.5" y="0.5" width="156.70000000000005" height="17.600000000000023" fill="#ffffff" stroke="#000" stroke-width="1.2"/><text x="2" y="13.9" font-size="15" fill="#000" text-anchor="start" font-weight="400" textLength="150.5" lengthAdjust="spacingAndGlyphs">Internal Errors 0x4000</text></svg><rect x="1704.7" y="30.2" width="214" height="978" fill="#252628"/><rect x="1709.5" y="29.5" width="209" height="940" fill="#6c7178"/><rect x="1711" y="30.5" width="207" height="938.5" fill="#252628"/><rect x="1895.5" y="30" width="1" height="939" fill="#ffffff"/><rect x="1896.5" y="30" width="20.5" height="939" fill="#f0f0f0"/><rect x="1906" y="417.5" width="2.2" height="420" rx="1" fill="#858585"/><rect x="1710" y="969" width="208" height="38" fill="#434446"/><rect x="1710" y="968.5" width="208" height="1.2" fill="#8a8d92"/><text x="1709" y="983.4" font-size="13.2" fill="#e8e8e8" text-anchor="start" font-weight="400" textLength="156" lengthAdjust="spacingAndGlyphs">normalized output for Pitch</text><svg x="1711" y="30" width="184.5" height="939" overflow="hidden"><line x1="16.5" y1="0" x2="16.5" y2="950" stroke="#c8c8c8" stroke-width="1" stroke-dasharray="1 1.2"/><line x1="40.5" y1="320" x2="40.5" y2="592" stroke="#c8c8c8" stroke-width="1" stroke-dasharray="1 1.2"/><rect x="10.5" y="6" width="12" height="12" rx="1.5" fill="#dcdcdc"/><rect x="11.5" y="7" width="10" height="10" fill="#f4f4f4"/><rect x="13.5" y="11.4" width="6" height="1.3" fill="#3a4fa0"/><rect x="15.9" y="9" width="1.3" height="6" fill="#3a4fa0"/><text transform="translate(46,17.299999999999997) scale(0.875,1)" font-size="15.2" fill="#e6e6e6">ORGN</text><rect x="10.5" y="26" width="12" height="12" rx="1.5" fill="#dcdcdc"/><rect x="11.5" y="27" width="10" height="10" fill="#f4f4f4"/><rect x="13.5" y="31.4" width="6" height="1.3" fill="#3a4fa0"/><rect x="15.9" y="29" width="1.3" height="6" fill="#3a4fa0"/><text transform="translate(46,37.3) scale(0.875,1)" font-size="15.2" fill="#e6e6e6">PARM</text><rect x="10.5" y="46" width="12" height="12" rx="1.5" fill="#dcdcdc"/><rect x="11.5" y="47" width="10" height="10" fill="#f4f4f4"/><rect x="13.5" y="51.4" width="6" height="1.3" fill="#3a4fa0"/><rect x="15.9" y="49" width="1.3" height="6" fill="#3a4fa0"/><text transform="translate(46,57.3) scale(0.875,1)" font-size="15.2" fill="#e6e6e6">PIDA</text><rect x="10.5" y="66" width="12" height="12" rx="1.5" fill="#dcdcdc"/><rect x="11.5" y="67" width="10" height="10" fill="#f4f4f4"/><rect x="13.5" y="71.4" width="6" height="1.3" fill="#3a4fa0"/><rect x="15.9" y="69" width="1.3" height="6" fill="#3a4fa0"/><text transform="translate(46,77.3) scale(0.875,1)" font-size="15.2" fill="#e6e6e6">PIDE</text><rect x="10.5" y="86" width="12" height="12" rx="1.5" fill="#dcdcdc"/><rect x="11.5" y="87" width="10" height="10" fill="#f4f4f4"/><rect x="13.5" y="91.4" width="6" height="1.3" fill="#3a4fa0"/><rect x="15.9" y="89" width="1.3" height="6" fill="#3a4fa0"/><text transform="translate(46,97.3) scale(0.875,1)" font-size="15.2" fill="#e6e6e6">PIDN</text><rect x="10.5" y="106" width="12" height="12" rx="1.5" fill="#dcdcdc"/><rect x="11.5" y="107" width="10" height="10" fill="#f4f4f4"/><rect x="13.5" y="111.4" width="6" height="1.3" fill="#3a4fa0"/><rect x="15.9" y="109" width="1.3" height="6" fill="#3a4fa0"/><text transform="translate(46,117.30000000000001) scale(0.875,1)" font-size="15.2" fill="#e6e6e6">PIDP</text><rect x="10.5" y="126" width="12" height="12" rx="1.5" fill="#dcdcdc"/><rect x="11.5" y="127" width="10" height="10" fill="#f4f4f4"/><rect x="13.5" y="131.4" width="6" height="1.3" fill="#3a4fa0"/><rect x="15.9" y="129" width="1.3" height="6" fill="#3a4fa0"/><text transform="translate(46,137.3) scale(0.875,1)" font-size="15.2" fill="#e6e6e6">PIDR</text><rect x="10.5" y="146" width="12" height="12" rx="1.5" fill="#dcdcdc"/><rect x="11.5" y="147" width="10" height="10" fill="#f4f4f4"/><rect x="13.5" y="151.4" width="6" height="1.3" fill="#3a4fa0"/><rect x="15.9" y="149" width="1.3" height="6" fill="#3a4fa0"/><text transform="translate(46,157.3) scale(0.875,1)" font-size="15.2" fill="#e6e6e6">PIDY</text><rect x="10.5" y="166" width="12" height="12" rx="1.5" fill="#dcdcdc"/><rect x="11.5" y="167" width="10" height="10" fill="#f4f4f4"/><rect x="13.5" y="171.4" width="6" height="1.3" fill="#3a4fa0"/><rect x="15.9" y="169" width="1.3" height="6" fill="#3a4fa0"/><text transform="translate(46,177.3) scale(0.875,1)" font-size="15.2" fill="#e6e6e6">PM</text><rect x="10.5" y="186" width="12" height="12" rx="1.5" fill="#dcdcdc"/><rect x="11.5" y="187" width="10" height="10" fill="#f4f4f4"/><rect x="13.5" y="191.4" width="6" height="1.3" fill="#3a4fa0"/><rect x="15.9" y="189" width="1.3" height="6" fill="#3a4fa0"/><text transform="translate(46,197.3) scale(0.875,1)" font-size="15.2" fill="#e6e6e6">POS</text><rect x="10.5" y="206" width="12" height="12" rx="1.5" fill="#dcdcdc"/><rect x="11.5" y="207" width="10" height="10" fill="#f4f4f4"/><rect x="13.5" y="211.4" width="6" height="1.3" fill="#3a4fa0"/><rect x="15.9" y="209" width="1.3" height="6" fill="#3a4fa0"/><text transform="translate(46,217.3) scale(0.875,1)" font-size="15.2" fill="#e6e6e6">POWR</text><rect x="10.5" y="226" width="12" height="12" rx="1.5" fill="#dcdcdc"/><rect x="11.5" y="227" width="10" height="10" fill="#f4f4f4"/><rect x="13.5" y="231.4" width="6" height="1.3" fill="#3a4fa0"/><rect x="15.9" y="229" width="1.3" height="6" fill="#3a4fa0"/><text transform="translate(46,237.3) scale(0.875,1)" font-size="15.2" fill="#e6e6e6">PSCD</text><rect x="10.5" y="246" width="12" height="12" rx="1.5" fill="#dcdcdc"/><rect x="11.5" y="247" width="10" height="10" fill="#f4f4f4"/><rect x="13.5" y="251.4" width="6" height="1.3" fill="#3a4fa0"/><rect x="15.9" y="249" width="1.3" height="6" fill="#3a4fa0"/><text transform="translate(46,257.3) scale(0.875,1)" font-size="15.2" fill="#e6e6e6">PSCE</text><rect x="10.5" y="266" width="12" height="12" rx="1.5" fill="#dcdcdc"/><rect x="11.5" y="267" width="10" height="10" fill="#f4f4f4"/><rect x="13.5" y="271.4" width="6" height="1.3" fill="#3a4fa0"/><rect x="15.9" y="269" width="1.3" height="6" fill="#3a4fa0"/><text transform="translate(46,277.3) scale(0.875,1)" font-size="15.2" fill="#e6e6e6">PSCN</text><rect x="10.5" y="286" width="12" height="12" rx="1.5" fill="#dcdcdc"/><rect x="11.5" y="287" width="10" height="10" fill="#f4f4f4"/><rect x="13.5" y="291.4" width="6" height="1.3" fill="#3a4fa0"/><rect x="15.9" y="289" width="1.3" height="6" fill="#3a4fa0"/><text transform="translate(46,297.3) scale(0.875,1)" font-size="15.2" fill="#e6e6e6">PSOT</text><rect x="10.5" y="306" width="12" height="12" rx="1.5" fill="#dcdcdc"/><rect x="11.5" y="307" width="10" height="10" fill="#f4f4f4"/><rect x="13.5" y="311.4" width="6" height="1.3" fill="#3a4fa0"/><text transform="translate(46,317.3) scale(0.875,1)" font-size="15.2" fill="#e6e6e6">RATE</text><line x1="41" y1="332.5" x2="53" y2="332.5" stroke="#c8c8c8" stroke-width="1" stroke-dasharray="1 1.2"/><rect x="53" y="323.6" width="14" height="14" rx="3" fill="#f2f2f2"/><text transform="translate(70,337.1) scale(0.87,1)" font-size="15.2" fill="#e6e6e6">TimeUS</text><line x1="41" y1="352.5" x2="53" y2="352.5" stroke="#c8c8c8" stroke-width="1" stroke-dasharray="1 1.2"/><rect x="53" y="343.6" width="14" height="14" rx="3" fill="#f2f2f2"/><text transform="translate(70,357.1) scale(0.87,1)" font-size="15.2" fill="#e6e6e6">RDes</text><line x1="41" y1="372.5" x2="53" y2="372.5" stroke="#c8c8c8" stroke-width="1" stroke-dasharray="1 1.2"/><rect x="53" y="363.6" width="14" height="14" rx="3" fill="#f2f2f2"/><text transform="translate(70,377.1) scale(0.87,1)" font-size="15.2" fill="#e6e6e6">R</text><line x1="41" y1="392.5" x2="53" y2="392.5" stroke="#c8c8c8" stroke-width="1" stroke-dasharray="1 1.2"/><rect x="53" y="383.6" width="14" height="14" rx="3" fill="#0a5fc4"/><path d="M56.5 391.1 L59.2 393.6 L63.8 388.40000000000003" fill="none" stroke="#cfe0f5" stroke-width="1.1"/><text transform="translate(70,397.1) scale(0.87,1)" font-size="15.2" fill="#e6e6e6">ROut</text><line x1="41" y1="412.5" x2="53" y2="412.5" stroke="#c8c8c8" stroke-width="1" stroke-dasharray="1 1.2"/><rect x="53" y="403.6" width="14" height="14" rx="3" fill="#f2f2f2"/><text transform="translate(70,417.1) scale(0.87,1)" font-size="15.2" fill="#e6e6e6">PDes</text><line x1="41" y1="432.5" x2="53" y2="432.5" stroke="#c8c8c8" stroke-width="1" stroke-dasharray="1 1.2"/><rect x="53" y="423.6" width="14" height="14" rx="3" fill="#f2f2f2"/><text transform="translate(70,437.1) scale(0.87,1)" font-size="15.2" fill="#e6e6e6">P</text><line x1="41" y1="452.5" x2="53" y2="452.5" stroke="#c8c8c8" stroke-width="1" stroke-dasharray="1 1.2"/><rect x="53" y="443.6" width="14" height="14" rx="3" fill="#0a5fc4"/><path d="M56.5 451.1 L59.2 453.6 L63.8 448.40000000000003" fill="none" stroke="#cfe0f5" stroke-width="1.1"/><text transform="translate(70,457.1) scale(0.87,1)" font-size="15.2" fill="#e6e6e6">POut</text><line x1="41" y1="472.5" x2="53" y2="472.5" stroke="#c8c8c8" stroke-width="1" stroke-dasharray="1 1.2"/><rect x="53" y="463.6" width="14" height="14" rx="3" fill="#f2f2f2"/><text transform="translate(70,477.1) scale(0.87,1)" font-size="15.2" fill="#e6e6e6">YDes</text><line x1="41" y1="492.5" x2="53" y2="492.5" stroke="#c8c8c8" stroke-width="1" stroke-dasharray="1 1.2"/><rect x="53" y="483.6" width="14" height="14" rx="3" fill="#f2f2f2"/><text transform="translate(70,497.1) scale(0.87,1)" font-size="15.2" fill="#e6e6e6">Y</text><line x1="41" y1="512.5" x2="53" y2="512.5" stroke="#c8c8c8" stroke-width="1" stroke-dasharray="1 1.2"/><rect x="53" y="503.6" width="14" height="14" rx="3" fill="#0a5fc4"/><path d="M56.5 511.1 L59.2 513.6 L63.8 508.40000000000003" fill="none" stroke="#cfe0f5" stroke-width="1.1"/><text transform="translate(70,517.1) scale(0.87,1)" font-size="15.2" fill="#e6e6e6">YOut</text><line x1="41" y1="532.5" x2="53" y2="532.5" stroke="#c8c8c8" stroke-width="1" stroke-dasharray="1 1.2"/><rect x="53" y="523.6" width="14" height="14" rx="3" fill="#f2f2f2"/><text transform="translate(70,537.1) scale(0.87,1)" font-size="15.2" fill="#e6e6e6">ADes</text><line x1="41" y1="552.5" x2="53" y2="552.5" stroke="#c8c8c8" stroke-width="1" stroke-dasharray="1 1.2"/><rect x="53" y="543.6" width="14" height="14" rx="3" fill="#f2f2f2"/><text transform="translate(70,557.1) scale(0.87,1)" font-size="15.2" fill="#e6e6e6">A</text><line x1="41" y1="572.5" x2="53" y2="572.5" stroke="#c8c8c8" stroke-width="1" stroke-dasharray="1 1.2"/><rect x="53" y="563.6" width="14" height="14" rx="3" fill="#f2f2f2"/><text transform="translate(70,577.1) scale(0.87,1)" font-size="15.2" fill="#e6e6e6">AOut</text><line x1="41" y1="592.5" x2="53" y2="592.5" stroke="#c8c8c8" stroke-width="1" stroke-dasharray="1 1.2"/><rect x="53" y="583.6" width="14" height="14" rx="3" fill="#f2f2f2"/><text transform="translate(70,597.1) scale(0.87,1)" font-size="15.2" fill="#e6e6e6">AOutSlew</text><rect x="10.5" y="606" width="12" height="12" rx="1.5" fill="#dcdcdc"/><rect x="11.5" y="607" width="10" height="10" fill="#f4f4f4"/><rect x="13.5" y="611.4" width="6" height="1.3" fill="#3a4fa0"/><rect x="15.9" y="609" width="1.3" height="6" fill="#3a4fa0"/><text transform="translate(46,617.3) scale(0.875,1)" font-size="15.2" fill="#e6e6e6">RCI2</text><rect x="10.5" y="626" width="12" height="12" rx="1.5" fill="#dcdcdc"/><rect x="11.5" y="627" width="10" height="10" fill="#f4f4f4"/><rect x="13.5" y="631.4" width="6" height="1.3" fill="#3a4fa0"/><rect x="15.9" y="629" width="1.3" height="6" fill="#3a4fa0"/><text transform="translate(46,637.3) scale(0.875,1)" font-size="15.2" fill="#e6e6e6">RCIN</text><rect x="10.5" y="646" width="12" height="12" rx="1.5" fill="#dcdcdc"/><rect x="11.5" y="647" width="10" height="10" fill="#f4f4f4"/><rect x="13.5" y="651.4" width="6" height="1.3" fill="#3a4fa0"/><rect x="15.9" y="649" width="1.3" height="6" fill="#3a4fa0"/><text transform="translate(46,657.3) scale(0.875,1)" font-size="15.2" fill="#e6e6e6">RCO2</text><rect x="10.5" y="666" width="12" height="12" rx="1.5" fill="#dcdcdc"/><rect x="11.5" y="667" width="10" height="10" fill="#f4f4f4"/><rect x="13.5" y="671.4" width="6" height="1.3" fill="#3a4fa0"/><rect x="15.9" y="669" width="1.3" height="6" fill="#3a4fa0"/><text transform="translate(46,677.3) scale(0.875,1)" font-size="15.2" fill="#e6e6e6">RCOU</text><rect x="10.5" y="686" width="12" height="12" rx="1.5" fill="#dcdcdc"/><rect x="11.5" y="687" width="10" height="10" fill="#f4f4f4"/><rect x="13.5" y="691.4" width="6" height="1.3" fill="#3a4fa0"/><rect x="15.9" y="689" width="1.3" height="6" fill="#3a4fa0"/><text transform="translate(46,697.3) scale(0.875,1)" font-size="15.2" fill="#e6e6e6">RFND</text><rect x="10.5" y="706" width="12" height="12" rx="1.5" fill="#dcdcdc"/><rect x="11.5" y="707" width="10" height="10" fill="#f4f4f4"/><rect x="13.5" y="711.4" width="6" height="1.3" fill="#3a4fa0"/><rect x="15.9" y="709" width="1.3" height="6" fill="#3a4fa0"/><text transform="translate(46,717.3) scale(0.875,1)" font-size="15.2" fill="#e6e6e6">SRTL</text><rect x="10.5" y="726" width="12" height="12" rx="1.5" fill="#dcdcdc"/><rect x="11.5" y="727" width="10" height="10" fill="#f4f4f4"/><rect x="13.5" y="731.4" width="6" height="1.3" fill="#3a4fa0"/><rect x="15.9" y="729" width="1.3" height="6" fill="#3a4fa0"/><text transform="translate(46,737.3) scale(0.875,1)" font-size="15.2" fill="#e6e6e6">STAK</text><rect x="10.5" y="746" width="12" height="12" rx="1.5" fill="#dcdcdc"/><rect x="11.5" y="747" width="10" height="10" fill="#f4f4f4"/><rect x="13.5" y="751.4" width="6" height="1.3" fill="#3a4fa0"/><rect x="15.9" y="749" width="1.3" height="6" fill="#3a4fa0"/><text transform="translate(46,757.3) scale(0.875,1)" font-size="15.2" fill="#e6e6e6">SURF</text><rect x="10.5" y="766" width="12" height="12" rx="1.5" fill="#dcdcdc"/><rect x="11.5" y="767" width="10" height="10" fill="#f4f4f4"/><rect x="13.5" y="771.4" width="6" height="1.3" fill="#3a4fa0"/><rect x="15.9" y="769" width="1.3" height="6" fill="#3a4fa0"/><text transform="translate(46,777.3) scale(0.875,1)" font-size="15.2" fill="#e6e6e6">TERR</text><rect x="10.5" y="786" width="12" height="12" rx="1.5" fill="#dcdcdc"/><rect x="11.5" y="787" width="10" height="10" fill="#f4f4f4"/><rect x="13.5" y="791.4" width="6" height="1.3" fill="#3a4fa0"/><rect x="15.9" y="789" width="1.3" height="6" fill="#3a4fa0"/><text transform="translate(46,797.3) scale(0.875,1)" font-size="15.2" fill="#e6e6e6">TSYN</text><rect x="10.5" y="806" width="12" height="12" rx="1.5" fill="#dcdcdc"/><rect x="11.5" y="807" width="10" height="10" fill="#f4f4f4"/><rect x="13.5" y="811.4" width="6" height="1.3" fill="#3a4fa0"/><rect x="15.9" y="809" width="1.3" height="6" fill="#3a4fa0"/><text transform="translate(46,817.3) scale(0.875,1)" font-size="15.2" fill="#e6e6e6">UART</text><rect x="10.5" y="826" width="12" height="12" rx="1.5" fill="#dcdcdc"/><rect x="11.5" y="827" width="10" height="10" fill="#f4f4f4"/><rect x="13.5" y="831.4" width="6" height="1.3" fill="#3a4fa0"/><rect x="15.9" y="829" width="1.3" height="6" fill="#3a4fa0"/><text transform="translate(46,837.3) scale(0.875,1)" font-size="15.2" fill="#e6e6e6">UBX1</text><rect x="10.5" y="846" width="12" height="12" rx="1.5" fill="#dcdcdc"/><rect x="11.5" y="847" width="10" height="10" fill="#f4f4f4"/><rect x="13.5" y="851.4" width="6" height="1.3" fill="#3a4fa0"/><rect x="15.9" y="849" width="1.3" height="6" fill="#3a4fa0"/><text transform="translate(46,857.3) scale(0.875,1)" font-size="15.2" fill="#e6e6e6">UBX2</text><rect x="10.5" y="866" width="12" height="12" rx="1.5" fill="#dcdcdc"/><rect x="11.5" y="867" width="10" height="10" fill="#f4f4f4"/><rect x="13.5" y="871.4" width="6" height="1.3" fill="#3a4fa0"/><rect x="15.9" y="869" width="1.3" height="6" fill="#3a4fa0"/><text transform="translate(46,877.3) scale(0.875,1)" font-size="15.2" fill="#e6e6e6">UNIT</text><rect x="10.5" y="886" width="12" height="12" rx="1.5" fill="#dcdcdc"/><rect x="11.5" y="887" width="10" height="10" fill="#f4f4f4"/><rect x="13.5" y="891.4" width="6" height="1.3" fill="#3a4fa0"/><rect x="15.9" y="889" width="1.3" height="6" fill="#3a4fa0"/><text transform="translate(46,897.3) scale(0.875,1)" font-size="15.2" fill="#e6e6e6">VER</text><rect x="10.5" y="906" width="12" height="12" rx="1.5" fill="#dcdcdc"/><rect x="11.5" y="907" width="10" height="10" fill="#f4f4f4"/><rect x="13.5" y="911.4" width="6" height="1.3" fill="#3a4fa0"/><rect x="15.9" y="909" width="1.3" height="6" fill="#3a4fa0"/><text transform="translate(46,917.3) scale(0.875,1)" font-size="15.2" fill="#e6e6e6">VIBE</text><rect x="10.5" y="926" width="12" height="12" rx="1.5" fill="#dcdcdc"/><rect x="11.5" y="927" width="10" height="10" fill="#f4f4f4"/><rect x="13.5" y="931.4" width="6" height="1.3" fill="#3a4fa0"/><rect x="15.9" y="929" width="1.3" height="6" fill="#3a4fa0"/><text transform="translate(46,937.3) scale(0.875,1)" font-size="15.2" fill="#e6e6e6">XKF1</text><rect x="45" y="1" width="1" height="1" fill="#d0d0d0"/><rect x="45" y="21" width="1" height="1" fill="#d0d0d0"/><rect x="47" y="1" width="1" height="1" fill="#d0d0d0"/><rect x="47" y="21" width="1" height="1" fill="#d0d0d0"/><rect x="49" y="1" width="1" height="1" fill="#d0d0d0"/><rect x="49" y="21" width="1" height="1" fill="#d0d0d0"/><rect x="51" y="1" width="1" height="1" fill="#d0d0d0"/><rect x="51" y="21" width="1" height="1" fill="#d0d0d0"/><rect x="53" y="1" width="1" height="1" fill="#d0d0d0"/><rect x="53" y="21" width="1" height="1" fill="#d0d0d0"/><rect x="55" y="1" width="1" height="1" fill="#d0d0d0"/><rect x="55" y="21" width="1" height="1" fill="#d0d0d0"/><rect x="57" y="1" width="1" height="1" fill="#d0d0d0"/><rect x="57" y="21" width="1" height="1" fill="#d0d0d0"/><rect x="59" y="1" width="1" height="1" fill="#d0d0d0"/><rect x="59" y="21" width="1" height="1" fill="#d0d0d0"/><rect x="61" y="1" width="1" height="1" fill="#d0d0d0"/><rect x="61" y="21" width="1" height="1" fill="#d0d0d0"/><rect x="63" y="1" width="1" height="1" fill="#d0d0d0"/><rect x="63" y="21" width="1" height="1" fill="#d0d0d0"/><rect x="65" y="1" width="1" height="1" fill="#d0d0d0"/><rect x="65" y="21" width="1" height="1" fill="#d0d0d0"/><rect x="67" y="1" width="1" height="1" fill="#d0d0d0"/><rect x="67" y="21" width="1" height="1" fill="#d0d0d0"/><rect x="69" y="1" width="1" height="1" fill="#d0d0d0"/><rect x="69" y="21" width="1" height="1" fill="#d0d0d0"/><rect x="71" y="1" width="1" height="1" fill="#d0d0d0"/><rect x="71" y="21" width="1" height="1" fill="#d0d0d0"/><rect x="73" y="1" width="1" height="1" fill="#d0d0d0"/><rect x="73" y="21" width="1" height="1" fill="#d0d0d0"/><rect x="75" y="1" width="1" height="1" fill="#d0d0d0"/><rect x="75" y="21" width="1" height="1" fill="#d0d0d0"/><rect x="77" y="1" width="1" height="1" fill="#d0d0d0"/><rect x="77" y="21" width="1" height="1" fill="#d0d0d0"/><rect x="79" y="1" width="1" height="1" fill="#d0d0d0"/><rect x="79" y="21" width="1" height="1" fill="#d0d0d0"/><rect x="81" y="1" width="1" height="1" fill="#d0d0d0"/><rect x="81" y="21" width="1" height="1" fill="#d0d0d0"/><rect x="83" y="1" width="1" height="1" fill="#d0d0d0"/><rect x="83" y="21" width="1" height="1" fill="#d0d0d0"/><rect x="85" y="1" width="1" height="1" fill="#d0d0d0"/><rect x="85" y="21" width="1" height="1" fill="#d0d0d0"/><rect x="87" y="1" width="1" height="1" fill="#d0d0d0"/><rect x="87" y="21" width="1" height="1" fill="#d0d0d0"/><rect x="89" y="1" width="1" height="1" fill="#d0d0d0"/><rect x="89" y="21" width="1" height="1" fill="#d0d0d0"/><rect x="45" y="1" width="1" height="1" fill="#d0d0d0"/><rect x="90" y="1" width="1" height="1" fill="#d0d0d0"/><rect x="45" y="3" width="1" height="1" fill="#d0d0d0"/><rect x="90" y="3" width="1" height="1" fill="#d0d0d0"/><rect x="45" y="5" width="1" height="1" fill="#d0d0d0"/><rect x="90" y="5" width="1" height="1" fill="#d0d0d0"/><rect x="45" y="7" width="1" height="1" fill="#d0d0d0"/><rect x="90" y="7" width="1" height="1" fill="#d0d0d0"/><rect x="45" y="9" width="1" height="1" fill="#d0d0d0"/><rect x="90" y="9" width="1" height="1" fill="#d0d0d0"/><rect x="45" y="11" width="1" height="1" fill="#d0d0d0"/><rect x="90" y="11" width="1" height="1" fill="#d0d0d0"/><rect x="45" y="13" width="1" height="1" fill="#d0d0d0"/><rect x="90" y="13" width="1" height="1" fill="#d0d0d0"/><rect x="45" y="15" width="1" height="1" fill="#d0d0d0"/><rect x="90" y="15" width="1" height="1" fill="#d0d0d0"/><rect x="45" y="17" width="1" height="1" fill="#d0d0d0"/><rect x="90" y="17" width="1" height="1" fill="#d0d0d0"/><rect x="45" y="19" width="1" height="1" fill="#d0d0d0"/><rect x="90" y="19" width="1" height="1" fill="#d0d0d0"/><rect x="45" y="21" width="1" height="1" fill="#d0d0d0"/><rect x="90" y="21" width="1" height="1" fill="#d0d0d0"/></svg><rect x="4.5" y="993" width="87.5" height="30" rx="2" fill="url(#btn)" stroke="#6f9a12" stroke-width="1"/><text x="48.25" y="1012" font-size="14.5" fill="#3a4a1a" text-anchor="middle" font-weight="400">Graph Left</text><rect x="100" y="993" width="89" height="30" rx="2" fill="url(#btn)" stroke="#6f9a12" stroke-width="1"/><text x="144.5" y="1012" font-size="14.5" fill="#3a4a1a" text-anchor="middle" font-weight="400">Graph Right</text><rect x="198" y="993" width="92" height="30" rx="2" fill="url(#btn)" stroke="#6f9a12" stroke-width="1"/><text x="244.0" y="1012" font-size="14.5" fill="#3a4a1a" text-anchor="middle" font-weight="400">Clear Graph</text><rect x="299" y="993" width="92" height="30" rx="2" fill="url(#btn)" stroke="#6f9a12" stroke-width="1"/><text x="345.0" y="1012" font-size="14.5" fill="#3a4a1a" text-anchor="middle" font-weight="400">Load A Log</text><rect x="502" y="1000" width="16" height="16" rx="3" fill="#f2f2f2"/><text x="523" y="1012" font-size="14.5" fill="#e6e6e6" text-anchor="start" font-weight="400">Map</text><rect x="567" y="1000" width="16" height="16" rx="3" fill="#0a5fc4"/><path d="M571 1008.5 L574 1011.5 L579 1005.5" fill="none" stroke="#fff" stroke-width="1.3"/><text x="588" y="1012" font-size="14.5" fill="#e6e6e6" text-anchor="start" font-weight="400">Time</text><rect x="637" y="1000" width="16" height="16" rx="3" fill="#f2f2f2"/><text x="658" y="1012" font-size="14.5" fill="#e6e6e6" text-anchor="start" font-weight="400">Data Table</text><rect x="743" y="1000" width="16" height="16" rx="3" fill="#f2f2f2"/><text x="764" y="1012" font-size="14.5" fill="#e6e6e6" text-anchor="start" font-weight="400">Show Params</text><rect x="863" y="994.5" width="125" height="20" fill="#3a3b3d" stroke="#aaaaaa" stroke-width="1"/><rect x="966" y="995" width="22" height="20" fill="#f0f0f0"/><text x="866" y="1012" font-size="14.5" fill="#e6e6e6" text-anchor="start" font-weight="400">a/None</text><path d="M973 1005 L981 1005 L977 1010 Z" fill="#222"/><rect x="996" y="1000" width="16" height="16" rx="3" fill="#0a5fc4"/><path d="M1000 1008.5 L1003 1011.5 L1008 1005.5" fill="none" stroke="#fff" stroke-width="1.3"/><text x="1017" y="1012" font-size="14.5" fill="#e6e6e6" text-anchor="start" font-weight="400">Mode</text><rect x="1070" y="1000" width="16" height="16" rx="3" fill="#0a5fc4"/><path d="M1074 1008.5 L1077 1011.5 L1082 1005.5" fill="none" stroke="#fff" stroke-width="1.3"/><text x="1091" y="1012" font-size="14.5" fill="#e6e6e6" text-anchor="start" font-weight="400">Errors</text><rect x="1144" y="1000" width="16" height="16" rx="3" fill="#0a5fc4"/><path d="M1148 1008.5 L1151 1011.5 L1156 1005.5" fill="none" stroke="#fff" stroke-width="1.3"/><text x="1165" y="1012" font-size="14.5" fill="#e6e6e6" text-anchor="start" font-weight="400">MSG</text><rect x="1214" y="1000" width="16" height="16" rx="3" fill="#0a5fc4"/><path d="M1218 1008.5 L1221 1011.5 L1226 1005.5" fill="none" stroke="#fff" stroke-width="1.3"/><text x="1235" y="1012" font-size="14.5" fill="#e6e6e6" text-anchor="start" font-weight="400">Events</text></svg></body></html>
